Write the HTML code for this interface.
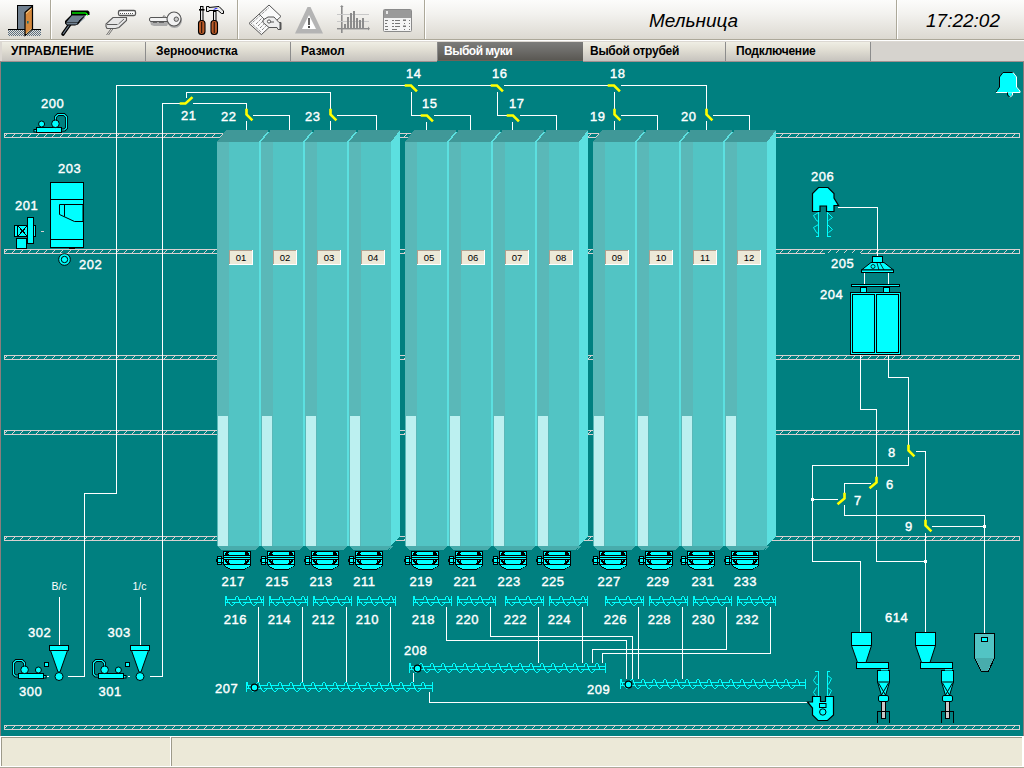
<!DOCTYPE html>
<html><head><meta charset="utf-8"><title>Мельница</title>
<style>
html,body{margin:0;padding:0;width:1024px;height:768px;overflow:hidden;background:#d6d3ce;font-family:"Liberation Sans",sans-serif;}
#hdr{position:absolute;left:0;top:0;width:1024px;height:39px;background:linear-gradient(#fcfcfb 0%,#f3f2ef 35%,#dcd9d1 100%);}
#hdrline1{position:absolute;left:0;top:39px;width:1024px;height:1px;background:#aca899;}
#hdrline2{position:absolute;left:0;top:40px;width:1024px;height:1px;background:#ffffff;}
#tabs{position:absolute;left:0;top:41px;width:1024px;height:21px;background:#dcd8d2;}
.tab{position:absolute;top:1px;height:19px;background:linear-gradient(#efeee4 0%,#e2dfd4 40%,#c6c3be 100%);font:bold 12px "Liberation Sans",sans-serif;color:#000;line-height:19px;box-sizing:border-box;padding-left:9px;white-space:nowrap}
.tab.sep{border-left:1px solid #8c8c8c;}
.tab.act{top:1px;height:19px;background:linear-gradient(#7c7c7a 0%,#6c6b68 50%,#5a5853 100%);color:#fff;border-left:1px solid #8a8a8a;border-bottom:1px solid #6e6258;line-height:18px}
#teal{position:absolute;left:0;top:61px;width:1024px;height:675px;background:#008080;box-sizing:border-box;border-left:1px solid #8c7c7c;border-top:1px solid #a09090;border-right:1px solid #8c7c7c;}
#status{position:absolute;left:0;top:736px;width:1024px;height:32px;background:#ffffff;}
.pan{position:absolute;top:1px;height:29px;background:#ece9d8;box-sizing:border-box;border-top:1px solid #9d9a8a;border-left:1px solid #9d9a8a;}
#scene{position:absolute;left:0;top:0;}
text{font-family:"Liberation Sans",sans-serif;}
text[fill="#fff"]{stroke:#fff;stroke-width:0.4px;letter-spacing:0.5px}
.title{position:absolute;top:10px;font:italic 19px "Liberation Sans",sans-serif;color:#000;white-space:nowrap}
</style></head>
<body>
<div id="hdr"></div><div id="hdrline1"></div><div id="hdrline2"></div>
<div class="title" style="left:649px;">Мельница</div>
<div class="title" style="left:926px;">17:22:02</div>
<div id="tabs">
<div class="tab" style="left:2px;width:143px;letter-spacing:0.1px">УПРАВЛЕНИЕ</div>
<div class="tab sep" style="left:145px;width:145px;padding-left:10px;letter-spacing:-0.1px">Зерноочистка</div>
<div class="tab sep" style="left:290px;width:147px;padding-left:10px">Размол</div>
<div class="tab act" style="left:437px;width:146px;padding-left:6px;letter-spacing:-0.5px">Выбой муки</div>
<div class="tab" style="left:583px;width:142px;padding-left:7px;letter-spacing:-0.27px">Выбой отрубей</div>
<div class="tab sep" style="left:725px;width:145px;padding-left:10px;letter-spacing:-0.22px">Подключение</div>
<div class="tab sep" style="left:870px;width:154px;background:#d6d3ce"></div>
</div>
<div id="teal"></div><div style="position:absolute;left:437px;top:61px;width:146px;height:1px;background:#008080"></div>
<div id="status">
<div class="pan" style="left:1px;width:169px;"></div>
<div class="pan" style="left:171px;width:851px;"></div>
<div style="position:absolute;left:0;top:31px;width:1024px;height:1px;background:#aca899"></div>
</div>
<svg id="scene" width="1024" height="768" viewBox="0 0 1024 768">
<defs><pattern id="hatch133" patternUnits="userSpaceOnUse" x="4" y="134" width="8" height="3"><rect x="2" y="0" width="1" height="1" fill="#d8d0d0"/><rect x="1" y="1" width="1" height="1" fill="#d8d0d0"/><rect x="0" y="2" width="1" height="1" fill="#d8d0d0"/></pattern><pattern id="hatch249" patternUnits="userSpaceOnUse" x="4" y="250" width="8" height="3"><rect x="2" y="0" width="1" height="1" fill="#d8d0d0"/><rect x="1" y="1" width="1" height="1" fill="#d8d0d0"/><rect x="0" y="2" width="1" height="1" fill="#d8d0d0"/></pattern><pattern id="hatch355" patternUnits="userSpaceOnUse" x="4" y="356" width="8" height="3"><rect x="2" y="0" width="1" height="1" fill="#d8d0d0"/><rect x="1" y="1" width="1" height="1" fill="#d8d0d0"/><rect x="0" y="2" width="1" height="1" fill="#d8d0d0"/></pattern><pattern id="hatch430" patternUnits="userSpaceOnUse" x="4" y="431" width="8" height="3"><rect x="2" y="0" width="1" height="1" fill="#d8d0d0"/><rect x="1" y="1" width="1" height="1" fill="#d8d0d0"/><rect x="0" y="2" width="1" height="1" fill="#d8d0d0"/></pattern><pattern id="hatch536" patternUnits="userSpaceOnUse" x="4" y="537" width="8" height="3"><rect x="2" y="0" width="1" height="1" fill="#d8d0d0"/><rect x="1" y="1" width="1" height="1" fill="#d8d0d0"/><rect x="0" y="2" width="1" height="1" fill="#d8d0d0"/></pattern><pattern id="hatch725" patternUnits="userSpaceOnUse" x="4" y="726" width="8" height="3"><rect x="2" y="0" width="1" height="1" fill="#d8d0d0"/><rect x="1" y="1" width="1" height="1" fill="#d8d0d0"/><rect x="0" y="2" width="1" height="1" fill="#d8d0d0"/></pattern>
<pattern id="dots" patternUnits="userSpaceOnUse" x="0" y="0" width="2" height="2"><rect x="0" y="0" width="1" height="1" fill="#5a6e80"/><rect x="1" y="1" width="1" height="1" fill="#5a6e80"/></pattern>
</defs>
<rect x="50" y="0" width="1" height="39" fill="#aca899"/>
<rect x="51" y="0" width="1" height="39" fill="#ffffff"/>
<rect x="237" y="0" width="1" height="39" fill="#aca899"/>
<rect x="238" y="0" width="1" height="39" fill="#ffffff"/>
<rect x="424" y="0" width="1" height="39" fill="#aca899"/>
<rect x="425" y="0" width="1" height="39" fill="#ffffff"/>
<rect x="896" y="0" width="1" height="39" fill="#aca899"/>
<rect x="897" y="0" width="1" height="39" fill="#ffffff"/>
<g>
<rect x="8" y="29" width="33" height="1" fill="#000"/>
<rect x="8" y="30" width="33" height="6" fill="url(#dots)"/>
<rect x="17.5" y="5.5" width="15" height="24" fill="#708090" stroke="#000"/>
<polygon points="25,12.5 32.5,6 32.5,29 25,35.5" fill="#d4883c" stroke="#000" stroke-width="1.2"/>
<line x1="26" y1="13.5" x2="31.5" y2="8.5" stroke="#ffe8b0" stroke-width="0.8"/>
<line x1="26" y1="34" x2="31.5" y2="29" stroke="#ffe8b0" stroke-width="0.8"/>
<rect x="27" y="21" width="1.6" height="2.5" fill="#1c6a78"/>
</g>
<g>
<line x1="70" y1="24" x2="63" y2="34" stroke="#000" stroke-width="3.6" stroke-linecap="round"/>
<line x1="70" y1="24" x2="63" y2="34" stroke="#708090" stroke-width="1.2"/>
<polygon points="71,10.5 88,10.5 89.5,12 89.5,15 86,15 78,24.5 75,25.5 67,25.5 65,23.5 65,21 71,15" fill="#000"/>
<polygon points="72,15.5 86,15.5 78.5,22 66.5,22" fill="#708090"/>
<polygon points="66,22.5 78,22.5 76.5,24.5 67,24.5" fill="#708090"/>
<line x1="72" y1="13" x2="86" y2="13" stroke="#00ff00" stroke-width="1.3"/>
<line x1="86" y1="13" x2="87.8" y2="15.3" stroke="#00ff00" stroke-width="1.3"/>
<line x1="84" y1="16.5" x2="78.5" y2="21.5" stroke="#000" stroke-width="1"/>
<line x1="85" y1="17.5" x2="80" y2="22" stroke="#708090" stroke-width="0.8"/>
</g>
<g>
<rect x="118.5" y="10.5" width="17" height="5" rx="1.5" fill="#fff" stroke="#555" stroke-width="1.3"/>
<g fill="#555"><rect x="120" y="13" width="1" height="1"/><rect x="122" y="13" width="1" height="1"/><rect x="124" y="13" width="1" height="1"/><rect x="126" y="13" width="1" height="1"/><rect x="128" y="13" width="1" height="1"/><rect x="130" y="13" width="1" height="1"/><rect x="132" y="13" width="1" height="1"/></g>
<line x1="111.5" y1="28" x2="106.5" y2="35" stroke="#666" stroke-width="0.9"/>
<line x1="113.5" y1="28" x2="108.5" y2="35" stroke="#666" stroke-width="0.9"/>
<polygon points="113,17.5 126.5,17.5 126.5,20.5 119,27.5 115.5,28.5 107,28.5 106,26.5 106,24 " fill="#e6e6e6" stroke="#5a5a5a" stroke-width="1.1"/>
<line x1="107" y1="24.5" x2="117.5" y2="24.5" stroke="#5a5a5a"/>
<line x1="124" y1="19" x2="118.5" y2="24" stroke="#5a5a5a" stroke-width="0.9"/>
</g>
<g>
<polygon points="150,21 151,25 154,26 167,26 168,24 167,21" fill="#aaa"/>
<circle cx="174.5" cy="20.5" r="7.5" fill="#aaa"/>
<rect x="149.5" y="17.5" width="20" height="4" rx="1.5" fill="#f2f2f2" stroke="#555"/>
<polygon points="162.5,17.5 164,15.5 166,17.5" fill="#f2f2f2" stroke="#555" stroke-width="0.8"/>
<circle cx="174" cy="19" r="7" fill="#f2f2f2" stroke="#555" stroke-width="1.1"/>
<circle cx="176.3" cy="19.2" r="2.2" fill="#ccc" stroke="#555"/>
<line x1="153" y1="22.3" x2="157" y2="22.3" stroke="#555"/>
<line x1="159" y1="22.3" x2="164" y2="22.3" stroke="#555"/>
</g>
<g>
<rect x="200.5" y="6.5" width="2.5" height="14" fill="#e8e8e8" stroke="#000"/>
<rect x="199" y="9" width="5.5" height="1.6" fill="#000"/>
<rect x="198.5" y="20.5" width="6.5" height="14" rx="3" fill="#b85a28" stroke="#000" stroke-width="1.1"/>
<line x1="201.7" y1="22" x2="201.7" y2="33" stroke="#000" stroke-width="0.9"/>
<rect x="213.5" y="11.5" width="2.5" height="9" fill="#e8e8e8" stroke="#000"/>
<rect x="211" y="20.5" width="6.5" height="14" rx="3" fill="#b85a28" stroke="#000" stroke-width="1.1"/>
<line x1="214.2" y1="22" x2="214.2" y2="33" stroke="#000" stroke-width="0.9"/>
<polygon points="206.5,6.5 209,6.5 209,7.5 219,6.5 223.5,11 223.5,13.5 221.5,13.5 218,10.5 209,10.5 209,11.5 206.5,11.5" fill="#e8e8e8" stroke="#000"/>
<polygon points="213,9.5 216,8 218,8 215,9.5" fill="#0000ff"/>
</g>
<g>
<polygon points="249,23.4 269,5 281,16.4 261.4,34.6" fill="#fafafa" stroke="#555" stroke-width="1"/>
<polyline points="251.5,23.4 269,7.5" fill="none" stroke="#666" stroke-width="1" stroke-dasharray="1,1"/>
<polyline points="251.5,23.4 261.4,32.3" fill="none" stroke="#666" stroke-width="1" stroke-dasharray="1,1"/>
<line x1="259" y1="14" x2="272" y2="27" stroke="#555" stroke-width="0.9"/>
<line x1="256" y1="24" x2="262" y2="18" stroke="#555" stroke-dasharray="1,1"/>
<line x1="258" y1="26" x2="263" y2="21" stroke="#555" stroke-dasharray="1,1"/>
<line x1="260" y1="28" x2="265" y2="23" stroke="#555" stroke-dasharray="1,1"/>
<line x1="262" y1="30" x2="266" y2="26" stroke="#555" stroke-dasharray="1,1"/>
<polygon points="263,20 268,17 274,17 279,22.5 281,22.5 281,29.5 278,29.5 277,27.5 269,27.5 263,22.5" fill="#eee" stroke="#555"/>
<circle cx="269" cy="21.5" r="1.6" fill="#fff" stroke="#555"/>
<line x1="270" y1="22" x2="274" y2="22" stroke="#555"/>
<rect x="279.5" y="22" width="1.5" height="7.5" fill="#555"/>
</g>
<g>
<polygon points="307.5,7 310.5,7 323,33.5 295,33.5" fill="#b4b4b4"/>
<polygon points="309,15 316,29 302,29" fill="#fff"/>
<rect x="308" y="18" width="2" height="7" fill="#666"/>
<rect x="308" y="26" width="2" height="2" fill="#444"/>
</g>
<g fill="#8c8c8c">
<rect x="341" y="6" width="1.6" height="27"/>
<polygon points="340,7 341.8,5 343.6,7"/>
<rect x="337" y="28" width="32" height="1.4"/>
<polygon points="368,26.5 370,28.7 368,30.5"/>
<rect x="337" y="14" width="32" height="1" fill="#c8c8c8"/>
<rect x="337" y="21" width="32" height="1" fill="#c8c8c8"/>
<rect x="344" y="24" width="2" height="4"/>
<rect x="347" y="17" width="2" height="11"/>
<rect x="350" y="13" width="2" height="15"/>
<rect x="353" y="11" width="2" height="17"/>
<rect x="356" y="18" width="2" height="10"/>
<rect x="359" y="20" width="2" height="8"/>
<rect x="362" y="18" width="2" height="10"/>
</g>
<g>
<rect x="383.5" y="9.5" width="28" height="22" rx="1" fill="#f4f4f4" stroke="#8a8a8a"/>
<rect x="384" y="10" width="27" height="8" fill="#9a9a9a"/>
<rect x="386" y="11" width="2" height="3" fill="#e8e8e8"/>
<g fill="#777"><rect x="385" y="20" width="3" height="1"/><rect x="392" y="20" width="2" height="1"/><rect x="395" y="20" width="5" height="1"/><rect x="403" y="19.5" width="3" height="1.5"/><rect x="409" y="20" width="1" height="1"/>
<rect x="385" y="23" width="2" height="1"/><rect x="392" y="23" width="2" height="1"/><rect x="395" y="23" width="5" height="1"/><rect x="404" y="23" width="1" height="1"/><rect x="409" y="23" width="1" height="1"/>
<rect x="385" y="26" width="3" height="1"/><rect x="392" y="26" width="2" height="1"/><rect x="395" y="26" width="5" height="1"/><rect x="403" y="25.5" width="3" height="1.5"/><rect x="409" y="26" width="1" height="1"/>
<rect x="385" y="29" width="3" height="1"/><rect x="392" y="29" width="5" height="1"/><rect x="404" y="29" width="1" height="1"/><rect x="409" y="29" width="1" height="1"/></g>
</g>
<g shape-rendering="crispEdges">
<rect x="4" y="133" width="1016" height="1" fill="#d8d0d0"/>
<rect x="4" y="137" width="1016" height="1" fill="#d8d0d0"/>
<rect x="4" y="133" width="1" height="5" fill="#d8d0d0"/>
<rect x="1019" y="133" width="1" height="5" fill="#d8d0d0"/>
<rect x="5" y="134" width="1014" height="3" fill="url(#hatch133)"/>
<rect x="4" y="249" width="1016" height="1" fill="#d8d0d0"/>
<rect x="4" y="253" width="1016" height="1" fill="#d8d0d0"/>
<rect x="4" y="249" width="1" height="5" fill="#d8d0d0"/>
<rect x="1019" y="249" width="1" height="5" fill="#d8d0d0"/>
<rect x="5" y="250" width="1014" height="3" fill="url(#hatch249)"/>
<rect x="4" y="355" width="1016" height="1" fill="#d8d0d0"/>
<rect x="4" y="359" width="1016" height="1" fill="#d8d0d0"/>
<rect x="4" y="355" width="1" height="5" fill="#d8d0d0"/>
<rect x="1019" y="355" width="1" height="5" fill="#d8d0d0"/>
<rect x="5" y="356" width="1014" height="3" fill="url(#hatch355)"/>
<rect x="4" y="430" width="1016" height="1" fill="#d8d0d0"/>
<rect x="4" y="434" width="1016" height="1" fill="#d8d0d0"/>
<rect x="4" y="430" width="1" height="5" fill="#d8d0d0"/>
<rect x="1019" y="430" width="1" height="5" fill="#d8d0d0"/>
<rect x="5" y="431" width="1014" height="3" fill="url(#hatch430)"/>
<rect x="4" y="536" width="1016" height="1" fill="#d8d0d0"/>
<rect x="4" y="540" width="1016" height="1" fill="#d8d0d0"/>
<rect x="4" y="536" width="1" height="5" fill="#d8d0d0"/>
<rect x="1019" y="536" width="1" height="5" fill="#d8d0d0"/>
<rect x="5" y="537" width="1014" height="3" fill="url(#hatch536)"/>
<rect x="4" y="725" width="1016" height="1" fill="#d8d0d0"/>
<rect x="4" y="729" width="1016" height="1" fill="#d8d0d0"/>
<rect x="4" y="725" width="1" height="5" fill="#d8d0d0"/>
<rect x="1019" y="725" width="1" height="5" fill="#d8d0d0"/>
<rect x="5" y="726" width="1014" height="3" fill="url(#hatch725)"/>
<rect x="825" y="253" width="36" height="1" fill="#008080"/>
<rect x="116" y="85" width="1" height="409" fill="#fff"/>
<rect x="116" y="85" width="290" height="1" fill="#fff"/>
<rect x="418" y="85" width="74" height="1" fill="#fff"/>
<rect x="504" y="85" width="105" height="1" fill="#fff"/>
<rect x="621" y="85" width="86" height="1" fill="#fff"/>
<rect x="706" y="85" width="1" height="25" fill="#fff"/>
<rect x="84" y="493" width="33" height="1" fill="#fff"/>
<rect x="84" y="493" width="1" height="184" fill="#fff"/>
<rect x="68" y="676" width="17" height="1" fill="#fff"/>
<rect x="162" y="103" width="1" height="574" fill="#fff"/>
<rect x="162" y="103" width="19" height="1" fill="#fff"/>
<rect x="193" y="103" width="54" height="1" fill="#fff"/>
<rect x="246" y="103" width="1" height="7" fill="#fff"/>
<rect x="246" y="121" width="1" height="9" fill="#fff"/>
<rect x="186" y="92" width="1" height="6" fill="#fff"/>
<rect x="186" y="92" width="145" height="1" fill="#fff"/>
<rect x="330" y="92" width="1" height="18" fill="#fff"/>
<rect x="330" y="121" width="1" height="9" fill="#fff"/>
<rect x="253" y="115" width="37" height="1" fill="#fff"/>
<rect x="289" y="115" width="1" height="15" fill="#fff"/>
<rect x="337" y="115" width="40" height="1" fill="#fff"/>
<rect x="376" y="115" width="1" height="15" fill="#fff"/>
<rect x="411" y="92" width="1" height="24" fill="#fff"/>
<rect x="411" y="115" width="11" height="1" fill="#fff"/>
<rect x="426" y="122" width="1" height="8" fill="#fff"/>
<rect x="434" y="115" width="37" height="1" fill="#fff"/>
<rect x="470" y="115" width="1" height="15" fill="#fff"/>
<rect x="497" y="92" width="1" height="24" fill="#fff"/>
<rect x="497" y="115" width="11" height="1" fill="#fff"/>
<rect x="512" y="122" width="1" height="8" fill="#fff"/>
<rect x="520" y="115" width="37" height="1" fill="#fff"/>
<rect x="556" y="115" width="1" height="15" fill="#fff"/>
<rect x="614" y="92" width="1" height="18" fill="#fff"/>
<rect x="614" y="121" width="1" height="9" fill="#fff"/>
<rect x="621" y="115" width="37" height="1" fill="#fff"/>
<rect x="657" y="115" width="1" height="15" fill="#fff"/>
<rect x="706" y="121" width="1" height="9" fill="#fff"/>
<rect x="713" y="115" width="37" height="1" fill="#fff"/>
<rect x="749" y="115" width="1" height="15" fill="#fff"/>
<rect x="150" y="676" width="13" height="1" fill="#fff"/>
<rect x="59" y="597" width="1" height="49" fill="#fff"/>
<rect x="140" y="597" width="1" height="49" fill="#fff"/>
<rect x="258" y="607" width="1" height="75" fill="#fff"/>
<rect x="302" y="607" width="1" height="75" fill="#fff"/>
<rect x="346" y="607" width="1" height="75" fill="#fff"/>
<rect x="390" y="607" width="1" height="75" fill="#fff"/>
<rect x="446" y="607" width="1" height="34" fill="#fff"/>
<rect x="446" y="640" width="181" height="1" fill="#fff"/>
<rect x="626" y="640" width="1" height="39" fill="#fff"/>
<rect x="490" y="607" width="1" height="30" fill="#fff"/>
<rect x="490" y="636" width="143" height="1" fill="#fff"/>
<rect x="632" y="636" width="1" height="43" fill="#fff"/>
<rect x="538" y="607" width="1" height="56" fill="#fff"/>
<rect x="582" y="607" width="1" height="56" fill="#fff"/>
<rect x="638" y="607" width="1" height="72" fill="#fff"/>
<rect x="682" y="607" width="1" height="72" fill="#fff"/>
<rect x="726" y="607" width="1" height="43" fill="#fff"/>
<rect x="592" y="649" width="135" height="1" fill="#fff"/>
<rect x="592" y="649" width="1" height="14" fill="#fff"/>
<rect x="770" y="607" width="1" height="47" fill="#fff"/>
<rect x="602" y="653" width="169" height="1" fill="#fff"/>
<rect x="602" y="653" width="1" height="10" fill="#fff"/>
<rect x="413" y="673" width="1" height="9" fill="#fff"/>
<rect x="429" y="692" width="1" height="11" fill="#fff"/>
<rect x="429" y="702" width="379" height="1" fill="#fff"/>
<rect x="838" y="207" width="40" height="1" fill="#fff"/>
<rect x="877" y="207" width="1" height="50" fill="#fff"/>
<rect x="864" y="272" width="1" height="13" fill="#fff"/>
<rect x="888" y="272" width="1" height="13" fill="#fff"/>
<rect x="860" y="355" width="1" height="55" fill="#fff"/>
<rect x="860" y="409" width="17" height="1" fill="#fff"/>
<rect x="876" y="409" width="1" height="69" fill="#fff"/>
<rect x="888" y="355" width="1" height="23" fill="#fff"/>
<rect x="888" y="377" width="21" height="1" fill="#fff"/>
<rect x="908" y="377" width="1" height="69" fill="#fff"/>
<rect x="916" y="451" width="10" height="1" fill="#fff"/>
<rect x="925" y="451" width="1" height="70" fill="#fff"/>
<rect x="908" y="457" width="1" height="9" fill="#fff"/>
<rect x="812" y="465" width="97" height="1" fill="#fff"/>
<rect x="812" y="465" width="1" height="97" fill="#fff"/>
<rect x="812" y="561" width="49" height="1" fill="#fff"/>
<rect x="860" y="561" width="1" height="72" fill="#fff"/>
<rect x="844" y="483" width="27" height="1" fill="#fff"/>
<rect x="844" y="483" width="1" height="11" fill="#fff"/>
<rect x="812" y="499" width="26" height="1" fill="#fff"/>
<rect x="876" y="490" width="1" height="72" fill="#fff"/>
<rect x="876" y="561" width="50" height="1" fill="#fff"/>
<rect x="925" y="533" width="1" height="100" fill="#fff"/>
<rect x="844" y="505" width="1" height="11" fill="#fff"/>
<rect x="844" y="515" width="141" height="1" fill="#fff"/>
<rect x="984" y="515" width="1" height="119" fill="#fff"/>
<rect x="932" y="526" width="53" height="1" fill="#fff"/>
<rect x="811" y="498" width="3" height="3" fill="#fff"/>
<rect x="983" y="525" width="3" height="3" fill="#fff"/>
<rect x="924" y="560" width="3" height="3" fill="#fff"/>
</g>
<polyline points="181,103.5 185.5,103.5 191.5,98" fill="none" stroke="#ffff00" stroke-width="2.6" stroke-linecap="square"/>
<polyline points="246.5,110 246.5,114.5 251.5,119.5" fill="none" stroke="#ffff00" stroke-width="2.6" stroke-linecap="square" stroke-linejoin="miter"/>
<polyline points="330.5,110 330.5,114.5 335.5,119.5" fill="none" stroke="#ffff00" stroke-width="2.6" stroke-linecap="square" stroke-linejoin="miter"/>
<polyline points="406,85.5 411,85.5 416,90.5" fill="none" stroke="#ffff00" stroke-width="2.6" stroke-linecap="square" stroke-linejoin="miter"/>
<polyline points="422,115.5 427,115.5 432,120.5" fill="none" stroke="#ffff00" stroke-width="2.6" stroke-linecap="square" stroke-linejoin="miter"/>
<polyline points="492,85.5 497,85.5 502,90.5" fill="none" stroke="#ffff00" stroke-width="2.6" stroke-linecap="square" stroke-linejoin="miter"/>
<polyline points="508,115.5 513,115.5 518,120.5" fill="none" stroke="#ffff00" stroke-width="2.6" stroke-linecap="square" stroke-linejoin="miter"/>
<polyline points="609,85.5 614,85.5 619,90.5" fill="none" stroke="#ffff00" stroke-width="2.6" stroke-linecap="square" stroke-linejoin="miter"/>
<polyline points="614.5,110 614.5,114.5 619.5,119.5" fill="none" stroke="#ffff00" stroke-width="2.6" stroke-linecap="square" stroke-linejoin="miter"/>
<polyline points="706.5,110 706.5,114.5 711.5,119.5" fill="none" stroke="#ffff00" stroke-width="2.6" stroke-linecap="square" stroke-linejoin="miter"/>
<polyline points="908.5,446 908.5,450.5 913.5,455.5" fill="none" stroke="#ffff00" stroke-width="2.6" stroke-linecap="square" stroke-linejoin="miter"/>
<polyline points="925.5,521 925.5,525.5 930.5,530.5" fill="none" stroke="#ffff00" stroke-width="2.6" stroke-linecap="square" stroke-linejoin="miter"/>
<polyline points="876.5,478 876.5,482.5 870.5,487.5" fill="none" stroke="#ffff00" stroke-width="2.6" stroke-linecap="square" stroke-linejoin="miter"/>
<polyline points="844.5,494 844.5,498.5 838.5,503.5" fill="none" stroke="#ffff00" stroke-width="2.6" stroke-linecap="square" stroke-linejoin="miter"/>
<g shape-rendering="crispEdges">
<polygon points="217,142 226,130 400,130 400,142" fill="#409898" />
<rect x="217" y="142" width="174" height="404" fill="#52c4c4"/>
<polygon points="391,142 400,130 400,536 391,546" fill="#5ce0e0" />
<rect x="217" y="142" width="12" height="404" fill="#5ab8b8"/>
<rect x="218" y="416" width="10" height="130" fill="#bcf0f0"/>
<polygon points="217,546 259,546 255,550 221,550" fill="#48acac" />
<rect x="259" y="142" width="2" height="404" fill="#5ce0e0"/>
<polygon points="259,142 268,131 270,131 261,142" fill="#5ce0e0" />
<rect x="268" y="130" width="2" height="2" fill="#00807f"/>
<rect x="261" y="142" width="12" height="404" fill="#5ab8b8"/>
<rect x="262" y="416" width="10" height="130" fill="#bcf0f0"/>
<polygon points="261,546 303,546 299,550 265,550" fill="#48acac" />
<rect x="303" y="142" width="2" height="404" fill="#5ce0e0"/>
<polygon points="303,142 312,131 314,131 305,142" fill="#5ce0e0" />
<rect x="312" y="130" width="2" height="2" fill="#00807f"/>
<rect x="305" y="142" width="12" height="404" fill="#5ab8b8"/>
<rect x="306" y="416" width="10" height="130" fill="#bcf0f0"/>
<polygon points="305,546 347,546 343,550 309,550" fill="#48acac" />
<rect x="347" y="142" width="2" height="404" fill="#5ce0e0"/>
<polygon points="347,142 356,131 358,131 349,142" fill="#5ce0e0" />
<rect x="356" y="130" width="2" height="2" fill="#00807f"/>
<rect x="349" y="142" width="12" height="404" fill="#5ab8b8"/>
<rect x="350" y="416" width="10" height="130" fill="#bcf0f0"/>
<polygon points="349,546 391,546 387,550 353,550" fill="#48acac" />
<polygon points="391,546 393,546 389,550" fill="#48acac" />
<polygon points="405,142 414,130 588,130 588,142" fill="#409898" />
<rect x="405" y="142" width="174" height="404" fill="#52c4c4"/>
<polygon points="579,142 588,130 588,536 579,546" fill="#5ce0e0" />
<rect x="405" y="142" width="12" height="404" fill="#5ab8b8"/>
<rect x="406" y="416" width="10" height="130" fill="#bcf0f0"/>
<polygon points="405,546 447,546 443,550 409,550" fill="#48acac" />
<rect x="447" y="142" width="2" height="404" fill="#5ce0e0"/>
<polygon points="447,142 456,131 458,131 449,142" fill="#5ce0e0" />
<rect x="456" y="130" width="2" height="2" fill="#00807f"/>
<rect x="449" y="142" width="12" height="404" fill="#5ab8b8"/>
<rect x="450" y="416" width="10" height="130" fill="#bcf0f0"/>
<polygon points="449,546 491,546 487,550 453,550" fill="#48acac" />
<rect x="491" y="142" width="2" height="404" fill="#5ce0e0"/>
<polygon points="491,142 500,131 502,131 493,142" fill="#5ce0e0" />
<rect x="500" y="130" width="2" height="2" fill="#00807f"/>
<rect x="493" y="142" width="12" height="404" fill="#5ab8b8"/>
<rect x="494" y="416" width="10" height="130" fill="#bcf0f0"/>
<polygon points="493,546 535,546 531,550 497,550" fill="#48acac" />
<rect x="535" y="142" width="2" height="404" fill="#5ce0e0"/>
<polygon points="535,142 544,131 546,131 537,142" fill="#5ce0e0" />
<rect x="544" y="130" width="2" height="2" fill="#00807f"/>
<rect x="537" y="142" width="12" height="404" fill="#5ab8b8"/>
<rect x="538" y="416" width="10" height="130" fill="#bcf0f0"/>
<polygon points="537,546 579,546 575,550 541,550" fill="#48acac" />
<polygon points="579,546 581,546 577,550" fill="#48acac" />
<polygon points="593,142 602,130 776,130 776,142" fill="#409898" />
<rect x="593" y="142" width="174" height="404" fill="#52c4c4"/>
<polygon points="767,142 776,130 776,536 767,546" fill="#5ce0e0" />
<rect x="593" y="142" width="12" height="404" fill="#5ab8b8"/>
<rect x="594" y="416" width="10" height="130" fill="#bcf0f0"/>
<polygon points="593,546 635,546 631,550 597,550" fill="#48acac" />
<rect x="635" y="142" width="2" height="404" fill="#5ce0e0"/>
<polygon points="635,142 644,131 646,131 637,142" fill="#5ce0e0" />
<rect x="644" y="130" width="2" height="2" fill="#00807f"/>
<rect x="637" y="142" width="12" height="404" fill="#5ab8b8"/>
<rect x="638" y="416" width="10" height="130" fill="#bcf0f0"/>
<polygon points="637,546 679,546 675,550 641,550" fill="#48acac" />
<rect x="679" y="142" width="2" height="404" fill="#5ce0e0"/>
<polygon points="679,142 688,131 690,131 681,142" fill="#5ce0e0" />
<rect x="688" y="130" width="2" height="2" fill="#00807f"/>
<rect x="681" y="142" width="12" height="404" fill="#5ab8b8"/>
<rect x="682" y="416" width="10" height="130" fill="#bcf0f0"/>
<polygon points="681,546 723,546 719,550 685,550" fill="#48acac" />
<rect x="723" y="142" width="2" height="404" fill="#5ce0e0"/>
<polygon points="723,142 732,131 734,131 725,142" fill="#5ce0e0" />
<rect x="732" y="130" width="2" height="2" fill="#00807f"/>
<rect x="725" y="142" width="12" height="404" fill="#5ab8b8"/>
<rect x="726" y="416" width="10" height="130" fill="#bcf0f0"/>
<polygon points="725,546 767,546 763,550 729,550" fill="#48acac" />
<polygon points="767,546 769,546 765,550" fill="#48acac" />
<rect x="229" y="250" width="24" height="15" fill="#ffffff"/>
<rect x="229" y="250" width="23" height="14" fill="#b0a090"/>
<rect x="230" y="251" width="22" height="13" fill="#ece9d8"/>
<rect x="273" y="250" width="24" height="15" fill="#ffffff"/>
<rect x="273" y="250" width="23" height="14" fill="#b0a090"/>
<rect x="274" y="251" width="22" height="13" fill="#ece9d8"/>
<rect x="317" y="250" width="24" height="15" fill="#ffffff"/>
<rect x="317" y="250" width="23" height="14" fill="#b0a090"/>
<rect x="318" y="251" width="22" height="13" fill="#ece9d8"/>
<rect x="361" y="250" width="24" height="15" fill="#ffffff"/>
<rect x="361" y="250" width="23" height="14" fill="#b0a090"/>
<rect x="362" y="251" width="22" height="13" fill="#ece9d8"/>
<rect x="417" y="250" width="24" height="15" fill="#ffffff"/>
<rect x="417" y="250" width="23" height="14" fill="#b0a090"/>
<rect x="418" y="251" width="22" height="13" fill="#ece9d8"/>
<rect x="461" y="250" width="24" height="15" fill="#ffffff"/>
<rect x="461" y="250" width="23" height="14" fill="#b0a090"/>
<rect x="462" y="251" width="22" height="13" fill="#ece9d8"/>
<rect x="505" y="250" width="24" height="15" fill="#ffffff"/>
<rect x="505" y="250" width="23" height="14" fill="#b0a090"/>
<rect x="506" y="251" width="22" height="13" fill="#ece9d8"/>
<rect x="549" y="250" width="24" height="15" fill="#ffffff"/>
<rect x="549" y="250" width="23" height="14" fill="#b0a090"/>
<rect x="550" y="251" width="22" height="13" fill="#ece9d8"/>
<rect x="605" y="250" width="24" height="15" fill="#ffffff"/>
<rect x="605" y="250" width="23" height="14" fill="#b0a090"/>
<rect x="606" y="251" width="22" height="13" fill="#ece9d8"/>
<rect x="649" y="250" width="24" height="15" fill="#ffffff"/>
<rect x="649" y="250" width="23" height="14" fill="#b0a090"/>
<rect x="650" y="251" width="22" height="13" fill="#ece9d8"/>
<rect x="693" y="250" width="24" height="15" fill="#ffffff"/>
<rect x="693" y="250" width="23" height="14" fill="#b0a090"/>
<rect x="694" y="251" width="22" height="13" fill="#ece9d8"/>
<rect x="737" y="250" width="24" height="15" fill="#ffffff"/>
<rect x="737" y="250" width="23" height="14" fill="#b0a090"/>
<rect x="738" y="251" width="22" height="13" fill="#ece9d8"/>
</g>
<text x="241" y="261" font-size="9.5" fill="#000" font-weight="normal" text-anchor="middle" font-style="normal">01</text>
<text x="285" y="261" font-size="9.5" fill="#000" font-weight="normal" text-anchor="middle" font-style="normal">02</text>
<text x="329" y="261" font-size="9.5" fill="#000" font-weight="normal" text-anchor="middle" font-style="normal">03</text>
<text x="373" y="261" font-size="9.5" fill="#000" font-weight="normal" text-anchor="middle" font-style="normal">04</text>
<text x="429" y="261" font-size="9.5" fill="#000" font-weight="normal" text-anchor="middle" font-style="normal">05</text>
<text x="473" y="261" font-size="9.5" fill="#000" font-weight="normal" text-anchor="middle" font-style="normal">06</text>
<text x="517" y="261" font-size="9.5" fill="#000" font-weight="normal" text-anchor="middle" font-style="normal">07</text>
<text x="561" y="261" font-size="9.5" fill="#000" font-weight="normal" text-anchor="middle" font-style="normal">08</text>
<text x="617" y="261" font-size="9.5" fill="#000" font-weight="normal" text-anchor="middle" font-style="normal">09</text>
<text x="661" y="261" font-size="9.5" fill="#000" font-weight="normal" text-anchor="middle" font-style="normal">10</text>
<text x="705" y="261" font-size="9.5" fill="#000" font-weight="normal" text-anchor="middle" font-style="normal">11</text>
<text x="749" y="261" font-size="9.5" fill="#000" font-weight="normal" text-anchor="middle" font-style="normal">12</text>
<g transform="translate(215,549)" shape-rendering="crispEdges">
<polygon points="8,2 36,2 36,16 35,17 34,18 32,19 30,20 29,21 15,21 14,20 12,19 10,18 9,17 8,16" fill="#000"/>
<polygon points="14,3 29,3 30,4 30,5 29,6 14,6 13,5 13,4" fill="#00ffff"/>
<rect x="9" y="3" width="1" height="3" fill="#00ffff"/><rect x="10" y="3" width="1" height="1" fill="#00ffff"/>
<rect x="34" y="3" width="1" height="3" fill="#00ffff"/><rect x="33" y="3" width="1" height="1" fill="#00ffff"/>
<rect x="9" y="7" width="26" height="1" fill="#00ffff"/><rect x="9" y="9" width="26" height="1" fill="#00ffff"/>
<polygon points="14,11 30,11 30,13 29,15 15,15 14,13" fill="#00ffff"/>
<rect x="9" y="11" width="1" height="4" fill="#00ffff"/><rect x="10" y="13" width="1" height="2" fill="#00ffff"/><rect x="11" y="14" width="1" height="1" fill="#00ffff"/>
<rect x="34" y="11" width="1" height="4" fill="#00ffff"/><rect x="33" y="13" width="1" height="2" fill="#00ffff"/><rect x="32" y="14" width="1" height="1" fill="#00ffff"/>
<rect x="12" y="11" width="1" height="1" fill="#00ffff"/><rect x="31" y="11" width="1" height="1" fill="#00ffff"/>
<rect x="10" y="16" width="25" height="1" fill="#00ffff"/><rect x="11" y="17" width="23" height="1" fill="#00ffff"/><rect x="13" y="18" width="19" height="1" fill="#00ffff"/><rect x="15" y="19" width="15" height="1" fill="#00ffff"/>
<rect x="2" y="7" width="5" height="9" fill="#000"/><rect x="1" y="10" width="1" height="3" fill="#000"/>
<rect x="3" y="8" width="3" height="1" fill="#00ffff"/><rect x="3" y="10" width="3" height="3" fill="#00ffff"/><rect x="3" y="14" width="3" height="1" fill="#00ffff"/>
<rect x="7" y="9" width="2" height="5" fill="#000"/><rect x="7" y="10" width="1" height="3" fill="#00ffff"/>
</g>
<text x="221.5" y="586" font-size="13" fill="#fff" font-weight="normal" text-anchor="start" font-style="normal">217</text>
<g transform="translate(259,549)" shape-rendering="crispEdges">
<polygon points="8,2 36,2 36,16 35,17 34,18 32,19 30,20 29,21 15,21 14,20 12,19 10,18 9,17 8,16" fill="#000"/>
<polygon points="14,3 29,3 30,4 30,5 29,6 14,6 13,5 13,4" fill="#00ffff"/>
<rect x="9" y="3" width="1" height="3" fill="#00ffff"/><rect x="10" y="3" width="1" height="1" fill="#00ffff"/>
<rect x="34" y="3" width="1" height="3" fill="#00ffff"/><rect x="33" y="3" width="1" height="1" fill="#00ffff"/>
<rect x="9" y="7" width="26" height="1" fill="#00ffff"/><rect x="9" y="9" width="26" height="1" fill="#00ffff"/>
<polygon points="14,11 30,11 30,13 29,15 15,15 14,13" fill="#00ffff"/>
<rect x="9" y="11" width="1" height="4" fill="#00ffff"/><rect x="10" y="13" width="1" height="2" fill="#00ffff"/><rect x="11" y="14" width="1" height="1" fill="#00ffff"/>
<rect x="34" y="11" width="1" height="4" fill="#00ffff"/><rect x="33" y="13" width="1" height="2" fill="#00ffff"/><rect x="32" y="14" width="1" height="1" fill="#00ffff"/>
<rect x="12" y="11" width="1" height="1" fill="#00ffff"/><rect x="31" y="11" width="1" height="1" fill="#00ffff"/>
<rect x="10" y="16" width="25" height="1" fill="#00ffff"/><rect x="11" y="17" width="23" height="1" fill="#00ffff"/><rect x="13" y="18" width="19" height="1" fill="#00ffff"/><rect x="15" y="19" width="15" height="1" fill="#00ffff"/>
<rect x="2" y="7" width="5" height="9" fill="#000"/><rect x="1" y="10" width="1" height="3" fill="#000"/>
<rect x="3" y="8" width="3" height="1" fill="#00ffff"/><rect x="3" y="10" width="3" height="3" fill="#00ffff"/><rect x="3" y="14" width="3" height="1" fill="#00ffff"/>
<rect x="7" y="9" width="2" height="5" fill="#000"/><rect x="7" y="10" width="1" height="3" fill="#00ffff"/>
</g>
<text x="265.5" y="586" font-size="13" fill="#fff" font-weight="normal" text-anchor="start" font-style="normal">215</text>
<g transform="translate(303,549)" shape-rendering="crispEdges">
<polygon points="8,2 36,2 36,16 35,17 34,18 32,19 30,20 29,21 15,21 14,20 12,19 10,18 9,17 8,16" fill="#000"/>
<polygon points="14,3 29,3 30,4 30,5 29,6 14,6 13,5 13,4" fill="#00ffff"/>
<rect x="9" y="3" width="1" height="3" fill="#00ffff"/><rect x="10" y="3" width="1" height="1" fill="#00ffff"/>
<rect x="34" y="3" width="1" height="3" fill="#00ffff"/><rect x="33" y="3" width="1" height="1" fill="#00ffff"/>
<rect x="9" y="7" width="26" height="1" fill="#00ffff"/><rect x="9" y="9" width="26" height="1" fill="#00ffff"/>
<polygon points="14,11 30,11 30,13 29,15 15,15 14,13" fill="#00ffff"/>
<rect x="9" y="11" width="1" height="4" fill="#00ffff"/><rect x="10" y="13" width="1" height="2" fill="#00ffff"/><rect x="11" y="14" width="1" height="1" fill="#00ffff"/>
<rect x="34" y="11" width="1" height="4" fill="#00ffff"/><rect x="33" y="13" width="1" height="2" fill="#00ffff"/><rect x="32" y="14" width="1" height="1" fill="#00ffff"/>
<rect x="12" y="11" width="1" height="1" fill="#00ffff"/><rect x="31" y="11" width="1" height="1" fill="#00ffff"/>
<rect x="10" y="16" width="25" height="1" fill="#00ffff"/><rect x="11" y="17" width="23" height="1" fill="#00ffff"/><rect x="13" y="18" width="19" height="1" fill="#00ffff"/><rect x="15" y="19" width="15" height="1" fill="#00ffff"/>
<rect x="2" y="7" width="5" height="9" fill="#000"/><rect x="1" y="10" width="1" height="3" fill="#000"/>
<rect x="3" y="8" width="3" height="1" fill="#00ffff"/><rect x="3" y="10" width="3" height="3" fill="#00ffff"/><rect x="3" y="14" width="3" height="1" fill="#00ffff"/>
<rect x="7" y="9" width="2" height="5" fill="#000"/><rect x="7" y="10" width="1" height="3" fill="#00ffff"/>
</g>
<text x="309.4" y="586" font-size="13" fill="#fff" font-weight="normal" text-anchor="start" font-style="normal">213</text>
<g transform="translate(347,549)" shape-rendering="crispEdges">
<polygon points="8,2 36,2 36,16 35,17 34,18 32,19 30,20 29,21 15,21 14,20 12,19 10,18 9,17 8,16" fill="#000"/>
<polygon points="14,3 29,3 30,4 30,5 29,6 14,6 13,5 13,4" fill="#00ffff"/>
<rect x="9" y="3" width="1" height="3" fill="#00ffff"/><rect x="10" y="3" width="1" height="1" fill="#00ffff"/>
<rect x="34" y="3" width="1" height="3" fill="#00ffff"/><rect x="33" y="3" width="1" height="1" fill="#00ffff"/>
<rect x="9" y="7" width="26" height="1" fill="#00ffff"/><rect x="9" y="9" width="26" height="1" fill="#00ffff"/>
<polygon points="14,11 30,11 30,13 29,15 15,15 14,13" fill="#00ffff"/>
<rect x="9" y="11" width="1" height="4" fill="#00ffff"/><rect x="10" y="13" width="1" height="2" fill="#00ffff"/><rect x="11" y="14" width="1" height="1" fill="#00ffff"/>
<rect x="34" y="11" width="1" height="4" fill="#00ffff"/><rect x="33" y="13" width="1" height="2" fill="#00ffff"/><rect x="32" y="14" width="1" height="1" fill="#00ffff"/>
<rect x="12" y="11" width="1" height="1" fill="#00ffff"/><rect x="31" y="11" width="1" height="1" fill="#00ffff"/>
<rect x="10" y="16" width="25" height="1" fill="#00ffff"/><rect x="11" y="17" width="23" height="1" fill="#00ffff"/><rect x="13" y="18" width="19" height="1" fill="#00ffff"/><rect x="15" y="19" width="15" height="1" fill="#00ffff"/>
<rect x="2" y="7" width="5" height="9" fill="#000"/><rect x="1" y="10" width="1" height="3" fill="#000"/>
<rect x="3" y="8" width="3" height="1" fill="#00ffff"/><rect x="3" y="10" width="3" height="3" fill="#00ffff"/><rect x="3" y="14" width="3" height="1" fill="#00ffff"/>
<rect x="7" y="9" width="2" height="5" fill="#000"/><rect x="7" y="10" width="1" height="3" fill="#00ffff"/>
</g>
<text x="353.3" y="586" font-size="13" fill="#fff" font-weight="normal" text-anchor="start" font-style="normal">211</text>
<g transform="translate(403,549)" shape-rendering="crispEdges">
<polygon points="8,2 36,2 36,16 35,17 34,18 32,19 30,20 29,21 15,21 14,20 12,19 10,18 9,17 8,16" fill="#000"/>
<polygon points="14,3 29,3 30,4 30,5 29,6 14,6 13,5 13,4" fill="#00ffff"/>
<rect x="9" y="3" width="1" height="3" fill="#00ffff"/><rect x="10" y="3" width="1" height="1" fill="#00ffff"/>
<rect x="34" y="3" width="1" height="3" fill="#00ffff"/><rect x="33" y="3" width="1" height="1" fill="#00ffff"/>
<rect x="9" y="7" width="26" height="1" fill="#00ffff"/><rect x="9" y="9" width="26" height="1" fill="#00ffff"/>
<polygon points="14,11 30,11 30,13 29,15 15,15 14,13" fill="#00ffff"/>
<rect x="9" y="11" width="1" height="4" fill="#00ffff"/><rect x="10" y="13" width="1" height="2" fill="#00ffff"/><rect x="11" y="14" width="1" height="1" fill="#00ffff"/>
<rect x="34" y="11" width="1" height="4" fill="#00ffff"/><rect x="33" y="13" width="1" height="2" fill="#00ffff"/><rect x="32" y="14" width="1" height="1" fill="#00ffff"/>
<rect x="12" y="11" width="1" height="1" fill="#00ffff"/><rect x="31" y="11" width="1" height="1" fill="#00ffff"/>
<rect x="10" y="16" width="25" height="1" fill="#00ffff"/><rect x="11" y="17" width="23" height="1" fill="#00ffff"/><rect x="13" y="18" width="19" height="1" fill="#00ffff"/><rect x="15" y="19" width="15" height="1" fill="#00ffff"/>
<rect x="2" y="7" width="5" height="9" fill="#000"/><rect x="1" y="10" width="1" height="3" fill="#000"/>
<rect x="3" y="8" width="3" height="1" fill="#00ffff"/><rect x="3" y="10" width="3" height="3" fill="#00ffff"/><rect x="3" y="14" width="3" height="1" fill="#00ffff"/>
<rect x="7" y="9" width="2" height="5" fill="#000"/><rect x="7" y="10" width="1" height="3" fill="#00ffff"/>
</g>
<text x="409.6" y="586" font-size="13" fill="#fff" font-weight="normal" text-anchor="start" font-style="normal">219</text>
<g transform="translate(447,549)" shape-rendering="crispEdges">
<polygon points="8,2 36,2 36,16 35,17 34,18 32,19 30,20 29,21 15,21 14,20 12,19 10,18 9,17 8,16" fill="#000"/>
<polygon points="14,3 29,3 30,4 30,5 29,6 14,6 13,5 13,4" fill="#00ffff"/>
<rect x="9" y="3" width="1" height="3" fill="#00ffff"/><rect x="10" y="3" width="1" height="1" fill="#00ffff"/>
<rect x="34" y="3" width="1" height="3" fill="#00ffff"/><rect x="33" y="3" width="1" height="1" fill="#00ffff"/>
<rect x="9" y="7" width="26" height="1" fill="#00ffff"/><rect x="9" y="9" width="26" height="1" fill="#00ffff"/>
<polygon points="14,11 30,11 30,13 29,15 15,15 14,13" fill="#00ffff"/>
<rect x="9" y="11" width="1" height="4" fill="#00ffff"/><rect x="10" y="13" width="1" height="2" fill="#00ffff"/><rect x="11" y="14" width="1" height="1" fill="#00ffff"/>
<rect x="34" y="11" width="1" height="4" fill="#00ffff"/><rect x="33" y="13" width="1" height="2" fill="#00ffff"/><rect x="32" y="14" width="1" height="1" fill="#00ffff"/>
<rect x="12" y="11" width="1" height="1" fill="#00ffff"/><rect x="31" y="11" width="1" height="1" fill="#00ffff"/>
<rect x="10" y="16" width="25" height="1" fill="#00ffff"/><rect x="11" y="17" width="23" height="1" fill="#00ffff"/><rect x="13" y="18" width="19" height="1" fill="#00ffff"/><rect x="15" y="19" width="15" height="1" fill="#00ffff"/>
<rect x="2" y="7" width="5" height="9" fill="#000"/><rect x="1" y="10" width="1" height="3" fill="#000"/>
<rect x="3" y="8" width="3" height="1" fill="#00ffff"/><rect x="3" y="10" width="3" height="3" fill="#00ffff"/><rect x="3" y="14" width="3" height="1" fill="#00ffff"/>
<rect x="7" y="9" width="2" height="5" fill="#000"/><rect x="7" y="10" width="1" height="3" fill="#00ffff"/>
</g>
<text x="453.5" y="586" font-size="13" fill="#fff" font-weight="normal" text-anchor="start" font-style="normal">221</text>
<g transform="translate(491,549)" shape-rendering="crispEdges">
<polygon points="8,2 36,2 36,16 35,17 34,18 32,19 30,20 29,21 15,21 14,20 12,19 10,18 9,17 8,16" fill="#000"/>
<polygon points="14,3 29,3 30,4 30,5 29,6 14,6 13,5 13,4" fill="#00ffff"/>
<rect x="9" y="3" width="1" height="3" fill="#00ffff"/><rect x="10" y="3" width="1" height="1" fill="#00ffff"/>
<rect x="34" y="3" width="1" height="3" fill="#00ffff"/><rect x="33" y="3" width="1" height="1" fill="#00ffff"/>
<rect x="9" y="7" width="26" height="1" fill="#00ffff"/><rect x="9" y="9" width="26" height="1" fill="#00ffff"/>
<polygon points="14,11 30,11 30,13 29,15 15,15 14,13" fill="#00ffff"/>
<rect x="9" y="11" width="1" height="4" fill="#00ffff"/><rect x="10" y="13" width="1" height="2" fill="#00ffff"/><rect x="11" y="14" width="1" height="1" fill="#00ffff"/>
<rect x="34" y="11" width="1" height="4" fill="#00ffff"/><rect x="33" y="13" width="1" height="2" fill="#00ffff"/><rect x="32" y="14" width="1" height="1" fill="#00ffff"/>
<rect x="12" y="11" width="1" height="1" fill="#00ffff"/><rect x="31" y="11" width="1" height="1" fill="#00ffff"/>
<rect x="10" y="16" width="25" height="1" fill="#00ffff"/><rect x="11" y="17" width="23" height="1" fill="#00ffff"/><rect x="13" y="18" width="19" height="1" fill="#00ffff"/><rect x="15" y="19" width="15" height="1" fill="#00ffff"/>
<rect x="2" y="7" width="5" height="9" fill="#000"/><rect x="1" y="10" width="1" height="3" fill="#000"/>
<rect x="3" y="8" width="3" height="1" fill="#00ffff"/><rect x="3" y="10" width="3" height="3" fill="#00ffff"/><rect x="3" y="14" width="3" height="1" fill="#00ffff"/>
<rect x="7" y="9" width="2" height="5" fill="#000"/><rect x="7" y="10" width="1" height="3" fill="#00ffff"/>
</g>
<text x="497.5" y="586" font-size="13" fill="#fff" font-weight="normal" text-anchor="start" font-style="normal">223</text>
<g transform="translate(535,549)" shape-rendering="crispEdges">
<polygon points="8,2 36,2 36,16 35,17 34,18 32,19 30,20 29,21 15,21 14,20 12,19 10,18 9,17 8,16" fill="#000"/>
<polygon points="14,3 29,3 30,4 30,5 29,6 14,6 13,5 13,4" fill="#00ffff"/>
<rect x="9" y="3" width="1" height="3" fill="#00ffff"/><rect x="10" y="3" width="1" height="1" fill="#00ffff"/>
<rect x="34" y="3" width="1" height="3" fill="#00ffff"/><rect x="33" y="3" width="1" height="1" fill="#00ffff"/>
<rect x="9" y="7" width="26" height="1" fill="#00ffff"/><rect x="9" y="9" width="26" height="1" fill="#00ffff"/>
<polygon points="14,11 30,11 30,13 29,15 15,15 14,13" fill="#00ffff"/>
<rect x="9" y="11" width="1" height="4" fill="#00ffff"/><rect x="10" y="13" width="1" height="2" fill="#00ffff"/><rect x="11" y="14" width="1" height="1" fill="#00ffff"/>
<rect x="34" y="11" width="1" height="4" fill="#00ffff"/><rect x="33" y="13" width="1" height="2" fill="#00ffff"/><rect x="32" y="14" width="1" height="1" fill="#00ffff"/>
<rect x="12" y="11" width="1" height="1" fill="#00ffff"/><rect x="31" y="11" width="1" height="1" fill="#00ffff"/>
<rect x="10" y="16" width="25" height="1" fill="#00ffff"/><rect x="11" y="17" width="23" height="1" fill="#00ffff"/><rect x="13" y="18" width="19" height="1" fill="#00ffff"/><rect x="15" y="19" width="15" height="1" fill="#00ffff"/>
<rect x="2" y="7" width="5" height="9" fill="#000"/><rect x="1" y="10" width="1" height="3" fill="#000"/>
<rect x="3" y="8" width="3" height="1" fill="#00ffff"/><rect x="3" y="10" width="3" height="3" fill="#00ffff"/><rect x="3" y="14" width="3" height="1" fill="#00ffff"/>
<rect x="7" y="9" width="2" height="5" fill="#000"/><rect x="7" y="10" width="1" height="3" fill="#00ffff"/>
</g>
<text x="541.4" y="586" font-size="13" fill="#fff" font-weight="normal" text-anchor="start" font-style="normal">225</text>
<g transform="translate(591,549)" shape-rendering="crispEdges">
<polygon points="8,2 36,2 36,16 35,17 34,18 32,19 30,20 29,21 15,21 14,20 12,19 10,18 9,17 8,16" fill="#000"/>
<polygon points="14,3 29,3 30,4 30,5 29,6 14,6 13,5 13,4" fill="#00ffff"/>
<rect x="9" y="3" width="1" height="3" fill="#00ffff"/><rect x="10" y="3" width="1" height="1" fill="#00ffff"/>
<rect x="34" y="3" width="1" height="3" fill="#00ffff"/><rect x="33" y="3" width="1" height="1" fill="#00ffff"/>
<rect x="9" y="7" width="26" height="1" fill="#00ffff"/><rect x="9" y="9" width="26" height="1" fill="#00ffff"/>
<polygon points="14,11 30,11 30,13 29,15 15,15 14,13" fill="#00ffff"/>
<rect x="9" y="11" width="1" height="4" fill="#00ffff"/><rect x="10" y="13" width="1" height="2" fill="#00ffff"/><rect x="11" y="14" width="1" height="1" fill="#00ffff"/>
<rect x="34" y="11" width="1" height="4" fill="#00ffff"/><rect x="33" y="13" width="1" height="2" fill="#00ffff"/><rect x="32" y="14" width="1" height="1" fill="#00ffff"/>
<rect x="12" y="11" width="1" height="1" fill="#00ffff"/><rect x="31" y="11" width="1" height="1" fill="#00ffff"/>
<rect x="10" y="16" width="25" height="1" fill="#00ffff"/><rect x="11" y="17" width="23" height="1" fill="#00ffff"/><rect x="13" y="18" width="19" height="1" fill="#00ffff"/><rect x="15" y="19" width="15" height="1" fill="#00ffff"/>
<rect x="2" y="7" width="5" height="9" fill="#000"/><rect x="1" y="10" width="1" height="3" fill="#000"/>
<rect x="3" y="8" width="3" height="1" fill="#00ffff"/><rect x="3" y="10" width="3" height="3" fill="#00ffff"/><rect x="3" y="14" width="3" height="1" fill="#00ffff"/>
<rect x="7" y="9" width="2" height="5" fill="#000"/><rect x="7" y="10" width="1" height="3" fill="#00ffff"/>
</g>
<text x="597.6" y="586" font-size="13" fill="#fff" font-weight="normal" text-anchor="start" font-style="normal">227</text>
<g transform="translate(637,549)" shape-rendering="crispEdges">
<polygon points="8,2 36,2 36,16 35,17 34,18 32,19 30,20 29,21 15,21 14,20 12,19 10,18 9,17 8,16" fill="#000"/>
<polygon points="14,3 29,3 30,4 30,5 29,6 14,6 13,5 13,4" fill="#00ffff"/>
<rect x="9" y="3" width="1" height="3" fill="#00ffff"/><rect x="10" y="3" width="1" height="1" fill="#00ffff"/>
<rect x="34" y="3" width="1" height="3" fill="#00ffff"/><rect x="33" y="3" width="1" height="1" fill="#00ffff"/>
<rect x="9" y="7" width="26" height="1" fill="#00ffff"/><rect x="9" y="9" width="26" height="1" fill="#00ffff"/>
<polygon points="14,11 30,11 30,13 29,15 15,15 14,13" fill="#00ffff"/>
<rect x="9" y="11" width="1" height="4" fill="#00ffff"/><rect x="10" y="13" width="1" height="2" fill="#00ffff"/><rect x="11" y="14" width="1" height="1" fill="#00ffff"/>
<rect x="34" y="11" width="1" height="4" fill="#00ffff"/><rect x="33" y="13" width="1" height="2" fill="#00ffff"/><rect x="32" y="14" width="1" height="1" fill="#00ffff"/>
<rect x="12" y="11" width="1" height="1" fill="#00ffff"/><rect x="31" y="11" width="1" height="1" fill="#00ffff"/>
<rect x="10" y="16" width="25" height="1" fill="#00ffff"/><rect x="11" y="17" width="23" height="1" fill="#00ffff"/><rect x="13" y="18" width="19" height="1" fill="#00ffff"/><rect x="15" y="19" width="15" height="1" fill="#00ffff"/>
<rect x="2" y="7" width="5" height="9" fill="#000"/><rect x="1" y="10" width="1" height="3" fill="#000"/>
<rect x="3" y="8" width="3" height="1" fill="#00ffff"/><rect x="3" y="10" width="3" height="3" fill="#00ffff"/><rect x="3" y="14" width="3" height="1" fill="#00ffff"/>
<rect x="7" y="9" width="2" height="5" fill="#000"/><rect x="7" y="10" width="1" height="3" fill="#00ffff"/>
</g>
<text x="646.4" y="586" font-size="13" fill="#fff" font-weight="normal" text-anchor="start" font-style="normal">229</text>
<g transform="translate(679,549)" shape-rendering="crispEdges">
<polygon points="8,2 36,2 36,16 35,17 34,18 32,19 30,20 29,21 15,21 14,20 12,19 10,18 9,17 8,16" fill="#000"/>
<polygon points="14,3 29,3 30,4 30,5 29,6 14,6 13,5 13,4" fill="#00ffff"/>
<rect x="9" y="3" width="1" height="3" fill="#00ffff"/><rect x="10" y="3" width="1" height="1" fill="#00ffff"/>
<rect x="34" y="3" width="1" height="3" fill="#00ffff"/><rect x="33" y="3" width="1" height="1" fill="#00ffff"/>
<rect x="9" y="7" width="26" height="1" fill="#00ffff"/><rect x="9" y="9" width="26" height="1" fill="#00ffff"/>
<polygon points="14,11 30,11 30,13 29,15 15,15 14,13" fill="#00ffff"/>
<rect x="9" y="11" width="1" height="4" fill="#00ffff"/><rect x="10" y="13" width="1" height="2" fill="#00ffff"/><rect x="11" y="14" width="1" height="1" fill="#00ffff"/>
<rect x="34" y="11" width="1" height="4" fill="#00ffff"/><rect x="33" y="13" width="1" height="2" fill="#00ffff"/><rect x="32" y="14" width="1" height="1" fill="#00ffff"/>
<rect x="12" y="11" width="1" height="1" fill="#00ffff"/><rect x="31" y="11" width="1" height="1" fill="#00ffff"/>
<rect x="10" y="16" width="25" height="1" fill="#00ffff"/><rect x="11" y="17" width="23" height="1" fill="#00ffff"/><rect x="13" y="18" width="19" height="1" fill="#00ffff"/><rect x="15" y="19" width="15" height="1" fill="#00ffff"/>
<rect x="2" y="7" width="5" height="9" fill="#000"/><rect x="1" y="10" width="1" height="3" fill="#000"/>
<rect x="3" y="8" width="3" height="1" fill="#00ffff"/><rect x="3" y="10" width="3" height="3" fill="#00ffff"/><rect x="3" y="14" width="3" height="1" fill="#00ffff"/>
<rect x="7" y="9" width="2" height="5" fill="#000"/><rect x="7" y="10" width="1" height="3" fill="#00ffff"/>
</g>
<text x="691.4" y="586" font-size="13" fill="#fff" font-weight="normal" text-anchor="start" font-style="normal">231</text>
<g transform="translate(723,549)" shape-rendering="crispEdges">
<polygon points="8,2 36,2 36,16 35,17 34,18 32,19 30,20 29,21 15,21 14,20 12,19 10,18 9,17 8,16" fill="#000"/>
<polygon points="14,3 29,3 30,4 30,5 29,6 14,6 13,5 13,4" fill="#00ffff"/>
<rect x="9" y="3" width="1" height="3" fill="#00ffff"/><rect x="10" y="3" width="1" height="1" fill="#00ffff"/>
<rect x="34" y="3" width="1" height="3" fill="#00ffff"/><rect x="33" y="3" width="1" height="1" fill="#00ffff"/>
<rect x="9" y="7" width="26" height="1" fill="#00ffff"/><rect x="9" y="9" width="26" height="1" fill="#00ffff"/>
<polygon points="14,11 30,11 30,13 29,15 15,15 14,13" fill="#00ffff"/>
<rect x="9" y="11" width="1" height="4" fill="#00ffff"/><rect x="10" y="13" width="1" height="2" fill="#00ffff"/><rect x="11" y="14" width="1" height="1" fill="#00ffff"/>
<rect x="34" y="11" width="1" height="4" fill="#00ffff"/><rect x="33" y="13" width="1" height="2" fill="#00ffff"/><rect x="32" y="14" width="1" height="1" fill="#00ffff"/>
<rect x="12" y="11" width="1" height="1" fill="#00ffff"/><rect x="31" y="11" width="1" height="1" fill="#00ffff"/>
<rect x="10" y="16" width="25" height="1" fill="#00ffff"/><rect x="11" y="17" width="23" height="1" fill="#00ffff"/><rect x="13" y="18" width="19" height="1" fill="#00ffff"/><rect x="15" y="19" width="15" height="1" fill="#00ffff"/>
<rect x="2" y="7" width="5" height="9" fill="#000"/><rect x="1" y="10" width="1" height="3" fill="#000"/>
<rect x="3" y="8" width="3" height="1" fill="#00ffff"/><rect x="3" y="10" width="3" height="3" fill="#00ffff"/><rect x="3" y="14" width="3" height="1" fill="#00ffff"/>
<rect x="7" y="9" width="2" height="5" fill="#000"/><rect x="7" y="10" width="1" height="3" fill="#00ffff"/>
</g>
<text x="733.8" y="586" font-size="13" fill="#fff" font-weight="normal" text-anchor="start" font-style="normal">233</text>
<g transform="translate(225,596)" shape-rendering="crispEdges" fill="#00ffff"><rect x="0" y="0" width="1" height="1"/><rect x="0" y="1" width="1" height="1"/><rect x="0" y="2" width="1" height="1"/><rect x="0" y="3" width="1" height="1"/><rect x="0" y="4" width="1" height="1"/><rect x="0" y="5" width="1" height="1"/><rect x="0" y="6" width="1" height="1"/><rect x="0" y="7" width="1" height="1"/><rect x="0" y="8" width="1" height="1"/><rect x="0" y="9" width="1" height="1"/><rect x="1" y="0" width="1" height="1"/><rect x="1" y="1" width="1" height="1"/><rect x="1" y="2" width="1" height="1"/><rect x="1" y="3" width="1" height="1"/><rect x="1" y="6" width="1" height="1"/><rect x="2" y="3" width="1" height="1"/><rect x="2" y="4" width="1" height="1"/><rect x="2" y="5" width="1" height="1"/><rect x="2" y="6" width="1" height="1"/><rect x="3" y="3" width="1" height="1"/><rect x="3" y="6" width="1" height="1"/><rect x="4" y="3" width="1" height="1"/><rect x="4" y="6" width="1" height="1"/><rect x="4" y="7" width="1" height="1"/><rect x="5" y="3" width="1" height="1"/><rect x="5" y="8" width="1" height="1"/><rect x="6" y="3" width="1" height="1"/><rect x="6" y="9" width="1" height="1"/><rect x="7" y="3" width="1" height="1"/><rect x="7" y="6" width="1" height="1"/><rect x="7" y="9" width="1" height="1"/><rect x="8" y="3" width="1" height="1"/><rect x="8" y="6" width="1" height="1"/><rect x="8" y="8" width="1" height="1"/><rect x="9" y="3" width="1" height="1"/><rect x="9" y="6" width="1" height="1"/><rect x="9" y="7" width="1" height="1"/><rect x="10" y="1" width="1" height="1"/><rect x="10" y="2" width="1" height="1"/><rect x="10" y="3" width="1" height="1"/><rect x="10" y="6" width="1" height="1"/><rect x="11" y="0" width="1" height="1"/><rect x="11" y="6" width="1" height="1"/><rect x="12" y="0" width="1" height="1"/><rect x="12" y="6" width="1" height="1"/><rect x="13" y="1" width="1" height="1"/><rect x="13" y="2" width="1" height="1"/><rect x="13" y="3" width="1" height="1"/><rect x="13" y="6" width="1" height="1"/><rect x="14" y="3" width="1" height="1"/><rect x="14" y="4" width="1" height="1"/><rect x="14" y="5" width="1" height="1"/><rect x="14" y="6" width="1" height="1"/><rect x="15" y="3" width="1" height="1"/><rect x="15" y="6" width="1" height="1"/><rect x="15" y="7" width="1" height="1"/><rect x="16" y="3" width="1" height="1"/><rect x="16" y="8" width="1" height="1"/><rect x="17" y="3" width="1" height="1"/><rect x="17" y="9" width="1" height="1"/><rect x="18" y="3" width="1" height="1"/><rect x="18" y="6" width="1" height="1"/><rect x="18" y="9" width="1" height="1"/><rect x="19" y="3" width="1" height="1"/><rect x="19" y="6" width="1" height="1"/><rect x="19" y="8" width="1" height="1"/><rect x="20" y="3" width="1" height="1"/><rect x="20" y="6" width="1" height="1"/><rect x="20" y="7" width="1" height="1"/><rect x="21" y="1" width="1" height="1"/><rect x="21" y="2" width="1" height="1"/><rect x="21" y="3" width="1" height="1"/><rect x="21" y="6" width="1" height="1"/><rect x="22" y="0" width="1" height="1"/><rect x="22" y="6" width="1" height="1"/><rect x="23" y="0" width="1" height="1"/><rect x="23" y="6" width="1" height="1"/><rect x="24" y="1" width="1" height="1"/><rect x="24" y="2" width="1" height="1"/><rect x="24" y="3" width="1" height="1"/><rect x="24" y="6" width="1" height="1"/><rect x="25" y="3" width="1" height="1"/><rect x="25" y="4" width="1" height="1"/><rect x="25" y="5" width="1" height="1"/><rect x="25" y="6" width="1" height="1"/><rect x="26" y="3" width="1" height="1"/><rect x="26" y="6" width="1" height="1"/><rect x="26" y="7" width="1" height="1"/><rect x="27" y="3" width="1" height="1"/><rect x="27" y="8" width="1" height="1"/><rect x="28" y="3" width="1" height="1"/><rect x="28" y="9" width="1" height="1"/><rect x="29" y="3" width="1" height="1"/><rect x="29" y="6" width="1" height="1"/><rect x="29" y="9" width="1" height="1"/><rect x="30" y="3" width="1" height="1"/><rect x="30" y="6" width="1" height="1"/><rect x="30" y="8" width="1" height="1"/><rect x="31" y="3" width="1" height="1"/><rect x="31" y="6" width="1" height="1"/><rect x="31" y="7" width="1" height="1"/><rect x="32" y="1" width="1" height="1"/><rect x="32" y="2" width="1" height="1"/><rect x="32" y="3" width="1" height="1"/><rect x="32" y="6" width="1" height="1"/><rect x="33" y="0" width="1" height="1"/><rect x="33" y="6" width="1" height="1"/><rect x="34" y="0" width="1" height="1"/><rect x="34" y="6" width="1" height="1"/><rect x="35" y="1" width="1" height="1"/><rect x="35" y="2" width="1" height="1"/><rect x="35" y="3" width="1" height="1"/><rect x="35" y="6" width="1" height="1"/><rect x="36" y="3" width="1" height="1"/><rect x="36" y="4" width="1" height="1"/><rect x="36" y="5" width="1" height="1"/><rect x="36" y="6" width="1" height="1"/><rect x="37" y="3" width="1" height="1"/><rect x="37" y="6" width="1" height="1"/><rect x="38" y="0" width="1" height="1"/><rect x="38" y="1" width="1" height="1"/><rect x="38" y="2" width="1" height="1"/><rect x="38" y="3" width="1" height="1"/><rect x="38" y="4" width="1" height="1"/><rect x="38" y="5" width="1" height="1"/><rect x="38" y="6" width="1" height="1"/><rect x="38" y="7" width="1" height="1"/><rect x="38" y="8" width="1" height="1"/><rect x="38" y="9" width="1" height="1"/></g>
<text x="223.8" y="624" font-size="13" fill="#fff" font-weight="normal" text-anchor="start" font-style="normal">216</text>
<g transform="translate(269,596)" shape-rendering="crispEdges" fill="#00ffff"><rect x="0" y="0" width="1" height="1"/><rect x="0" y="1" width="1" height="1"/><rect x="0" y="2" width="1" height="1"/><rect x="0" y="3" width="1" height="1"/><rect x="0" y="4" width="1" height="1"/><rect x="0" y="5" width="1" height="1"/><rect x="0" y="6" width="1" height="1"/><rect x="0" y="7" width="1" height="1"/><rect x="0" y="8" width="1" height="1"/><rect x="0" y="9" width="1" height="1"/><rect x="1" y="0" width="1" height="1"/><rect x="1" y="1" width="1" height="1"/><rect x="1" y="2" width="1" height="1"/><rect x="1" y="3" width="1" height="1"/><rect x="1" y="6" width="1" height="1"/><rect x="2" y="3" width="1" height="1"/><rect x="2" y="4" width="1" height="1"/><rect x="2" y="5" width="1" height="1"/><rect x="2" y="6" width="1" height="1"/><rect x="3" y="3" width="1" height="1"/><rect x="3" y="6" width="1" height="1"/><rect x="4" y="3" width="1" height="1"/><rect x="4" y="6" width="1" height="1"/><rect x="4" y="7" width="1" height="1"/><rect x="5" y="3" width="1" height="1"/><rect x="5" y="8" width="1" height="1"/><rect x="6" y="3" width="1" height="1"/><rect x="6" y="9" width="1" height="1"/><rect x="7" y="3" width="1" height="1"/><rect x="7" y="6" width="1" height="1"/><rect x="7" y="9" width="1" height="1"/><rect x="8" y="3" width="1" height="1"/><rect x="8" y="6" width="1" height="1"/><rect x="8" y="8" width="1" height="1"/><rect x="9" y="3" width="1" height="1"/><rect x="9" y="6" width="1" height="1"/><rect x="9" y="7" width="1" height="1"/><rect x="10" y="1" width="1" height="1"/><rect x="10" y="2" width="1" height="1"/><rect x="10" y="3" width="1" height="1"/><rect x="10" y="6" width="1" height="1"/><rect x="11" y="0" width="1" height="1"/><rect x="11" y="6" width="1" height="1"/><rect x="12" y="0" width="1" height="1"/><rect x="12" y="6" width="1" height="1"/><rect x="13" y="1" width="1" height="1"/><rect x="13" y="2" width="1" height="1"/><rect x="13" y="3" width="1" height="1"/><rect x="13" y="6" width="1" height="1"/><rect x="14" y="3" width="1" height="1"/><rect x="14" y="4" width="1" height="1"/><rect x="14" y="5" width="1" height="1"/><rect x="14" y="6" width="1" height="1"/><rect x="15" y="3" width="1" height="1"/><rect x="15" y="6" width="1" height="1"/><rect x="15" y="7" width="1" height="1"/><rect x="16" y="3" width="1" height="1"/><rect x="16" y="8" width="1" height="1"/><rect x="17" y="3" width="1" height="1"/><rect x="17" y="9" width="1" height="1"/><rect x="18" y="3" width="1" height="1"/><rect x="18" y="6" width="1" height="1"/><rect x="18" y="9" width="1" height="1"/><rect x="19" y="3" width="1" height="1"/><rect x="19" y="6" width="1" height="1"/><rect x="19" y="8" width="1" height="1"/><rect x="20" y="3" width="1" height="1"/><rect x="20" y="6" width="1" height="1"/><rect x="20" y="7" width="1" height="1"/><rect x="21" y="1" width="1" height="1"/><rect x="21" y="2" width="1" height="1"/><rect x="21" y="3" width="1" height="1"/><rect x="21" y="6" width="1" height="1"/><rect x="22" y="0" width="1" height="1"/><rect x="22" y="6" width="1" height="1"/><rect x="23" y="0" width="1" height="1"/><rect x="23" y="6" width="1" height="1"/><rect x="24" y="1" width="1" height="1"/><rect x="24" y="2" width="1" height="1"/><rect x="24" y="3" width="1" height="1"/><rect x="24" y="6" width="1" height="1"/><rect x="25" y="3" width="1" height="1"/><rect x="25" y="4" width="1" height="1"/><rect x="25" y="5" width="1" height="1"/><rect x="25" y="6" width="1" height="1"/><rect x="26" y="3" width="1" height="1"/><rect x="26" y="6" width="1" height="1"/><rect x="26" y="7" width="1" height="1"/><rect x="27" y="3" width="1" height="1"/><rect x="27" y="8" width="1" height="1"/><rect x="28" y="3" width="1" height="1"/><rect x="28" y="9" width="1" height="1"/><rect x="29" y="3" width="1" height="1"/><rect x="29" y="6" width="1" height="1"/><rect x="29" y="9" width="1" height="1"/><rect x="30" y="3" width="1" height="1"/><rect x="30" y="6" width="1" height="1"/><rect x="30" y="8" width="1" height="1"/><rect x="31" y="3" width="1" height="1"/><rect x="31" y="6" width="1" height="1"/><rect x="31" y="7" width="1" height="1"/><rect x="32" y="1" width="1" height="1"/><rect x="32" y="2" width="1" height="1"/><rect x="32" y="3" width="1" height="1"/><rect x="32" y="6" width="1" height="1"/><rect x="33" y="0" width="1" height="1"/><rect x="33" y="6" width="1" height="1"/><rect x="34" y="0" width="1" height="1"/><rect x="34" y="6" width="1" height="1"/><rect x="35" y="1" width="1" height="1"/><rect x="35" y="2" width="1" height="1"/><rect x="35" y="3" width="1" height="1"/><rect x="35" y="6" width="1" height="1"/><rect x="36" y="3" width="1" height="1"/><rect x="36" y="4" width="1" height="1"/><rect x="36" y="5" width="1" height="1"/><rect x="36" y="6" width="1" height="1"/><rect x="37" y="3" width="1" height="1"/><rect x="37" y="6" width="1" height="1"/><rect x="38" y="0" width="1" height="1"/><rect x="38" y="1" width="1" height="1"/><rect x="38" y="2" width="1" height="1"/><rect x="38" y="3" width="1" height="1"/><rect x="38" y="4" width="1" height="1"/><rect x="38" y="5" width="1" height="1"/><rect x="38" y="6" width="1" height="1"/><rect x="38" y="7" width="1" height="1"/><rect x="38" y="8" width="1" height="1"/><rect x="38" y="9" width="1" height="1"/></g>
<text x="267.8" y="624" font-size="13" fill="#fff" font-weight="normal" text-anchor="start" font-style="normal">214</text>
<g transform="translate(313,596)" shape-rendering="crispEdges" fill="#00ffff"><rect x="0" y="0" width="1" height="1"/><rect x="0" y="1" width="1" height="1"/><rect x="0" y="2" width="1" height="1"/><rect x="0" y="3" width="1" height="1"/><rect x="0" y="4" width="1" height="1"/><rect x="0" y="5" width="1" height="1"/><rect x="0" y="6" width="1" height="1"/><rect x="0" y="7" width="1" height="1"/><rect x="0" y="8" width="1" height="1"/><rect x="0" y="9" width="1" height="1"/><rect x="1" y="0" width="1" height="1"/><rect x="1" y="1" width="1" height="1"/><rect x="1" y="2" width="1" height="1"/><rect x="1" y="3" width="1" height="1"/><rect x="1" y="6" width="1" height="1"/><rect x="2" y="3" width="1" height="1"/><rect x="2" y="4" width="1" height="1"/><rect x="2" y="5" width="1" height="1"/><rect x="2" y="6" width="1" height="1"/><rect x="3" y="3" width="1" height="1"/><rect x="3" y="6" width="1" height="1"/><rect x="4" y="3" width="1" height="1"/><rect x="4" y="6" width="1" height="1"/><rect x="4" y="7" width="1" height="1"/><rect x="5" y="3" width="1" height="1"/><rect x="5" y="8" width="1" height="1"/><rect x="6" y="3" width="1" height="1"/><rect x="6" y="9" width="1" height="1"/><rect x="7" y="3" width="1" height="1"/><rect x="7" y="6" width="1" height="1"/><rect x="7" y="9" width="1" height="1"/><rect x="8" y="3" width="1" height="1"/><rect x="8" y="6" width="1" height="1"/><rect x="8" y="8" width="1" height="1"/><rect x="9" y="3" width="1" height="1"/><rect x="9" y="6" width="1" height="1"/><rect x="9" y="7" width="1" height="1"/><rect x="10" y="1" width="1" height="1"/><rect x="10" y="2" width="1" height="1"/><rect x="10" y="3" width="1" height="1"/><rect x="10" y="6" width="1" height="1"/><rect x="11" y="0" width="1" height="1"/><rect x="11" y="6" width="1" height="1"/><rect x="12" y="0" width="1" height="1"/><rect x="12" y="6" width="1" height="1"/><rect x="13" y="1" width="1" height="1"/><rect x="13" y="2" width="1" height="1"/><rect x="13" y="3" width="1" height="1"/><rect x="13" y="6" width="1" height="1"/><rect x="14" y="3" width="1" height="1"/><rect x="14" y="4" width="1" height="1"/><rect x="14" y="5" width="1" height="1"/><rect x="14" y="6" width="1" height="1"/><rect x="15" y="3" width="1" height="1"/><rect x="15" y="6" width="1" height="1"/><rect x="15" y="7" width="1" height="1"/><rect x="16" y="3" width="1" height="1"/><rect x="16" y="8" width="1" height="1"/><rect x="17" y="3" width="1" height="1"/><rect x="17" y="9" width="1" height="1"/><rect x="18" y="3" width="1" height="1"/><rect x="18" y="6" width="1" height="1"/><rect x="18" y="9" width="1" height="1"/><rect x="19" y="3" width="1" height="1"/><rect x="19" y="6" width="1" height="1"/><rect x="19" y="8" width="1" height="1"/><rect x="20" y="3" width="1" height="1"/><rect x="20" y="6" width="1" height="1"/><rect x="20" y="7" width="1" height="1"/><rect x="21" y="1" width="1" height="1"/><rect x="21" y="2" width="1" height="1"/><rect x="21" y="3" width="1" height="1"/><rect x="21" y="6" width="1" height="1"/><rect x="22" y="0" width="1" height="1"/><rect x="22" y="6" width="1" height="1"/><rect x="23" y="0" width="1" height="1"/><rect x="23" y="6" width="1" height="1"/><rect x="24" y="1" width="1" height="1"/><rect x="24" y="2" width="1" height="1"/><rect x="24" y="3" width="1" height="1"/><rect x="24" y="6" width="1" height="1"/><rect x="25" y="3" width="1" height="1"/><rect x="25" y="4" width="1" height="1"/><rect x="25" y="5" width="1" height="1"/><rect x="25" y="6" width="1" height="1"/><rect x="26" y="3" width="1" height="1"/><rect x="26" y="6" width="1" height="1"/><rect x="26" y="7" width="1" height="1"/><rect x="27" y="3" width="1" height="1"/><rect x="27" y="8" width="1" height="1"/><rect x="28" y="3" width="1" height="1"/><rect x="28" y="9" width="1" height="1"/><rect x="29" y="3" width="1" height="1"/><rect x="29" y="6" width="1" height="1"/><rect x="29" y="9" width="1" height="1"/><rect x="30" y="3" width="1" height="1"/><rect x="30" y="6" width="1" height="1"/><rect x="30" y="8" width="1" height="1"/><rect x="31" y="3" width="1" height="1"/><rect x="31" y="6" width="1" height="1"/><rect x="31" y="7" width="1" height="1"/><rect x="32" y="1" width="1" height="1"/><rect x="32" y="2" width="1" height="1"/><rect x="32" y="3" width="1" height="1"/><rect x="32" y="6" width="1" height="1"/><rect x="33" y="0" width="1" height="1"/><rect x="33" y="6" width="1" height="1"/><rect x="34" y="0" width="1" height="1"/><rect x="34" y="6" width="1" height="1"/><rect x="35" y="1" width="1" height="1"/><rect x="35" y="2" width="1" height="1"/><rect x="35" y="3" width="1" height="1"/><rect x="35" y="6" width="1" height="1"/><rect x="36" y="3" width="1" height="1"/><rect x="36" y="4" width="1" height="1"/><rect x="36" y="5" width="1" height="1"/><rect x="36" y="6" width="1" height="1"/><rect x="37" y="3" width="1" height="1"/><rect x="37" y="6" width="1" height="1"/><rect x="38" y="0" width="1" height="1"/><rect x="38" y="1" width="1" height="1"/><rect x="38" y="2" width="1" height="1"/><rect x="38" y="3" width="1" height="1"/><rect x="38" y="4" width="1" height="1"/><rect x="38" y="5" width="1" height="1"/><rect x="38" y="6" width="1" height="1"/><rect x="38" y="7" width="1" height="1"/><rect x="38" y="8" width="1" height="1"/><rect x="38" y="9" width="1" height="1"/></g>
<text x="311.8" y="624" font-size="13" fill="#fff" font-weight="normal" text-anchor="start" font-style="normal">212</text>
<g transform="translate(357,596)" shape-rendering="crispEdges" fill="#00ffff"><rect x="0" y="0" width="1" height="1"/><rect x="0" y="1" width="1" height="1"/><rect x="0" y="2" width="1" height="1"/><rect x="0" y="3" width="1" height="1"/><rect x="0" y="4" width="1" height="1"/><rect x="0" y="5" width="1" height="1"/><rect x="0" y="6" width="1" height="1"/><rect x="0" y="7" width="1" height="1"/><rect x="0" y="8" width="1" height="1"/><rect x="0" y="9" width="1" height="1"/><rect x="1" y="0" width="1" height="1"/><rect x="1" y="1" width="1" height="1"/><rect x="1" y="2" width="1" height="1"/><rect x="1" y="3" width="1" height="1"/><rect x="1" y="6" width="1" height="1"/><rect x="2" y="3" width="1" height="1"/><rect x="2" y="4" width="1" height="1"/><rect x="2" y="5" width="1" height="1"/><rect x="2" y="6" width="1" height="1"/><rect x="3" y="3" width="1" height="1"/><rect x="3" y="6" width="1" height="1"/><rect x="4" y="3" width="1" height="1"/><rect x="4" y="6" width="1" height="1"/><rect x="4" y="7" width="1" height="1"/><rect x="5" y="3" width="1" height="1"/><rect x="5" y="8" width="1" height="1"/><rect x="6" y="3" width="1" height="1"/><rect x="6" y="9" width="1" height="1"/><rect x="7" y="3" width="1" height="1"/><rect x="7" y="6" width="1" height="1"/><rect x="7" y="9" width="1" height="1"/><rect x="8" y="3" width="1" height="1"/><rect x="8" y="6" width="1" height="1"/><rect x="8" y="8" width="1" height="1"/><rect x="9" y="3" width="1" height="1"/><rect x="9" y="6" width="1" height="1"/><rect x="9" y="7" width="1" height="1"/><rect x="10" y="1" width="1" height="1"/><rect x="10" y="2" width="1" height="1"/><rect x="10" y="3" width="1" height="1"/><rect x="10" y="6" width="1" height="1"/><rect x="11" y="0" width="1" height="1"/><rect x="11" y="6" width="1" height="1"/><rect x="12" y="0" width="1" height="1"/><rect x="12" y="6" width="1" height="1"/><rect x="13" y="1" width="1" height="1"/><rect x="13" y="2" width="1" height="1"/><rect x="13" y="3" width="1" height="1"/><rect x="13" y="6" width="1" height="1"/><rect x="14" y="3" width="1" height="1"/><rect x="14" y="4" width="1" height="1"/><rect x="14" y="5" width="1" height="1"/><rect x="14" y="6" width="1" height="1"/><rect x="15" y="3" width="1" height="1"/><rect x="15" y="6" width="1" height="1"/><rect x="15" y="7" width="1" height="1"/><rect x="16" y="3" width="1" height="1"/><rect x="16" y="8" width="1" height="1"/><rect x="17" y="3" width="1" height="1"/><rect x="17" y="9" width="1" height="1"/><rect x="18" y="3" width="1" height="1"/><rect x="18" y="6" width="1" height="1"/><rect x="18" y="9" width="1" height="1"/><rect x="19" y="3" width="1" height="1"/><rect x="19" y="6" width="1" height="1"/><rect x="19" y="8" width="1" height="1"/><rect x="20" y="3" width="1" height="1"/><rect x="20" y="6" width="1" height="1"/><rect x="20" y="7" width="1" height="1"/><rect x="21" y="1" width="1" height="1"/><rect x="21" y="2" width="1" height="1"/><rect x="21" y="3" width="1" height="1"/><rect x="21" y="6" width="1" height="1"/><rect x="22" y="0" width="1" height="1"/><rect x="22" y="6" width="1" height="1"/><rect x="23" y="0" width="1" height="1"/><rect x="23" y="6" width="1" height="1"/><rect x="24" y="1" width="1" height="1"/><rect x="24" y="2" width="1" height="1"/><rect x="24" y="3" width="1" height="1"/><rect x="24" y="6" width="1" height="1"/><rect x="25" y="3" width="1" height="1"/><rect x="25" y="4" width="1" height="1"/><rect x="25" y="5" width="1" height="1"/><rect x="25" y="6" width="1" height="1"/><rect x="26" y="3" width="1" height="1"/><rect x="26" y="6" width="1" height="1"/><rect x="26" y="7" width="1" height="1"/><rect x="27" y="3" width="1" height="1"/><rect x="27" y="8" width="1" height="1"/><rect x="28" y="3" width="1" height="1"/><rect x="28" y="9" width="1" height="1"/><rect x="29" y="3" width="1" height="1"/><rect x="29" y="6" width="1" height="1"/><rect x="29" y="9" width="1" height="1"/><rect x="30" y="3" width="1" height="1"/><rect x="30" y="6" width="1" height="1"/><rect x="30" y="8" width="1" height="1"/><rect x="31" y="3" width="1" height="1"/><rect x="31" y="6" width="1" height="1"/><rect x="31" y="7" width="1" height="1"/><rect x="32" y="1" width="1" height="1"/><rect x="32" y="2" width="1" height="1"/><rect x="32" y="3" width="1" height="1"/><rect x="32" y="6" width="1" height="1"/><rect x="33" y="0" width="1" height="1"/><rect x="33" y="6" width="1" height="1"/><rect x="34" y="0" width="1" height="1"/><rect x="34" y="6" width="1" height="1"/><rect x="35" y="1" width="1" height="1"/><rect x="35" y="2" width="1" height="1"/><rect x="35" y="3" width="1" height="1"/><rect x="35" y="6" width="1" height="1"/><rect x="36" y="3" width="1" height="1"/><rect x="36" y="4" width="1" height="1"/><rect x="36" y="5" width="1" height="1"/><rect x="36" y="6" width="1" height="1"/><rect x="37" y="3" width="1" height="1"/><rect x="37" y="6" width="1" height="1"/><rect x="38" y="0" width="1" height="1"/><rect x="38" y="1" width="1" height="1"/><rect x="38" y="2" width="1" height="1"/><rect x="38" y="3" width="1" height="1"/><rect x="38" y="4" width="1" height="1"/><rect x="38" y="5" width="1" height="1"/><rect x="38" y="6" width="1" height="1"/><rect x="38" y="7" width="1" height="1"/><rect x="38" y="8" width="1" height="1"/><rect x="38" y="9" width="1" height="1"/></g>
<text x="355.8" y="624" font-size="13" fill="#fff" font-weight="normal" text-anchor="start" font-style="normal">210</text>
<g transform="translate(413,596)" shape-rendering="crispEdges" fill="#00ffff"><rect x="0" y="0" width="1" height="1"/><rect x="0" y="1" width="1" height="1"/><rect x="0" y="2" width="1" height="1"/><rect x="0" y="3" width="1" height="1"/><rect x="0" y="4" width="1" height="1"/><rect x="0" y="5" width="1" height="1"/><rect x="0" y="6" width="1" height="1"/><rect x="0" y="7" width="1" height="1"/><rect x="0" y="8" width="1" height="1"/><rect x="0" y="9" width="1" height="1"/><rect x="1" y="0" width="1" height="1"/><rect x="1" y="1" width="1" height="1"/><rect x="1" y="2" width="1" height="1"/><rect x="1" y="3" width="1" height="1"/><rect x="1" y="6" width="1" height="1"/><rect x="2" y="3" width="1" height="1"/><rect x="2" y="4" width="1" height="1"/><rect x="2" y="5" width="1" height="1"/><rect x="2" y="6" width="1" height="1"/><rect x="3" y="3" width="1" height="1"/><rect x="3" y="6" width="1" height="1"/><rect x="4" y="3" width="1" height="1"/><rect x="4" y="6" width="1" height="1"/><rect x="4" y="7" width="1" height="1"/><rect x="5" y="3" width="1" height="1"/><rect x="5" y="8" width="1" height="1"/><rect x="6" y="3" width="1" height="1"/><rect x="6" y="9" width="1" height="1"/><rect x="7" y="3" width="1" height="1"/><rect x="7" y="6" width="1" height="1"/><rect x="7" y="9" width="1" height="1"/><rect x="8" y="3" width="1" height="1"/><rect x="8" y="6" width="1" height="1"/><rect x="8" y="8" width="1" height="1"/><rect x="9" y="3" width="1" height="1"/><rect x="9" y="6" width="1" height="1"/><rect x="9" y="7" width="1" height="1"/><rect x="10" y="1" width="1" height="1"/><rect x="10" y="2" width="1" height="1"/><rect x="10" y="3" width="1" height="1"/><rect x="10" y="6" width="1" height="1"/><rect x="11" y="0" width="1" height="1"/><rect x="11" y="6" width="1" height="1"/><rect x="12" y="0" width="1" height="1"/><rect x="12" y="6" width="1" height="1"/><rect x="13" y="1" width="1" height="1"/><rect x="13" y="2" width="1" height="1"/><rect x="13" y="3" width="1" height="1"/><rect x="13" y="6" width="1" height="1"/><rect x="14" y="3" width="1" height="1"/><rect x="14" y="4" width="1" height="1"/><rect x="14" y="5" width="1" height="1"/><rect x="14" y="6" width="1" height="1"/><rect x="15" y="3" width="1" height="1"/><rect x="15" y="6" width="1" height="1"/><rect x="15" y="7" width="1" height="1"/><rect x="16" y="3" width="1" height="1"/><rect x="16" y="8" width="1" height="1"/><rect x="17" y="3" width="1" height="1"/><rect x="17" y="9" width="1" height="1"/><rect x="18" y="3" width="1" height="1"/><rect x="18" y="6" width="1" height="1"/><rect x="18" y="9" width="1" height="1"/><rect x="19" y="3" width="1" height="1"/><rect x="19" y="6" width="1" height="1"/><rect x="19" y="8" width="1" height="1"/><rect x="20" y="3" width="1" height="1"/><rect x="20" y="6" width="1" height="1"/><rect x="20" y="7" width="1" height="1"/><rect x="21" y="1" width="1" height="1"/><rect x="21" y="2" width="1" height="1"/><rect x="21" y="3" width="1" height="1"/><rect x="21" y="6" width="1" height="1"/><rect x="22" y="0" width="1" height="1"/><rect x="22" y="6" width="1" height="1"/><rect x="23" y="0" width="1" height="1"/><rect x="23" y="6" width="1" height="1"/><rect x="24" y="1" width="1" height="1"/><rect x="24" y="2" width="1" height="1"/><rect x="24" y="3" width="1" height="1"/><rect x="24" y="6" width="1" height="1"/><rect x="25" y="3" width="1" height="1"/><rect x="25" y="4" width="1" height="1"/><rect x="25" y="5" width="1" height="1"/><rect x="25" y="6" width="1" height="1"/><rect x="26" y="3" width="1" height="1"/><rect x="26" y="6" width="1" height="1"/><rect x="26" y="7" width="1" height="1"/><rect x="27" y="3" width="1" height="1"/><rect x="27" y="8" width="1" height="1"/><rect x="28" y="3" width="1" height="1"/><rect x="28" y="9" width="1" height="1"/><rect x="29" y="3" width="1" height="1"/><rect x="29" y="6" width="1" height="1"/><rect x="29" y="9" width="1" height="1"/><rect x="30" y="3" width="1" height="1"/><rect x="30" y="6" width="1" height="1"/><rect x="30" y="8" width="1" height="1"/><rect x="31" y="3" width="1" height="1"/><rect x="31" y="6" width="1" height="1"/><rect x="31" y="7" width="1" height="1"/><rect x="32" y="1" width="1" height="1"/><rect x="32" y="2" width="1" height="1"/><rect x="32" y="3" width="1" height="1"/><rect x="32" y="6" width="1" height="1"/><rect x="33" y="0" width="1" height="1"/><rect x="33" y="6" width="1" height="1"/><rect x="34" y="0" width="1" height="1"/><rect x="34" y="6" width="1" height="1"/><rect x="35" y="1" width="1" height="1"/><rect x="35" y="2" width="1" height="1"/><rect x="35" y="3" width="1" height="1"/><rect x="35" y="6" width="1" height="1"/><rect x="36" y="3" width="1" height="1"/><rect x="36" y="4" width="1" height="1"/><rect x="36" y="5" width="1" height="1"/><rect x="36" y="6" width="1" height="1"/><rect x="37" y="3" width="1" height="1"/><rect x="37" y="6" width="1" height="1"/><rect x="38" y="0" width="1" height="1"/><rect x="38" y="1" width="1" height="1"/><rect x="38" y="2" width="1" height="1"/><rect x="38" y="3" width="1" height="1"/><rect x="38" y="4" width="1" height="1"/><rect x="38" y="5" width="1" height="1"/><rect x="38" y="6" width="1" height="1"/><rect x="38" y="7" width="1" height="1"/><rect x="38" y="8" width="1" height="1"/><rect x="38" y="9" width="1" height="1"/></g>
<text x="411.8" y="624" font-size="13" fill="#fff" font-weight="normal" text-anchor="start" font-style="normal">218</text>
<g transform="translate(457,596)" shape-rendering="crispEdges" fill="#00ffff"><rect x="0" y="0" width="1" height="1"/><rect x="0" y="1" width="1" height="1"/><rect x="0" y="2" width="1" height="1"/><rect x="0" y="3" width="1" height="1"/><rect x="0" y="4" width="1" height="1"/><rect x="0" y="5" width="1" height="1"/><rect x="0" y="6" width="1" height="1"/><rect x="0" y="7" width="1" height="1"/><rect x="0" y="8" width="1" height="1"/><rect x="0" y="9" width="1" height="1"/><rect x="1" y="0" width="1" height="1"/><rect x="1" y="1" width="1" height="1"/><rect x="1" y="2" width="1" height="1"/><rect x="1" y="3" width="1" height="1"/><rect x="1" y="6" width="1" height="1"/><rect x="2" y="3" width="1" height="1"/><rect x="2" y="4" width="1" height="1"/><rect x="2" y="5" width="1" height="1"/><rect x="2" y="6" width="1" height="1"/><rect x="3" y="3" width="1" height="1"/><rect x="3" y="6" width="1" height="1"/><rect x="4" y="3" width="1" height="1"/><rect x="4" y="6" width="1" height="1"/><rect x="4" y="7" width="1" height="1"/><rect x="5" y="3" width="1" height="1"/><rect x="5" y="8" width="1" height="1"/><rect x="6" y="3" width="1" height="1"/><rect x="6" y="9" width="1" height="1"/><rect x="7" y="3" width="1" height="1"/><rect x="7" y="6" width="1" height="1"/><rect x="7" y="9" width="1" height="1"/><rect x="8" y="3" width="1" height="1"/><rect x="8" y="6" width="1" height="1"/><rect x="8" y="8" width="1" height="1"/><rect x="9" y="3" width="1" height="1"/><rect x="9" y="6" width="1" height="1"/><rect x="9" y="7" width="1" height="1"/><rect x="10" y="1" width="1" height="1"/><rect x="10" y="2" width="1" height="1"/><rect x="10" y="3" width="1" height="1"/><rect x="10" y="6" width="1" height="1"/><rect x="11" y="0" width="1" height="1"/><rect x="11" y="6" width="1" height="1"/><rect x="12" y="0" width="1" height="1"/><rect x="12" y="6" width="1" height="1"/><rect x="13" y="1" width="1" height="1"/><rect x="13" y="2" width="1" height="1"/><rect x="13" y="3" width="1" height="1"/><rect x="13" y="6" width="1" height="1"/><rect x="14" y="3" width="1" height="1"/><rect x="14" y="4" width="1" height="1"/><rect x="14" y="5" width="1" height="1"/><rect x="14" y="6" width="1" height="1"/><rect x="15" y="3" width="1" height="1"/><rect x="15" y="6" width="1" height="1"/><rect x="15" y="7" width="1" height="1"/><rect x="16" y="3" width="1" height="1"/><rect x="16" y="8" width="1" height="1"/><rect x="17" y="3" width="1" height="1"/><rect x="17" y="9" width="1" height="1"/><rect x="18" y="3" width="1" height="1"/><rect x="18" y="6" width="1" height="1"/><rect x="18" y="9" width="1" height="1"/><rect x="19" y="3" width="1" height="1"/><rect x="19" y="6" width="1" height="1"/><rect x="19" y="8" width="1" height="1"/><rect x="20" y="3" width="1" height="1"/><rect x="20" y="6" width="1" height="1"/><rect x="20" y="7" width="1" height="1"/><rect x="21" y="1" width="1" height="1"/><rect x="21" y="2" width="1" height="1"/><rect x="21" y="3" width="1" height="1"/><rect x="21" y="6" width="1" height="1"/><rect x="22" y="0" width="1" height="1"/><rect x="22" y="6" width="1" height="1"/><rect x="23" y="0" width="1" height="1"/><rect x="23" y="6" width="1" height="1"/><rect x="24" y="1" width="1" height="1"/><rect x="24" y="2" width="1" height="1"/><rect x="24" y="3" width="1" height="1"/><rect x="24" y="6" width="1" height="1"/><rect x="25" y="3" width="1" height="1"/><rect x="25" y="4" width="1" height="1"/><rect x="25" y="5" width="1" height="1"/><rect x="25" y="6" width="1" height="1"/><rect x="26" y="3" width="1" height="1"/><rect x="26" y="6" width="1" height="1"/><rect x="26" y="7" width="1" height="1"/><rect x="27" y="3" width="1" height="1"/><rect x="27" y="8" width="1" height="1"/><rect x="28" y="3" width="1" height="1"/><rect x="28" y="9" width="1" height="1"/><rect x="29" y="3" width="1" height="1"/><rect x="29" y="6" width="1" height="1"/><rect x="29" y="9" width="1" height="1"/><rect x="30" y="3" width="1" height="1"/><rect x="30" y="6" width="1" height="1"/><rect x="30" y="8" width="1" height="1"/><rect x="31" y="3" width="1" height="1"/><rect x="31" y="6" width="1" height="1"/><rect x="31" y="7" width="1" height="1"/><rect x="32" y="1" width="1" height="1"/><rect x="32" y="2" width="1" height="1"/><rect x="32" y="3" width="1" height="1"/><rect x="32" y="6" width="1" height="1"/><rect x="33" y="0" width="1" height="1"/><rect x="33" y="6" width="1" height="1"/><rect x="34" y="0" width="1" height="1"/><rect x="34" y="6" width="1" height="1"/><rect x="35" y="1" width="1" height="1"/><rect x="35" y="2" width="1" height="1"/><rect x="35" y="3" width="1" height="1"/><rect x="35" y="6" width="1" height="1"/><rect x="36" y="3" width="1" height="1"/><rect x="36" y="4" width="1" height="1"/><rect x="36" y="5" width="1" height="1"/><rect x="36" y="6" width="1" height="1"/><rect x="37" y="3" width="1" height="1"/><rect x="37" y="6" width="1" height="1"/><rect x="38" y="0" width="1" height="1"/><rect x="38" y="1" width="1" height="1"/><rect x="38" y="2" width="1" height="1"/><rect x="38" y="3" width="1" height="1"/><rect x="38" y="4" width="1" height="1"/><rect x="38" y="5" width="1" height="1"/><rect x="38" y="6" width="1" height="1"/><rect x="38" y="7" width="1" height="1"/><rect x="38" y="8" width="1" height="1"/><rect x="38" y="9" width="1" height="1"/></g>
<text x="455.8" y="624" font-size="13" fill="#fff" font-weight="normal" text-anchor="start" font-style="normal">220</text>
<g transform="translate(505,596)" shape-rendering="crispEdges" fill="#00ffff"><rect x="0" y="0" width="1" height="1"/><rect x="0" y="1" width="1" height="1"/><rect x="0" y="2" width="1" height="1"/><rect x="0" y="3" width="1" height="1"/><rect x="0" y="4" width="1" height="1"/><rect x="0" y="5" width="1" height="1"/><rect x="0" y="6" width="1" height="1"/><rect x="0" y="7" width="1" height="1"/><rect x="0" y="8" width="1" height="1"/><rect x="0" y="9" width="1" height="1"/><rect x="1" y="0" width="1" height="1"/><rect x="1" y="1" width="1" height="1"/><rect x="1" y="2" width="1" height="1"/><rect x="1" y="3" width="1" height="1"/><rect x="1" y="6" width="1" height="1"/><rect x="2" y="3" width="1" height="1"/><rect x="2" y="4" width="1" height="1"/><rect x="2" y="5" width="1" height="1"/><rect x="2" y="6" width="1" height="1"/><rect x="3" y="3" width="1" height="1"/><rect x="3" y="6" width="1" height="1"/><rect x="4" y="3" width="1" height="1"/><rect x="4" y="6" width="1" height="1"/><rect x="4" y="7" width="1" height="1"/><rect x="5" y="3" width="1" height="1"/><rect x="5" y="8" width="1" height="1"/><rect x="6" y="3" width="1" height="1"/><rect x="6" y="9" width="1" height="1"/><rect x="7" y="3" width="1" height="1"/><rect x="7" y="6" width="1" height="1"/><rect x="7" y="9" width="1" height="1"/><rect x="8" y="3" width="1" height="1"/><rect x="8" y="6" width="1" height="1"/><rect x="8" y="8" width="1" height="1"/><rect x="9" y="3" width="1" height="1"/><rect x="9" y="6" width="1" height="1"/><rect x="9" y="7" width="1" height="1"/><rect x="10" y="1" width="1" height="1"/><rect x="10" y="2" width="1" height="1"/><rect x="10" y="3" width="1" height="1"/><rect x="10" y="6" width="1" height="1"/><rect x="11" y="0" width="1" height="1"/><rect x="11" y="6" width="1" height="1"/><rect x="12" y="0" width="1" height="1"/><rect x="12" y="6" width="1" height="1"/><rect x="13" y="1" width="1" height="1"/><rect x="13" y="2" width="1" height="1"/><rect x="13" y="3" width="1" height="1"/><rect x="13" y="6" width="1" height="1"/><rect x="14" y="3" width="1" height="1"/><rect x="14" y="4" width="1" height="1"/><rect x="14" y="5" width="1" height="1"/><rect x="14" y="6" width="1" height="1"/><rect x="15" y="3" width="1" height="1"/><rect x="15" y="6" width="1" height="1"/><rect x="15" y="7" width="1" height="1"/><rect x="16" y="3" width="1" height="1"/><rect x="16" y="8" width="1" height="1"/><rect x="17" y="3" width="1" height="1"/><rect x="17" y="9" width="1" height="1"/><rect x="18" y="3" width="1" height="1"/><rect x="18" y="6" width="1" height="1"/><rect x="18" y="9" width="1" height="1"/><rect x="19" y="3" width="1" height="1"/><rect x="19" y="6" width="1" height="1"/><rect x="19" y="8" width="1" height="1"/><rect x="20" y="3" width="1" height="1"/><rect x="20" y="6" width="1" height="1"/><rect x="20" y="7" width="1" height="1"/><rect x="21" y="1" width="1" height="1"/><rect x="21" y="2" width="1" height="1"/><rect x="21" y="3" width="1" height="1"/><rect x="21" y="6" width="1" height="1"/><rect x="22" y="0" width="1" height="1"/><rect x="22" y="6" width="1" height="1"/><rect x="23" y="0" width="1" height="1"/><rect x="23" y="6" width="1" height="1"/><rect x="24" y="1" width="1" height="1"/><rect x="24" y="2" width="1" height="1"/><rect x="24" y="3" width="1" height="1"/><rect x="24" y="6" width="1" height="1"/><rect x="25" y="3" width="1" height="1"/><rect x="25" y="4" width="1" height="1"/><rect x="25" y="5" width="1" height="1"/><rect x="25" y="6" width="1" height="1"/><rect x="26" y="3" width="1" height="1"/><rect x="26" y="6" width="1" height="1"/><rect x="26" y="7" width="1" height="1"/><rect x="27" y="3" width="1" height="1"/><rect x="27" y="8" width="1" height="1"/><rect x="28" y="3" width="1" height="1"/><rect x="28" y="9" width="1" height="1"/><rect x="29" y="3" width="1" height="1"/><rect x="29" y="6" width="1" height="1"/><rect x="29" y="9" width="1" height="1"/><rect x="30" y="3" width="1" height="1"/><rect x="30" y="6" width="1" height="1"/><rect x="30" y="8" width="1" height="1"/><rect x="31" y="3" width="1" height="1"/><rect x="31" y="6" width="1" height="1"/><rect x="31" y="7" width="1" height="1"/><rect x="32" y="1" width="1" height="1"/><rect x="32" y="2" width="1" height="1"/><rect x="32" y="3" width="1" height="1"/><rect x="32" y="6" width="1" height="1"/><rect x="33" y="0" width="1" height="1"/><rect x="33" y="6" width="1" height="1"/><rect x="34" y="0" width="1" height="1"/><rect x="34" y="6" width="1" height="1"/><rect x="35" y="1" width="1" height="1"/><rect x="35" y="2" width="1" height="1"/><rect x="35" y="3" width="1" height="1"/><rect x="35" y="6" width="1" height="1"/><rect x="36" y="3" width="1" height="1"/><rect x="36" y="4" width="1" height="1"/><rect x="36" y="5" width="1" height="1"/><rect x="36" y="6" width="1" height="1"/><rect x="37" y="3" width="1" height="1"/><rect x="37" y="6" width="1" height="1"/><rect x="38" y="0" width="1" height="1"/><rect x="38" y="1" width="1" height="1"/><rect x="38" y="2" width="1" height="1"/><rect x="38" y="3" width="1" height="1"/><rect x="38" y="4" width="1" height="1"/><rect x="38" y="5" width="1" height="1"/><rect x="38" y="6" width="1" height="1"/><rect x="38" y="7" width="1" height="1"/><rect x="38" y="8" width="1" height="1"/><rect x="38" y="9" width="1" height="1"/></g>
<text x="503.8" y="624" font-size="13" fill="#fff" font-weight="normal" text-anchor="start" font-style="normal">222</text>
<g transform="translate(549,596)" shape-rendering="crispEdges" fill="#00ffff"><rect x="0" y="0" width="1" height="1"/><rect x="0" y="1" width="1" height="1"/><rect x="0" y="2" width="1" height="1"/><rect x="0" y="3" width="1" height="1"/><rect x="0" y="4" width="1" height="1"/><rect x="0" y="5" width="1" height="1"/><rect x="0" y="6" width="1" height="1"/><rect x="0" y="7" width="1" height="1"/><rect x="0" y="8" width="1" height="1"/><rect x="0" y="9" width="1" height="1"/><rect x="1" y="0" width="1" height="1"/><rect x="1" y="1" width="1" height="1"/><rect x="1" y="2" width="1" height="1"/><rect x="1" y="3" width="1" height="1"/><rect x="1" y="6" width="1" height="1"/><rect x="2" y="3" width="1" height="1"/><rect x="2" y="4" width="1" height="1"/><rect x="2" y="5" width="1" height="1"/><rect x="2" y="6" width="1" height="1"/><rect x="3" y="3" width="1" height="1"/><rect x="3" y="6" width="1" height="1"/><rect x="4" y="3" width="1" height="1"/><rect x="4" y="6" width="1" height="1"/><rect x="4" y="7" width="1" height="1"/><rect x="5" y="3" width="1" height="1"/><rect x="5" y="8" width="1" height="1"/><rect x="6" y="3" width="1" height="1"/><rect x="6" y="9" width="1" height="1"/><rect x="7" y="3" width="1" height="1"/><rect x="7" y="6" width="1" height="1"/><rect x="7" y="9" width="1" height="1"/><rect x="8" y="3" width="1" height="1"/><rect x="8" y="6" width="1" height="1"/><rect x="8" y="8" width="1" height="1"/><rect x="9" y="3" width="1" height="1"/><rect x="9" y="6" width="1" height="1"/><rect x="9" y="7" width="1" height="1"/><rect x="10" y="1" width="1" height="1"/><rect x="10" y="2" width="1" height="1"/><rect x="10" y="3" width="1" height="1"/><rect x="10" y="6" width="1" height="1"/><rect x="11" y="0" width="1" height="1"/><rect x="11" y="6" width="1" height="1"/><rect x="12" y="0" width="1" height="1"/><rect x="12" y="6" width="1" height="1"/><rect x="13" y="1" width="1" height="1"/><rect x="13" y="2" width="1" height="1"/><rect x="13" y="3" width="1" height="1"/><rect x="13" y="6" width="1" height="1"/><rect x="14" y="3" width="1" height="1"/><rect x="14" y="4" width="1" height="1"/><rect x="14" y="5" width="1" height="1"/><rect x="14" y="6" width="1" height="1"/><rect x="15" y="3" width="1" height="1"/><rect x="15" y="6" width="1" height="1"/><rect x="15" y="7" width="1" height="1"/><rect x="16" y="3" width="1" height="1"/><rect x="16" y="8" width="1" height="1"/><rect x="17" y="3" width="1" height="1"/><rect x="17" y="9" width="1" height="1"/><rect x="18" y="3" width="1" height="1"/><rect x="18" y="6" width="1" height="1"/><rect x="18" y="9" width="1" height="1"/><rect x="19" y="3" width="1" height="1"/><rect x="19" y="6" width="1" height="1"/><rect x="19" y="8" width="1" height="1"/><rect x="20" y="3" width="1" height="1"/><rect x="20" y="6" width="1" height="1"/><rect x="20" y="7" width="1" height="1"/><rect x="21" y="1" width="1" height="1"/><rect x="21" y="2" width="1" height="1"/><rect x="21" y="3" width="1" height="1"/><rect x="21" y="6" width="1" height="1"/><rect x="22" y="0" width="1" height="1"/><rect x="22" y="6" width="1" height="1"/><rect x="23" y="0" width="1" height="1"/><rect x="23" y="6" width="1" height="1"/><rect x="24" y="1" width="1" height="1"/><rect x="24" y="2" width="1" height="1"/><rect x="24" y="3" width="1" height="1"/><rect x="24" y="6" width="1" height="1"/><rect x="25" y="3" width="1" height="1"/><rect x="25" y="4" width="1" height="1"/><rect x="25" y="5" width="1" height="1"/><rect x="25" y="6" width="1" height="1"/><rect x="26" y="3" width="1" height="1"/><rect x="26" y="6" width="1" height="1"/><rect x="26" y="7" width="1" height="1"/><rect x="27" y="3" width="1" height="1"/><rect x="27" y="8" width="1" height="1"/><rect x="28" y="3" width="1" height="1"/><rect x="28" y="9" width="1" height="1"/><rect x="29" y="3" width="1" height="1"/><rect x="29" y="6" width="1" height="1"/><rect x="29" y="9" width="1" height="1"/><rect x="30" y="3" width="1" height="1"/><rect x="30" y="6" width="1" height="1"/><rect x="30" y="8" width="1" height="1"/><rect x="31" y="3" width="1" height="1"/><rect x="31" y="6" width="1" height="1"/><rect x="31" y="7" width="1" height="1"/><rect x="32" y="1" width="1" height="1"/><rect x="32" y="2" width="1" height="1"/><rect x="32" y="3" width="1" height="1"/><rect x="32" y="6" width="1" height="1"/><rect x="33" y="0" width="1" height="1"/><rect x="33" y="6" width="1" height="1"/><rect x="34" y="0" width="1" height="1"/><rect x="34" y="6" width="1" height="1"/><rect x="35" y="1" width="1" height="1"/><rect x="35" y="2" width="1" height="1"/><rect x="35" y="3" width="1" height="1"/><rect x="35" y="6" width="1" height="1"/><rect x="36" y="3" width="1" height="1"/><rect x="36" y="4" width="1" height="1"/><rect x="36" y="5" width="1" height="1"/><rect x="36" y="6" width="1" height="1"/><rect x="37" y="3" width="1" height="1"/><rect x="37" y="6" width="1" height="1"/><rect x="38" y="0" width="1" height="1"/><rect x="38" y="1" width="1" height="1"/><rect x="38" y="2" width="1" height="1"/><rect x="38" y="3" width="1" height="1"/><rect x="38" y="4" width="1" height="1"/><rect x="38" y="5" width="1" height="1"/><rect x="38" y="6" width="1" height="1"/><rect x="38" y="7" width="1" height="1"/><rect x="38" y="8" width="1" height="1"/><rect x="38" y="9" width="1" height="1"/></g>
<text x="547.8" y="624" font-size="13" fill="#fff" font-weight="normal" text-anchor="start" font-style="normal">224</text>
<g transform="translate(605,596)" shape-rendering="crispEdges" fill="#00ffff"><rect x="0" y="0" width="1" height="1"/><rect x="0" y="1" width="1" height="1"/><rect x="0" y="2" width="1" height="1"/><rect x="0" y="3" width="1" height="1"/><rect x="0" y="4" width="1" height="1"/><rect x="0" y="5" width="1" height="1"/><rect x="0" y="6" width="1" height="1"/><rect x="0" y="7" width="1" height="1"/><rect x="0" y="8" width="1" height="1"/><rect x="0" y="9" width="1" height="1"/><rect x="1" y="0" width="1" height="1"/><rect x="1" y="1" width="1" height="1"/><rect x="1" y="2" width="1" height="1"/><rect x="1" y="3" width="1" height="1"/><rect x="1" y="6" width="1" height="1"/><rect x="2" y="3" width="1" height="1"/><rect x="2" y="4" width="1" height="1"/><rect x="2" y="5" width="1" height="1"/><rect x="2" y="6" width="1" height="1"/><rect x="3" y="3" width="1" height="1"/><rect x="3" y="6" width="1" height="1"/><rect x="4" y="3" width="1" height="1"/><rect x="4" y="6" width="1" height="1"/><rect x="4" y="7" width="1" height="1"/><rect x="5" y="3" width="1" height="1"/><rect x="5" y="8" width="1" height="1"/><rect x="6" y="3" width="1" height="1"/><rect x="6" y="9" width="1" height="1"/><rect x="7" y="3" width="1" height="1"/><rect x="7" y="6" width="1" height="1"/><rect x="7" y="9" width="1" height="1"/><rect x="8" y="3" width="1" height="1"/><rect x="8" y="6" width="1" height="1"/><rect x="8" y="8" width="1" height="1"/><rect x="9" y="3" width="1" height="1"/><rect x="9" y="6" width="1" height="1"/><rect x="9" y="7" width="1" height="1"/><rect x="10" y="1" width="1" height="1"/><rect x="10" y="2" width="1" height="1"/><rect x="10" y="3" width="1" height="1"/><rect x="10" y="6" width="1" height="1"/><rect x="11" y="0" width="1" height="1"/><rect x="11" y="6" width="1" height="1"/><rect x="12" y="0" width="1" height="1"/><rect x="12" y="6" width="1" height="1"/><rect x="13" y="1" width="1" height="1"/><rect x="13" y="2" width="1" height="1"/><rect x="13" y="3" width="1" height="1"/><rect x="13" y="6" width="1" height="1"/><rect x="14" y="3" width="1" height="1"/><rect x="14" y="4" width="1" height="1"/><rect x="14" y="5" width="1" height="1"/><rect x="14" y="6" width="1" height="1"/><rect x="15" y="3" width="1" height="1"/><rect x="15" y="6" width="1" height="1"/><rect x="15" y="7" width="1" height="1"/><rect x="16" y="3" width="1" height="1"/><rect x="16" y="8" width="1" height="1"/><rect x="17" y="3" width="1" height="1"/><rect x="17" y="9" width="1" height="1"/><rect x="18" y="3" width="1" height="1"/><rect x="18" y="6" width="1" height="1"/><rect x="18" y="9" width="1" height="1"/><rect x="19" y="3" width="1" height="1"/><rect x="19" y="6" width="1" height="1"/><rect x="19" y="8" width="1" height="1"/><rect x="20" y="3" width="1" height="1"/><rect x="20" y="6" width="1" height="1"/><rect x="20" y="7" width="1" height="1"/><rect x="21" y="1" width="1" height="1"/><rect x="21" y="2" width="1" height="1"/><rect x="21" y="3" width="1" height="1"/><rect x="21" y="6" width="1" height="1"/><rect x="22" y="0" width="1" height="1"/><rect x="22" y="6" width="1" height="1"/><rect x="23" y="0" width="1" height="1"/><rect x="23" y="6" width="1" height="1"/><rect x="24" y="1" width="1" height="1"/><rect x="24" y="2" width="1" height="1"/><rect x="24" y="3" width="1" height="1"/><rect x="24" y="6" width="1" height="1"/><rect x="25" y="3" width="1" height="1"/><rect x="25" y="4" width="1" height="1"/><rect x="25" y="5" width="1" height="1"/><rect x="25" y="6" width="1" height="1"/><rect x="26" y="3" width="1" height="1"/><rect x="26" y="6" width="1" height="1"/><rect x="26" y="7" width="1" height="1"/><rect x="27" y="3" width="1" height="1"/><rect x="27" y="8" width="1" height="1"/><rect x="28" y="3" width="1" height="1"/><rect x="28" y="9" width="1" height="1"/><rect x="29" y="3" width="1" height="1"/><rect x="29" y="6" width="1" height="1"/><rect x="29" y="9" width="1" height="1"/><rect x="30" y="3" width="1" height="1"/><rect x="30" y="6" width="1" height="1"/><rect x="30" y="8" width="1" height="1"/><rect x="31" y="3" width="1" height="1"/><rect x="31" y="6" width="1" height="1"/><rect x="31" y="7" width="1" height="1"/><rect x="32" y="1" width="1" height="1"/><rect x="32" y="2" width="1" height="1"/><rect x="32" y="3" width="1" height="1"/><rect x="32" y="6" width="1" height="1"/><rect x="33" y="0" width="1" height="1"/><rect x="33" y="6" width="1" height="1"/><rect x="34" y="0" width="1" height="1"/><rect x="34" y="6" width="1" height="1"/><rect x="35" y="1" width="1" height="1"/><rect x="35" y="2" width="1" height="1"/><rect x="35" y="3" width="1" height="1"/><rect x="35" y="6" width="1" height="1"/><rect x="36" y="3" width="1" height="1"/><rect x="36" y="4" width="1" height="1"/><rect x="36" y="5" width="1" height="1"/><rect x="36" y="6" width="1" height="1"/><rect x="37" y="3" width="1" height="1"/><rect x="37" y="6" width="1" height="1"/><rect x="38" y="0" width="1" height="1"/><rect x="38" y="1" width="1" height="1"/><rect x="38" y="2" width="1" height="1"/><rect x="38" y="3" width="1" height="1"/><rect x="38" y="4" width="1" height="1"/><rect x="38" y="5" width="1" height="1"/><rect x="38" y="6" width="1" height="1"/><rect x="38" y="7" width="1" height="1"/><rect x="38" y="8" width="1" height="1"/><rect x="38" y="9" width="1" height="1"/></g>
<text x="603.8" y="624" font-size="13" fill="#fff" font-weight="normal" text-anchor="start" font-style="normal">226</text>
<g transform="translate(649,596)" shape-rendering="crispEdges" fill="#00ffff"><rect x="0" y="0" width="1" height="1"/><rect x="0" y="1" width="1" height="1"/><rect x="0" y="2" width="1" height="1"/><rect x="0" y="3" width="1" height="1"/><rect x="0" y="4" width="1" height="1"/><rect x="0" y="5" width="1" height="1"/><rect x="0" y="6" width="1" height="1"/><rect x="0" y="7" width="1" height="1"/><rect x="0" y="8" width="1" height="1"/><rect x="0" y="9" width="1" height="1"/><rect x="1" y="0" width="1" height="1"/><rect x="1" y="1" width="1" height="1"/><rect x="1" y="2" width="1" height="1"/><rect x="1" y="3" width="1" height="1"/><rect x="1" y="6" width="1" height="1"/><rect x="2" y="3" width="1" height="1"/><rect x="2" y="4" width="1" height="1"/><rect x="2" y="5" width="1" height="1"/><rect x="2" y="6" width="1" height="1"/><rect x="3" y="3" width="1" height="1"/><rect x="3" y="6" width="1" height="1"/><rect x="4" y="3" width="1" height="1"/><rect x="4" y="6" width="1" height="1"/><rect x="4" y="7" width="1" height="1"/><rect x="5" y="3" width="1" height="1"/><rect x="5" y="8" width="1" height="1"/><rect x="6" y="3" width="1" height="1"/><rect x="6" y="9" width="1" height="1"/><rect x="7" y="3" width="1" height="1"/><rect x="7" y="6" width="1" height="1"/><rect x="7" y="9" width="1" height="1"/><rect x="8" y="3" width="1" height="1"/><rect x="8" y="6" width="1" height="1"/><rect x="8" y="8" width="1" height="1"/><rect x="9" y="3" width="1" height="1"/><rect x="9" y="6" width="1" height="1"/><rect x="9" y="7" width="1" height="1"/><rect x="10" y="1" width="1" height="1"/><rect x="10" y="2" width="1" height="1"/><rect x="10" y="3" width="1" height="1"/><rect x="10" y="6" width="1" height="1"/><rect x="11" y="0" width="1" height="1"/><rect x="11" y="6" width="1" height="1"/><rect x="12" y="0" width="1" height="1"/><rect x="12" y="6" width="1" height="1"/><rect x="13" y="1" width="1" height="1"/><rect x="13" y="2" width="1" height="1"/><rect x="13" y="3" width="1" height="1"/><rect x="13" y="6" width="1" height="1"/><rect x="14" y="3" width="1" height="1"/><rect x="14" y="4" width="1" height="1"/><rect x="14" y="5" width="1" height="1"/><rect x="14" y="6" width="1" height="1"/><rect x="15" y="3" width="1" height="1"/><rect x="15" y="6" width="1" height="1"/><rect x="15" y="7" width="1" height="1"/><rect x="16" y="3" width="1" height="1"/><rect x="16" y="8" width="1" height="1"/><rect x="17" y="3" width="1" height="1"/><rect x="17" y="9" width="1" height="1"/><rect x="18" y="3" width="1" height="1"/><rect x="18" y="6" width="1" height="1"/><rect x="18" y="9" width="1" height="1"/><rect x="19" y="3" width="1" height="1"/><rect x="19" y="6" width="1" height="1"/><rect x="19" y="8" width="1" height="1"/><rect x="20" y="3" width="1" height="1"/><rect x="20" y="6" width="1" height="1"/><rect x="20" y="7" width="1" height="1"/><rect x="21" y="1" width="1" height="1"/><rect x="21" y="2" width="1" height="1"/><rect x="21" y="3" width="1" height="1"/><rect x="21" y="6" width="1" height="1"/><rect x="22" y="0" width="1" height="1"/><rect x="22" y="6" width="1" height="1"/><rect x="23" y="0" width="1" height="1"/><rect x="23" y="6" width="1" height="1"/><rect x="24" y="1" width="1" height="1"/><rect x="24" y="2" width="1" height="1"/><rect x="24" y="3" width="1" height="1"/><rect x="24" y="6" width="1" height="1"/><rect x="25" y="3" width="1" height="1"/><rect x="25" y="4" width="1" height="1"/><rect x="25" y="5" width="1" height="1"/><rect x="25" y="6" width="1" height="1"/><rect x="26" y="3" width="1" height="1"/><rect x="26" y="6" width="1" height="1"/><rect x="26" y="7" width="1" height="1"/><rect x="27" y="3" width="1" height="1"/><rect x="27" y="8" width="1" height="1"/><rect x="28" y="3" width="1" height="1"/><rect x="28" y="9" width="1" height="1"/><rect x="29" y="3" width="1" height="1"/><rect x="29" y="6" width="1" height="1"/><rect x="29" y="9" width="1" height="1"/><rect x="30" y="3" width="1" height="1"/><rect x="30" y="6" width="1" height="1"/><rect x="30" y="8" width="1" height="1"/><rect x="31" y="3" width="1" height="1"/><rect x="31" y="6" width="1" height="1"/><rect x="31" y="7" width="1" height="1"/><rect x="32" y="1" width="1" height="1"/><rect x="32" y="2" width="1" height="1"/><rect x="32" y="3" width="1" height="1"/><rect x="32" y="6" width="1" height="1"/><rect x="33" y="0" width="1" height="1"/><rect x="33" y="6" width="1" height="1"/><rect x="34" y="0" width="1" height="1"/><rect x="34" y="6" width="1" height="1"/><rect x="35" y="1" width="1" height="1"/><rect x="35" y="2" width="1" height="1"/><rect x="35" y="3" width="1" height="1"/><rect x="35" y="6" width="1" height="1"/><rect x="36" y="3" width="1" height="1"/><rect x="36" y="4" width="1" height="1"/><rect x="36" y="5" width="1" height="1"/><rect x="36" y="6" width="1" height="1"/><rect x="37" y="3" width="1" height="1"/><rect x="37" y="6" width="1" height="1"/><rect x="38" y="0" width="1" height="1"/><rect x="38" y="1" width="1" height="1"/><rect x="38" y="2" width="1" height="1"/><rect x="38" y="3" width="1" height="1"/><rect x="38" y="4" width="1" height="1"/><rect x="38" y="5" width="1" height="1"/><rect x="38" y="6" width="1" height="1"/><rect x="38" y="7" width="1" height="1"/><rect x="38" y="8" width="1" height="1"/><rect x="38" y="9" width="1" height="1"/></g>
<text x="647.8" y="624" font-size="13" fill="#fff" font-weight="normal" text-anchor="start" font-style="normal">228</text>
<g transform="translate(693,596)" shape-rendering="crispEdges" fill="#00ffff"><rect x="0" y="0" width="1" height="1"/><rect x="0" y="1" width="1" height="1"/><rect x="0" y="2" width="1" height="1"/><rect x="0" y="3" width="1" height="1"/><rect x="0" y="4" width="1" height="1"/><rect x="0" y="5" width="1" height="1"/><rect x="0" y="6" width="1" height="1"/><rect x="0" y="7" width="1" height="1"/><rect x="0" y="8" width="1" height="1"/><rect x="0" y="9" width="1" height="1"/><rect x="1" y="0" width="1" height="1"/><rect x="1" y="1" width="1" height="1"/><rect x="1" y="2" width="1" height="1"/><rect x="1" y="3" width="1" height="1"/><rect x="1" y="6" width="1" height="1"/><rect x="2" y="3" width="1" height="1"/><rect x="2" y="4" width="1" height="1"/><rect x="2" y="5" width="1" height="1"/><rect x="2" y="6" width="1" height="1"/><rect x="3" y="3" width="1" height="1"/><rect x="3" y="6" width="1" height="1"/><rect x="4" y="3" width="1" height="1"/><rect x="4" y="6" width="1" height="1"/><rect x="4" y="7" width="1" height="1"/><rect x="5" y="3" width="1" height="1"/><rect x="5" y="8" width="1" height="1"/><rect x="6" y="3" width="1" height="1"/><rect x="6" y="9" width="1" height="1"/><rect x="7" y="3" width="1" height="1"/><rect x="7" y="6" width="1" height="1"/><rect x="7" y="9" width="1" height="1"/><rect x="8" y="3" width="1" height="1"/><rect x="8" y="6" width="1" height="1"/><rect x="8" y="8" width="1" height="1"/><rect x="9" y="3" width="1" height="1"/><rect x="9" y="6" width="1" height="1"/><rect x="9" y="7" width="1" height="1"/><rect x="10" y="1" width="1" height="1"/><rect x="10" y="2" width="1" height="1"/><rect x="10" y="3" width="1" height="1"/><rect x="10" y="6" width="1" height="1"/><rect x="11" y="0" width="1" height="1"/><rect x="11" y="6" width="1" height="1"/><rect x="12" y="0" width="1" height="1"/><rect x="12" y="6" width="1" height="1"/><rect x="13" y="1" width="1" height="1"/><rect x="13" y="2" width="1" height="1"/><rect x="13" y="3" width="1" height="1"/><rect x="13" y="6" width="1" height="1"/><rect x="14" y="3" width="1" height="1"/><rect x="14" y="4" width="1" height="1"/><rect x="14" y="5" width="1" height="1"/><rect x="14" y="6" width="1" height="1"/><rect x="15" y="3" width="1" height="1"/><rect x="15" y="6" width="1" height="1"/><rect x="15" y="7" width="1" height="1"/><rect x="16" y="3" width="1" height="1"/><rect x="16" y="8" width="1" height="1"/><rect x="17" y="3" width="1" height="1"/><rect x="17" y="9" width="1" height="1"/><rect x="18" y="3" width="1" height="1"/><rect x="18" y="6" width="1" height="1"/><rect x="18" y="9" width="1" height="1"/><rect x="19" y="3" width="1" height="1"/><rect x="19" y="6" width="1" height="1"/><rect x="19" y="8" width="1" height="1"/><rect x="20" y="3" width="1" height="1"/><rect x="20" y="6" width="1" height="1"/><rect x="20" y="7" width="1" height="1"/><rect x="21" y="1" width="1" height="1"/><rect x="21" y="2" width="1" height="1"/><rect x="21" y="3" width="1" height="1"/><rect x="21" y="6" width="1" height="1"/><rect x="22" y="0" width="1" height="1"/><rect x="22" y="6" width="1" height="1"/><rect x="23" y="0" width="1" height="1"/><rect x="23" y="6" width="1" height="1"/><rect x="24" y="1" width="1" height="1"/><rect x="24" y="2" width="1" height="1"/><rect x="24" y="3" width="1" height="1"/><rect x="24" y="6" width="1" height="1"/><rect x="25" y="3" width="1" height="1"/><rect x="25" y="4" width="1" height="1"/><rect x="25" y="5" width="1" height="1"/><rect x="25" y="6" width="1" height="1"/><rect x="26" y="3" width="1" height="1"/><rect x="26" y="6" width="1" height="1"/><rect x="26" y="7" width="1" height="1"/><rect x="27" y="3" width="1" height="1"/><rect x="27" y="8" width="1" height="1"/><rect x="28" y="3" width="1" height="1"/><rect x="28" y="9" width="1" height="1"/><rect x="29" y="3" width="1" height="1"/><rect x="29" y="6" width="1" height="1"/><rect x="29" y="9" width="1" height="1"/><rect x="30" y="3" width="1" height="1"/><rect x="30" y="6" width="1" height="1"/><rect x="30" y="8" width="1" height="1"/><rect x="31" y="3" width="1" height="1"/><rect x="31" y="6" width="1" height="1"/><rect x="31" y="7" width="1" height="1"/><rect x="32" y="1" width="1" height="1"/><rect x="32" y="2" width="1" height="1"/><rect x="32" y="3" width="1" height="1"/><rect x="32" y="6" width="1" height="1"/><rect x="33" y="0" width="1" height="1"/><rect x="33" y="6" width="1" height="1"/><rect x="34" y="0" width="1" height="1"/><rect x="34" y="6" width="1" height="1"/><rect x="35" y="1" width="1" height="1"/><rect x="35" y="2" width="1" height="1"/><rect x="35" y="3" width="1" height="1"/><rect x="35" y="6" width="1" height="1"/><rect x="36" y="3" width="1" height="1"/><rect x="36" y="4" width="1" height="1"/><rect x="36" y="5" width="1" height="1"/><rect x="36" y="6" width="1" height="1"/><rect x="37" y="3" width="1" height="1"/><rect x="37" y="6" width="1" height="1"/><rect x="38" y="0" width="1" height="1"/><rect x="38" y="1" width="1" height="1"/><rect x="38" y="2" width="1" height="1"/><rect x="38" y="3" width="1" height="1"/><rect x="38" y="4" width="1" height="1"/><rect x="38" y="5" width="1" height="1"/><rect x="38" y="6" width="1" height="1"/><rect x="38" y="7" width="1" height="1"/><rect x="38" y="8" width="1" height="1"/><rect x="38" y="9" width="1" height="1"/></g>
<text x="691.8" y="624" font-size="13" fill="#fff" font-weight="normal" text-anchor="start" font-style="normal">230</text>
<g transform="translate(737,596)" shape-rendering="crispEdges" fill="#00ffff"><rect x="0" y="0" width="1" height="1"/><rect x="0" y="1" width="1" height="1"/><rect x="0" y="2" width="1" height="1"/><rect x="0" y="3" width="1" height="1"/><rect x="0" y="4" width="1" height="1"/><rect x="0" y="5" width="1" height="1"/><rect x="0" y="6" width="1" height="1"/><rect x="0" y="7" width="1" height="1"/><rect x="0" y="8" width="1" height="1"/><rect x="0" y="9" width="1" height="1"/><rect x="1" y="0" width="1" height="1"/><rect x="1" y="1" width="1" height="1"/><rect x="1" y="2" width="1" height="1"/><rect x="1" y="3" width="1" height="1"/><rect x="1" y="6" width="1" height="1"/><rect x="2" y="3" width="1" height="1"/><rect x="2" y="4" width="1" height="1"/><rect x="2" y="5" width="1" height="1"/><rect x="2" y="6" width="1" height="1"/><rect x="3" y="3" width="1" height="1"/><rect x="3" y="6" width="1" height="1"/><rect x="4" y="3" width="1" height="1"/><rect x="4" y="6" width="1" height="1"/><rect x="4" y="7" width="1" height="1"/><rect x="5" y="3" width="1" height="1"/><rect x="5" y="8" width="1" height="1"/><rect x="6" y="3" width="1" height="1"/><rect x="6" y="9" width="1" height="1"/><rect x="7" y="3" width="1" height="1"/><rect x="7" y="6" width="1" height="1"/><rect x="7" y="9" width="1" height="1"/><rect x="8" y="3" width="1" height="1"/><rect x="8" y="6" width="1" height="1"/><rect x="8" y="8" width="1" height="1"/><rect x="9" y="3" width="1" height="1"/><rect x="9" y="6" width="1" height="1"/><rect x="9" y="7" width="1" height="1"/><rect x="10" y="1" width="1" height="1"/><rect x="10" y="2" width="1" height="1"/><rect x="10" y="3" width="1" height="1"/><rect x="10" y="6" width="1" height="1"/><rect x="11" y="0" width="1" height="1"/><rect x="11" y="6" width="1" height="1"/><rect x="12" y="0" width="1" height="1"/><rect x="12" y="6" width="1" height="1"/><rect x="13" y="1" width="1" height="1"/><rect x="13" y="2" width="1" height="1"/><rect x="13" y="3" width="1" height="1"/><rect x="13" y="6" width="1" height="1"/><rect x="14" y="3" width="1" height="1"/><rect x="14" y="4" width="1" height="1"/><rect x="14" y="5" width="1" height="1"/><rect x="14" y="6" width="1" height="1"/><rect x="15" y="3" width="1" height="1"/><rect x="15" y="6" width="1" height="1"/><rect x="15" y="7" width="1" height="1"/><rect x="16" y="3" width="1" height="1"/><rect x="16" y="8" width="1" height="1"/><rect x="17" y="3" width="1" height="1"/><rect x="17" y="9" width="1" height="1"/><rect x="18" y="3" width="1" height="1"/><rect x="18" y="6" width="1" height="1"/><rect x="18" y="9" width="1" height="1"/><rect x="19" y="3" width="1" height="1"/><rect x="19" y="6" width="1" height="1"/><rect x="19" y="8" width="1" height="1"/><rect x="20" y="3" width="1" height="1"/><rect x="20" y="6" width="1" height="1"/><rect x="20" y="7" width="1" height="1"/><rect x="21" y="1" width="1" height="1"/><rect x="21" y="2" width="1" height="1"/><rect x="21" y="3" width="1" height="1"/><rect x="21" y="6" width="1" height="1"/><rect x="22" y="0" width="1" height="1"/><rect x="22" y="6" width="1" height="1"/><rect x="23" y="0" width="1" height="1"/><rect x="23" y="6" width="1" height="1"/><rect x="24" y="1" width="1" height="1"/><rect x="24" y="2" width="1" height="1"/><rect x="24" y="3" width="1" height="1"/><rect x="24" y="6" width="1" height="1"/><rect x="25" y="3" width="1" height="1"/><rect x="25" y="4" width="1" height="1"/><rect x="25" y="5" width="1" height="1"/><rect x="25" y="6" width="1" height="1"/><rect x="26" y="3" width="1" height="1"/><rect x="26" y="6" width="1" height="1"/><rect x="26" y="7" width="1" height="1"/><rect x="27" y="3" width="1" height="1"/><rect x="27" y="8" width="1" height="1"/><rect x="28" y="3" width="1" height="1"/><rect x="28" y="9" width="1" height="1"/><rect x="29" y="3" width="1" height="1"/><rect x="29" y="6" width="1" height="1"/><rect x="29" y="9" width="1" height="1"/><rect x="30" y="3" width="1" height="1"/><rect x="30" y="6" width="1" height="1"/><rect x="30" y="8" width="1" height="1"/><rect x="31" y="3" width="1" height="1"/><rect x="31" y="6" width="1" height="1"/><rect x="31" y="7" width="1" height="1"/><rect x="32" y="1" width="1" height="1"/><rect x="32" y="2" width="1" height="1"/><rect x="32" y="3" width="1" height="1"/><rect x="32" y="6" width="1" height="1"/><rect x="33" y="0" width="1" height="1"/><rect x="33" y="6" width="1" height="1"/><rect x="34" y="0" width="1" height="1"/><rect x="34" y="6" width="1" height="1"/><rect x="35" y="1" width="1" height="1"/><rect x="35" y="2" width="1" height="1"/><rect x="35" y="3" width="1" height="1"/><rect x="35" y="6" width="1" height="1"/><rect x="36" y="3" width="1" height="1"/><rect x="36" y="4" width="1" height="1"/><rect x="36" y="5" width="1" height="1"/><rect x="36" y="6" width="1" height="1"/><rect x="37" y="3" width="1" height="1"/><rect x="37" y="6" width="1" height="1"/><rect x="38" y="0" width="1" height="1"/><rect x="38" y="1" width="1" height="1"/><rect x="38" y="2" width="1" height="1"/><rect x="38" y="3" width="1" height="1"/><rect x="38" y="4" width="1" height="1"/><rect x="38" y="5" width="1" height="1"/><rect x="38" y="6" width="1" height="1"/><rect x="38" y="7" width="1" height="1"/><rect x="38" y="8" width="1" height="1"/><rect x="38" y="9" width="1" height="1"/></g>
<text x="735.8" y="624" font-size="13" fill="#fff" font-weight="normal" text-anchor="start" font-style="normal">232</text>
<g transform="translate(246,682)" shape-rendering="crispEdges" fill="#00ffff"><rect x="0" y="0" width="1" height="1"/><rect x="0" y="1" width="1" height="1"/><rect x="0" y="2" width="1" height="1"/><rect x="0" y="3" width="1" height="1"/><rect x="0" y="4" width="1" height="1"/><rect x="0" y="5" width="1" height="1"/><rect x="0" y="6" width="1" height="1"/><rect x="0" y="7" width="1" height="1"/><rect x="0" y="8" width="1" height="1"/><rect x="0" y="9" width="1" height="1"/><rect x="1" y="0" width="1" height="1"/><rect x="1" y="1" width="1" height="1"/><rect x="1" y="2" width="1" height="1"/><rect x="1" y="3" width="1" height="1"/><rect x="1" y="6" width="1" height="1"/><rect x="2" y="3" width="1" height="1"/><rect x="2" y="4" width="1" height="1"/><rect x="2" y="5" width="1" height="1"/><rect x="2" y="6" width="1" height="1"/><rect x="3" y="3" width="1" height="1"/><rect x="3" y="6" width="1" height="1"/><rect x="4" y="3" width="1" height="1"/><rect x="4" y="6" width="1" height="1"/><rect x="4" y="7" width="1" height="1"/><rect x="5" y="3" width="1" height="1"/><rect x="5" y="8" width="1" height="1"/><rect x="6" y="3" width="1" height="1"/><rect x="6" y="9" width="1" height="1"/><rect x="7" y="3" width="1" height="1"/><rect x="7" y="6" width="1" height="1"/><rect x="7" y="9" width="1" height="1"/><rect x="8" y="3" width="1" height="1"/><rect x="8" y="6" width="1" height="1"/><rect x="8" y="8" width="1" height="1"/><rect x="9" y="3" width="1" height="1"/><rect x="9" y="6" width="1" height="1"/><rect x="9" y="7" width="1" height="1"/><rect x="10" y="1" width="1" height="1"/><rect x="10" y="2" width="1" height="1"/><rect x="10" y="3" width="1" height="1"/><rect x="10" y="6" width="1" height="1"/><rect x="11" y="0" width="1" height="1"/><rect x="11" y="6" width="1" height="1"/><rect x="12" y="0" width="1" height="1"/><rect x="12" y="6" width="1" height="1"/><rect x="13" y="1" width="1" height="1"/><rect x="13" y="2" width="1" height="1"/><rect x="13" y="3" width="1" height="1"/><rect x="13" y="6" width="1" height="1"/><rect x="14" y="3" width="1" height="1"/><rect x="14" y="4" width="1" height="1"/><rect x="14" y="5" width="1" height="1"/><rect x="14" y="6" width="1" height="1"/><rect x="15" y="3" width="1" height="1"/><rect x="15" y="6" width="1" height="1"/><rect x="15" y="7" width="1" height="1"/><rect x="16" y="3" width="1" height="1"/><rect x="16" y="8" width="1" height="1"/><rect x="17" y="3" width="1" height="1"/><rect x="17" y="9" width="1" height="1"/><rect x="18" y="3" width="1" height="1"/><rect x="18" y="6" width="1" height="1"/><rect x="18" y="9" width="1" height="1"/><rect x="19" y="3" width="1" height="1"/><rect x="19" y="6" width="1" height="1"/><rect x="19" y="8" width="1" height="1"/><rect x="20" y="3" width="1" height="1"/><rect x="20" y="6" width="1" height="1"/><rect x="20" y="7" width="1" height="1"/><rect x="21" y="1" width="1" height="1"/><rect x="21" y="2" width="1" height="1"/><rect x="21" y="3" width="1" height="1"/><rect x="21" y="6" width="1" height="1"/><rect x="22" y="0" width="1" height="1"/><rect x="22" y="6" width="1" height="1"/><rect x="23" y="0" width="1" height="1"/><rect x="23" y="6" width="1" height="1"/><rect x="24" y="1" width="1" height="1"/><rect x="24" y="2" width="1" height="1"/><rect x="24" y="3" width="1" height="1"/><rect x="24" y="6" width="1" height="1"/><rect x="25" y="3" width="1" height="1"/><rect x="25" y="4" width="1" height="1"/><rect x="25" y="5" width="1" height="1"/><rect x="25" y="6" width="1" height="1"/><rect x="26" y="3" width="1" height="1"/><rect x="26" y="6" width="1" height="1"/><rect x="26" y="7" width="1" height="1"/><rect x="27" y="3" width="1" height="1"/><rect x="27" y="8" width="1" height="1"/><rect x="28" y="3" width="1" height="1"/><rect x="28" y="9" width="1" height="1"/><rect x="29" y="3" width="1" height="1"/><rect x="29" y="6" width="1" height="1"/><rect x="29" y="9" width="1" height="1"/><rect x="30" y="3" width="1" height="1"/><rect x="30" y="6" width="1" height="1"/><rect x="30" y="8" width="1" height="1"/><rect x="31" y="3" width="1" height="1"/><rect x="31" y="6" width="1" height="1"/><rect x="31" y="7" width="1" height="1"/><rect x="32" y="1" width="1" height="1"/><rect x="32" y="2" width="1" height="1"/><rect x="32" y="3" width="1" height="1"/><rect x="32" y="6" width="1" height="1"/><rect x="33" y="0" width="1" height="1"/><rect x="33" y="6" width="1" height="1"/><rect x="34" y="0" width="1" height="1"/><rect x="34" y="6" width="1" height="1"/><rect x="35" y="1" width="1" height="1"/><rect x="35" y="2" width="1" height="1"/><rect x="35" y="3" width="1" height="1"/><rect x="35" y="6" width="1" height="1"/><rect x="36" y="3" width="1" height="1"/><rect x="36" y="4" width="1" height="1"/><rect x="36" y="5" width="1" height="1"/><rect x="36" y="6" width="1" height="1"/><rect x="37" y="3" width="1" height="1"/><rect x="37" y="6" width="1" height="1"/><rect x="37" y="7" width="1" height="1"/><rect x="38" y="3" width="1" height="1"/><rect x="38" y="8" width="1" height="1"/><rect x="39" y="3" width="1" height="1"/><rect x="39" y="9" width="1" height="1"/><rect x="40" y="3" width="1" height="1"/><rect x="40" y="6" width="1" height="1"/><rect x="40" y="9" width="1" height="1"/><rect x="41" y="3" width="1" height="1"/><rect x="41" y="6" width="1" height="1"/><rect x="41" y="8" width="1" height="1"/><rect x="42" y="3" width="1" height="1"/><rect x="42" y="6" width="1" height="1"/><rect x="42" y="7" width="1" height="1"/><rect x="43" y="1" width="1" height="1"/><rect x="43" y="2" width="1" height="1"/><rect x="43" y="3" width="1" height="1"/><rect x="43" y="6" width="1" height="1"/><rect x="44" y="0" width="1" height="1"/><rect x="44" y="6" width="1" height="1"/><rect x="45" y="0" width="1" height="1"/><rect x="45" y="6" width="1" height="1"/><rect x="46" y="1" width="1" height="1"/><rect x="46" y="2" width="1" height="1"/><rect x="46" y="3" width="1" height="1"/><rect x="46" y="6" width="1" height="1"/><rect x="47" y="3" width="1" height="1"/><rect x="47" y="4" width="1" height="1"/><rect x="47" y="5" width="1" height="1"/><rect x="47" y="6" width="1" height="1"/><rect x="48" y="3" width="1" height="1"/><rect x="48" y="6" width="1" height="1"/><rect x="48" y="7" width="1" height="1"/><rect x="49" y="3" width="1" height="1"/><rect x="49" y="8" width="1" height="1"/><rect x="50" y="3" width="1" height="1"/><rect x="50" y="9" width="1" height="1"/><rect x="51" y="3" width="1" height="1"/><rect x="51" y="6" width="1" height="1"/><rect x="51" y="9" width="1" height="1"/><rect x="52" y="3" width="1" height="1"/><rect x="52" y="6" width="1" height="1"/><rect x="52" y="8" width="1" height="1"/><rect x="53" y="3" width="1" height="1"/><rect x="53" y="6" width="1" height="1"/><rect x="53" y="7" width="1" height="1"/><rect x="54" y="1" width="1" height="1"/><rect x="54" y="2" width="1" height="1"/><rect x="54" y="3" width="1" height="1"/><rect x="54" y="6" width="1" height="1"/><rect x="55" y="0" width="1" height="1"/><rect x="55" y="6" width="1" height="1"/><rect x="56" y="0" width="1" height="1"/><rect x="56" y="6" width="1" height="1"/><rect x="57" y="1" width="1" height="1"/><rect x="57" y="2" width="1" height="1"/><rect x="57" y="3" width="1" height="1"/><rect x="57" y="6" width="1" height="1"/><rect x="58" y="3" width="1" height="1"/><rect x="58" y="4" width="1" height="1"/><rect x="58" y="5" width="1" height="1"/><rect x="58" y="6" width="1" height="1"/><rect x="59" y="3" width="1" height="1"/><rect x="59" y="6" width="1" height="1"/><rect x="59" y="7" width="1" height="1"/><rect x="60" y="3" width="1" height="1"/><rect x="60" y="8" width="1" height="1"/><rect x="61" y="3" width="1" height="1"/><rect x="61" y="9" width="1" height="1"/><rect x="62" y="3" width="1" height="1"/><rect x="62" y="6" width="1" height="1"/><rect x="62" y="9" width="1" height="1"/><rect x="63" y="3" width="1" height="1"/><rect x="63" y="6" width="1" height="1"/><rect x="63" y="8" width="1" height="1"/><rect x="64" y="3" width="1" height="1"/><rect x="64" y="6" width="1" height="1"/><rect x="64" y="7" width="1" height="1"/><rect x="65" y="1" width="1" height="1"/><rect x="65" y="2" width="1" height="1"/><rect x="65" y="3" width="1" height="1"/><rect x="65" y="6" width="1" height="1"/><rect x="66" y="0" width="1" height="1"/><rect x="66" y="6" width="1" height="1"/><rect x="67" y="0" width="1" height="1"/><rect x="67" y="6" width="1" height="1"/><rect x="68" y="1" width="1" height="1"/><rect x="68" y="2" width="1" height="1"/><rect x="68" y="3" width="1" height="1"/><rect x="68" y="6" width="1" height="1"/><rect x="69" y="3" width="1" height="1"/><rect x="69" y="4" width="1" height="1"/><rect x="69" y="5" width="1" height="1"/><rect x="69" y="6" width="1" height="1"/><rect x="70" y="3" width="1" height="1"/><rect x="70" y="6" width="1" height="1"/><rect x="70" y="7" width="1" height="1"/><rect x="71" y="3" width="1" height="1"/><rect x="71" y="8" width="1" height="1"/><rect x="72" y="3" width="1" height="1"/><rect x="72" y="9" width="1" height="1"/><rect x="73" y="3" width="1" height="1"/><rect x="73" y="6" width="1" height="1"/><rect x="73" y="9" width="1" height="1"/><rect x="74" y="3" width="1" height="1"/><rect x="74" y="6" width="1" height="1"/><rect x="74" y="8" width="1" height="1"/><rect x="75" y="3" width="1" height="1"/><rect x="75" y="6" width="1" height="1"/><rect x="75" y="7" width="1" height="1"/><rect x="76" y="1" width="1" height="1"/><rect x="76" y="2" width="1" height="1"/><rect x="76" y="3" width="1" height="1"/><rect x="76" y="6" width="1" height="1"/><rect x="77" y="0" width="1" height="1"/><rect x="77" y="6" width="1" height="1"/><rect x="78" y="0" width="1" height="1"/><rect x="78" y="6" width="1" height="1"/><rect x="79" y="1" width="1" height="1"/><rect x="79" y="2" width="1" height="1"/><rect x="79" y="3" width="1" height="1"/><rect x="79" y="6" width="1" height="1"/><rect x="80" y="3" width="1" height="1"/><rect x="80" y="4" width="1" height="1"/><rect x="80" y="5" width="1" height="1"/><rect x="80" y="6" width="1" height="1"/><rect x="81" y="3" width="1" height="1"/><rect x="81" y="6" width="1" height="1"/><rect x="81" y="7" width="1" height="1"/><rect x="82" y="3" width="1" height="1"/><rect x="82" y="8" width="1" height="1"/><rect x="83" y="3" width="1" height="1"/><rect x="83" y="9" width="1" height="1"/><rect x="84" y="3" width="1" height="1"/><rect x="84" y="6" width="1" height="1"/><rect x="84" y="9" width="1" height="1"/><rect x="85" y="3" width="1" height="1"/><rect x="85" y="6" width="1" height="1"/><rect x="85" y="8" width="1" height="1"/><rect x="86" y="3" width="1" height="1"/><rect x="86" y="6" width="1" height="1"/><rect x="86" y="7" width="1" height="1"/><rect x="87" y="1" width="1" height="1"/><rect x="87" y="2" width="1" height="1"/><rect x="87" y="3" width="1" height="1"/><rect x="87" y="6" width="1" height="1"/><rect x="88" y="0" width="1" height="1"/><rect x="88" y="6" width="1" height="1"/><rect x="89" y="0" width="1" height="1"/><rect x="89" y="6" width="1" height="1"/><rect x="90" y="1" width="1" height="1"/><rect x="90" y="2" width="1" height="1"/><rect x="90" y="3" width="1" height="1"/><rect x="90" y="6" width="1" height="1"/><rect x="91" y="3" width="1" height="1"/><rect x="91" y="4" width="1" height="1"/><rect x="91" y="5" width="1" height="1"/><rect x="91" y="6" width="1" height="1"/><rect x="92" y="3" width="1" height="1"/><rect x="92" y="6" width="1" height="1"/><rect x="92" y="7" width="1" height="1"/><rect x="93" y="3" width="1" height="1"/><rect x="93" y="8" width="1" height="1"/><rect x="94" y="3" width="1" height="1"/><rect x="94" y="9" width="1" height="1"/><rect x="95" y="3" width="1" height="1"/><rect x="95" y="6" width="1" height="1"/><rect x="95" y="9" width="1" height="1"/><rect x="96" y="3" width="1" height="1"/><rect x="96" y="6" width="1" height="1"/><rect x="96" y="8" width="1" height="1"/><rect x="97" y="3" width="1" height="1"/><rect x="97" y="6" width="1" height="1"/><rect x="97" y="7" width="1" height="1"/><rect x="98" y="1" width="1" height="1"/><rect x="98" y="2" width="1" height="1"/><rect x="98" y="3" width="1" height="1"/><rect x="98" y="6" width="1" height="1"/><rect x="99" y="0" width="1" height="1"/><rect x="99" y="6" width="1" height="1"/><rect x="100" y="0" width="1" height="1"/><rect x="100" y="6" width="1" height="1"/><rect x="101" y="1" width="1" height="1"/><rect x="101" y="2" width="1" height="1"/><rect x="101" y="3" width="1" height="1"/><rect x="101" y="6" width="1" height="1"/><rect x="102" y="3" width="1" height="1"/><rect x="102" y="4" width="1" height="1"/><rect x="102" y="5" width="1" height="1"/><rect x="102" y="6" width="1" height="1"/><rect x="103" y="3" width="1" height="1"/><rect x="103" y="6" width="1" height="1"/><rect x="103" y="7" width="1" height="1"/><rect x="104" y="3" width="1" height="1"/><rect x="104" y="8" width="1" height="1"/><rect x="105" y="3" width="1" height="1"/><rect x="105" y="9" width="1" height="1"/><rect x="106" y="3" width="1" height="1"/><rect x="106" y="6" width="1" height="1"/><rect x="106" y="9" width="1" height="1"/><rect x="107" y="3" width="1" height="1"/><rect x="107" y="6" width="1" height="1"/><rect x="107" y="8" width="1" height="1"/><rect x="108" y="3" width="1" height="1"/><rect x="108" y="6" width="1" height="1"/><rect x="108" y="7" width="1" height="1"/><rect x="109" y="1" width="1" height="1"/><rect x="109" y="2" width="1" height="1"/><rect x="109" y="3" width="1" height="1"/><rect x="109" y="6" width="1" height="1"/><rect x="110" y="0" width="1" height="1"/><rect x="110" y="6" width="1" height="1"/><rect x="111" y="0" width="1" height="1"/><rect x="111" y="6" width="1" height="1"/><rect x="112" y="1" width="1" height="1"/><rect x="112" y="2" width="1" height="1"/><rect x="112" y="3" width="1" height="1"/><rect x="112" y="6" width="1" height="1"/><rect x="113" y="3" width="1" height="1"/><rect x="113" y="4" width="1" height="1"/><rect x="113" y="5" width="1" height="1"/><rect x="113" y="6" width="1" height="1"/><rect x="114" y="3" width="1" height="1"/><rect x="114" y="6" width="1" height="1"/><rect x="114" y="7" width="1" height="1"/><rect x="115" y="3" width="1" height="1"/><rect x="115" y="8" width="1" height="1"/><rect x="116" y="3" width="1" height="1"/><rect x="116" y="9" width="1" height="1"/><rect x="117" y="3" width="1" height="1"/><rect x="117" y="6" width="1" height="1"/><rect x="117" y="9" width="1" height="1"/><rect x="118" y="3" width="1" height="1"/><rect x="118" y="6" width="1" height="1"/><rect x="118" y="8" width="1" height="1"/><rect x="119" y="3" width="1" height="1"/><rect x="119" y="6" width="1" height="1"/><rect x="119" y="7" width="1" height="1"/><rect x="120" y="1" width="1" height="1"/><rect x="120" y="2" width="1" height="1"/><rect x="120" y="3" width="1" height="1"/><rect x="120" y="6" width="1" height="1"/><rect x="121" y="0" width="1" height="1"/><rect x="121" y="6" width="1" height="1"/><rect x="122" y="0" width="1" height="1"/><rect x="122" y="6" width="1" height="1"/><rect x="123" y="1" width="1" height="1"/><rect x="123" y="2" width="1" height="1"/><rect x="123" y="3" width="1" height="1"/><rect x="123" y="6" width="1" height="1"/><rect x="124" y="3" width="1" height="1"/><rect x="124" y="4" width="1" height="1"/><rect x="124" y="5" width="1" height="1"/><rect x="124" y="6" width="1" height="1"/><rect x="125" y="3" width="1" height="1"/><rect x="125" y="6" width="1" height="1"/><rect x="125" y="7" width="1" height="1"/><rect x="126" y="3" width="1" height="1"/><rect x="126" y="8" width="1" height="1"/><rect x="127" y="3" width="1" height="1"/><rect x="127" y="9" width="1" height="1"/><rect x="128" y="3" width="1" height="1"/><rect x="128" y="6" width="1" height="1"/><rect x="128" y="9" width="1" height="1"/><rect x="129" y="3" width="1" height="1"/><rect x="129" y="6" width="1" height="1"/><rect x="129" y="8" width="1" height="1"/><rect x="130" y="3" width="1" height="1"/><rect x="130" y="6" width="1" height="1"/><rect x="130" y="7" width="1" height="1"/><rect x="131" y="1" width="1" height="1"/><rect x="131" y="2" width="1" height="1"/><rect x="131" y="3" width="1" height="1"/><rect x="131" y="6" width="1" height="1"/><rect x="132" y="0" width="1" height="1"/><rect x="132" y="6" width="1" height="1"/><rect x="133" y="0" width="1" height="1"/><rect x="133" y="6" width="1" height="1"/><rect x="134" y="1" width="1" height="1"/><rect x="134" y="2" width="1" height="1"/><rect x="134" y="3" width="1" height="1"/><rect x="134" y="6" width="1" height="1"/><rect x="135" y="3" width="1" height="1"/><rect x="135" y="4" width="1" height="1"/><rect x="135" y="5" width="1" height="1"/><rect x="135" y="6" width="1" height="1"/><rect x="136" y="3" width="1" height="1"/><rect x="136" y="6" width="1" height="1"/><rect x="136" y="7" width="1" height="1"/><rect x="137" y="3" width="1" height="1"/><rect x="137" y="8" width="1" height="1"/><rect x="138" y="3" width="1" height="1"/><rect x="138" y="9" width="1" height="1"/><rect x="139" y="3" width="1" height="1"/><rect x="139" y="6" width="1" height="1"/><rect x="139" y="9" width="1" height="1"/><rect x="140" y="3" width="1" height="1"/><rect x="140" y="6" width="1" height="1"/><rect x="140" y="8" width="1" height="1"/><rect x="141" y="3" width="1" height="1"/><rect x="141" y="6" width="1" height="1"/><rect x="141" y="7" width="1" height="1"/><rect x="142" y="1" width="1" height="1"/><rect x="142" y="2" width="1" height="1"/><rect x="142" y="3" width="1" height="1"/><rect x="142" y="6" width="1" height="1"/><rect x="143" y="0" width="1" height="1"/><rect x="143" y="6" width="1" height="1"/><rect x="144" y="0" width="1" height="1"/><rect x="144" y="6" width="1" height="1"/><rect x="145" y="1" width="1" height="1"/><rect x="145" y="2" width="1" height="1"/><rect x="145" y="3" width="1" height="1"/><rect x="145" y="6" width="1" height="1"/><rect x="146" y="3" width="1" height="1"/><rect x="146" y="4" width="1" height="1"/><rect x="146" y="5" width="1" height="1"/><rect x="146" y="6" width="1" height="1"/><rect x="147" y="3" width="1" height="1"/><rect x="147" y="6" width="1" height="1"/><rect x="147" y="7" width="1" height="1"/><rect x="148" y="3" width="1" height="1"/><rect x="148" y="8" width="1" height="1"/><rect x="149" y="3" width="1" height="1"/><rect x="149" y="9" width="1" height="1"/><rect x="150" y="3" width="1" height="1"/><rect x="150" y="6" width="1" height="1"/><rect x="150" y="9" width="1" height="1"/><rect x="151" y="3" width="1" height="1"/><rect x="151" y="6" width="1" height="1"/><rect x="151" y="8" width="1" height="1"/><rect x="152" y="3" width="1" height="1"/><rect x="152" y="6" width="1" height="1"/><rect x="152" y="7" width="1" height="1"/><rect x="153" y="1" width="1" height="1"/><rect x="153" y="2" width="1" height="1"/><rect x="153" y="3" width="1" height="1"/><rect x="153" y="6" width="1" height="1"/><rect x="154" y="0" width="1" height="1"/><rect x="154" y="6" width="1" height="1"/><rect x="155" y="0" width="1" height="1"/><rect x="155" y="6" width="1" height="1"/><rect x="156" y="1" width="1" height="1"/><rect x="156" y="2" width="1" height="1"/><rect x="156" y="3" width="1" height="1"/><rect x="156" y="6" width="1" height="1"/><rect x="157" y="3" width="1" height="1"/><rect x="157" y="4" width="1" height="1"/><rect x="157" y="5" width="1" height="1"/><rect x="157" y="6" width="1" height="1"/><rect x="158" y="3" width="1" height="1"/><rect x="158" y="6" width="1" height="1"/><rect x="158" y="7" width="1" height="1"/><rect x="159" y="3" width="1" height="1"/><rect x="159" y="8" width="1" height="1"/><rect x="160" y="3" width="1" height="1"/><rect x="160" y="9" width="1" height="1"/><rect x="161" y="3" width="1" height="1"/><rect x="161" y="6" width="1" height="1"/><rect x="161" y="9" width="1" height="1"/><rect x="162" y="3" width="1" height="1"/><rect x="162" y="6" width="1" height="1"/><rect x="162" y="8" width="1" height="1"/><rect x="163" y="3" width="1" height="1"/><rect x="163" y="6" width="1" height="1"/><rect x="163" y="7" width="1" height="1"/><rect x="164" y="1" width="1" height="1"/><rect x="164" y="2" width="1" height="1"/><rect x="164" y="3" width="1" height="1"/><rect x="164" y="6" width="1" height="1"/><rect x="165" y="0" width="1" height="1"/><rect x="165" y="6" width="1" height="1"/><rect x="166" y="0" width="1" height="1"/><rect x="166" y="6" width="1" height="1"/><rect x="167" y="1" width="1" height="1"/><rect x="167" y="2" width="1" height="1"/><rect x="167" y="3" width="1" height="1"/><rect x="167" y="6" width="1" height="1"/><rect x="168" y="3" width="1" height="1"/><rect x="168" y="4" width="1" height="1"/><rect x="168" y="5" width="1" height="1"/><rect x="168" y="6" width="1" height="1"/><rect x="169" y="3" width="1" height="1"/><rect x="169" y="6" width="1" height="1"/><rect x="169" y="7" width="1" height="1"/><rect x="170" y="3" width="1" height="1"/><rect x="170" y="8" width="1" height="1"/><rect x="171" y="3" width="1" height="1"/><rect x="171" y="9" width="1" height="1"/><rect x="172" y="3" width="1" height="1"/><rect x="172" y="6" width="1" height="1"/><rect x="172" y="9" width="1" height="1"/><rect x="173" y="3" width="1" height="1"/><rect x="173" y="6" width="1" height="1"/><rect x="173" y="8" width="1" height="1"/><rect x="174" y="3" width="1" height="1"/><rect x="174" y="6" width="1" height="1"/><rect x="174" y="7" width="1" height="1"/><rect x="175" y="1" width="1" height="1"/><rect x="175" y="2" width="1" height="1"/><rect x="175" y="3" width="1" height="1"/><rect x="175" y="6" width="1" height="1"/><rect x="176" y="0" width="1" height="1"/><rect x="176" y="6" width="1" height="1"/><rect x="177" y="0" width="1" height="1"/><rect x="177" y="6" width="1" height="1"/><rect x="178" y="1" width="1" height="1"/><rect x="178" y="2" width="1" height="1"/><rect x="178" y="3" width="1" height="1"/><rect x="178" y="6" width="1" height="1"/><rect x="179" y="3" width="1" height="1"/><rect x="179" y="4" width="1" height="1"/><rect x="179" y="5" width="1" height="1"/><rect x="179" y="6" width="1" height="1"/><rect x="180" y="3" width="1" height="1"/><rect x="180" y="6" width="1" height="1"/><rect x="181" y="3" width="1" height="1"/><rect x="181" y="6" width="1" height="1"/><rect x="182" y="3" width="1" height="1"/><rect x="182" y="6" width="1" height="1"/><rect x="183" y="3" width="1" height="1"/><rect x="183" y="6" width="1" height="1"/><rect x="184" y="3" width="1" height="1"/><rect x="184" y="6" width="1" height="1"/><rect x="185" y="3" width="1" height="1"/><rect x="185" y="6" width="1" height="1"/><rect x="186" y="0" width="1" height="1"/><rect x="186" y="1" width="1" height="1"/><rect x="186" y="2" width="1" height="1"/><rect x="186" y="3" width="1" height="1"/><rect x="186" y="4" width="1" height="1"/><rect x="186" y="5" width="1" height="1"/><rect x="186" y="6" width="1" height="1"/><rect x="186" y="7" width="1" height="1"/><rect x="186" y="8" width="1" height="1"/><rect x="186" y="9" width="1" height="1"/></g><circle cx="254.5" cy="687.5" r="3.3" fill="#00ffff" stroke="#000" stroke-width="1.2"/>
<g transform="translate(409,663)" shape-rendering="crispEdges" fill="#00ffff"><rect x="0" y="0" width="1" height="1"/><rect x="0" y="1" width="1" height="1"/><rect x="0" y="2" width="1" height="1"/><rect x="0" y="3" width="1" height="1"/><rect x="0" y="4" width="1" height="1"/><rect x="0" y="5" width="1" height="1"/><rect x="0" y="6" width="1" height="1"/><rect x="0" y="7" width="1" height="1"/><rect x="0" y="8" width="1" height="1"/><rect x="0" y="9" width="1" height="1"/><rect x="1" y="0" width="1" height="1"/><rect x="1" y="1" width="1" height="1"/><rect x="1" y="2" width="1" height="1"/><rect x="1" y="3" width="1" height="1"/><rect x="1" y="6" width="1" height="1"/><rect x="2" y="3" width="1" height="1"/><rect x="2" y="4" width="1" height="1"/><rect x="2" y="5" width="1" height="1"/><rect x="2" y="6" width="1" height="1"/><rect x="3" y="3" width="1" height="1"/><rect x="3" y="6" width="1" height="1"/><rect x="4" y="3" width="1" height="1"/><rect x="4" y="6" width="1" height="1"/><rect x="4" y="7" width="1" height="1"/><rect x="5" y="3" width="1" height="1"/><rect x="5" y="8" width="1" height="1"/><rect x="6" y="3" width="1" height="1"/><rect x="6" y="9" width="1" height="1"/><rect x="7" y="3" width="1" height="1"/><rect x="7" y="6" width="1" height="1"/><rect x="7" y="9" width="1" height="1"/><rect x="8" y="3" width="1" height="1"/><rect x="8" y="6" width="1" height="1"/><rect x="8" y="8" width="1" height="1"/><rect x="9" y="3" width="1" height="1"/><rect x="9" y="6" width="1" height="1"/><rect x="9" y="7" width="1" height="1"/><rect x="10" y="1" width="1" height="1"/><rect x="10" y="2" width="1" height="1"/><rect x="10" y="3" width="1" height="1"/><rect x="10" y="6" width="1" height="1"/><rect x="11" y="0" width="1" height="1"/><rect x="11" y="6" width="1" height="1"/><rect x="12" y="0" width="1" height="1"/><rect x="12" y="6" width="1" height="1"/><rect x="13" y="1" width="1" height="1"/><rect x="13" y="2" width="1" height="1"/><rect x="13" y="3" width="1" height="1"/><rect x="13" y="6" width="1" height="1"/><rect x="14" y="3" width="1" height="1"/><rect x="14" y="4" width="1" height="1"/><rect x="14" y="5" width="1" height="1"/><rect x="14" y="6" width="1" height="1"/><rect x="15" y="3" width="1" height="1"/><rect x="15" y="6" width="1" height="1"/><rect x="15" y="7" width="1" height="1"/><rect x="16" y="3" width="1" height="1"/><rect x="16" y="8" width="1" height="1"/><rect x="17" y="3" width="1" height="1"/><rect x="17" y="9" width="1" height="1"/><rect x="18" y="3" width="1" height="1"/><rect x="18" y="6" width="1" height="1"/><rect x="18" y="9" width="1" height="1"/><rect x="19" y="3" width="1" height="1"/><rect x="19" y="6" width="1" height="1"/><rect x="19" y="8" width="1" height="1"/><rect x="20" y="3" width="1" height="1"/><rect x="20" y="6" width="1" height="1"/><rect x="20" y="7" width="1" height="1"/><rect x="21" y="1" width="1" height="1"/><rect x="21" y="2" width="1" height="1"/><rect x="21" y="3" width="1" height="1"/><rect x="21" y="6" width="1" height="1"/><rect x="22" y="0" width="1" height="1"/><rect x="22" y="6" width="1" height="1"/><rect x="23" y="0" width="1" height="1"/><rect x="23" y="6" width="1" height="1"/><rect x="24" y="1" width="1" height="1"/><rect x="24" y="2" width="1" height="1"/><rect x="24" y="3" width="1" height="1"/><rect x="24" y="6" width="1" height="1"/><rect x="25" y="3" width="1" height="1"/><rect x="25" y="4" width="1" height="1"/><rect x="25" y="5" width="1" height="1"/><rect x="25" y="6" width="1" height="1"/><rect x="26" y="3" width="1" height="1"/><rect x="26" y="6" width="1" height="1"/><rect x="26" y="7" width="1" height="1"/><rect x="27" y="3" width="1" height="1"/><rect x="27" y="8" width="1" height="1"/><rect x="28" y="3" width="1" height="1"/><rect x="28" y="9" width="1" height="1"/><rect x="29" y="3" width="1" height="1"/><rect x="29" y="6" width="1" height="1"/><rect x="29" y="9" width="1" height="1"/><rect x="30" y="3" width="1" height="1"/><rect x="30" y="6" width="1" height="1"/><rect x="30" y="8" width="1" height="1"/><rect x="31" y="3" width="1" height="1"/><rect x="31" y="6" width="1" height="1"/><rect x="31" y="7" width="1" height="1"/><rect x="32" y="1" width="1" height="1"/><rect x="32" y="2" width="1" height="1"/><rect x="32" y="3" width="1" height="1"/><rect x="32" y="6" width="1" height="1"/><rect x="33" y="0" width="1" height="1"/><rect x="33" y="6" width="1" height="1"/><rect x="34" y="0" width="1" height="1"/><rect x="34" y="6" width="1" height="1"/><rect x="35" y="1" width="1" height="1"/><rect x="35" y="2" width="1" height="1"/><rect x="35" y="3" width="1" height="1"/><rect x="35" y="6" width="1" height="1"/><rect x="36" y="3" width="1" height="1"/><rect x="36" y="4" width="1" height="1"/><rect x="36" y="5" width="1" height="1"/><rect x="36" y="6" width="1" height="1"/><rect x="37" y="3" width="1" height="1"/><rect x="37" y="6" width="1" height="1"/><rect x="37" y="7" width="1" height="1"/><rect x="38" y="3" width="1" height="1"/><rect x="38" y="8" width="1" height="1"/><rect x="39" y="3" width="1" height="1"/><rect x="39" y="9" width="1" height="1"/><rect x="40" y="3" width="1" height="1"/><rect x="40" y="6" width="1" height="1"/><rect x="40" y="9" width="1" height="1"/><rect x="41" y="3" width="1" height="1"/><rect x="41" y="6" width="1" height="1"/><rect x="41" y="8" width="1" height="1"/><rect x="42" y="3" width="1" height="1"/><rect x="42" y="6" width="1" height="1"/><rect x="42" y="7" width="1" height="1"/><rect x="43" y="1" width="1" height="1"/><rect x="43" y="2" width="1" height="1"/><rect x="43" y="3" width="1" height="1"/><rect x="43" y="6" width="1" height="1"/><rect x="44" y="0" width="1" height="1"/><rect x="44" y="6" width="1" height="1"/><rect x="45" y="0" width="1" height="1"/><rect x="45" y="6" width="1" height="1"/><rect x="46" y="1" width="1" height="1"/><rect x="46" y="2" width="1" height="1"/><rect x="46" y="3" width="1" height="1"/><rect x="46" y="6" width="1" height="1"/><rect x="47" y="3" width="1" height="1"/><rect x="47" y="4" width="1" height="1"/><rect x="47" y="5" width="1" height="1"/><rect x="47" y="6" width="1" height="1"/><rect x="48" y="3" width="1" height="1"/><rect x="48" y="6" width="1" height="1"/><rect x="48" y="7" width="1" height="1"/><rect x="49" y="3" width="1" height="1"/><rect x="49" y="8" width="1" height="1"/><rect x="50" y="3" width="1" height="1"/><rect x="50" y="9" width="1" height="1"/><rect x="51" y="3" width="1" height="1"/><rect x="51" y="6" width="1" height="1"/><rect x="51" y="9" width="1" height="1"/><rect x="52" y="3" width="1" height="1"/><rect x="52" y="6" width="1" height="1"/><rect x="52" y="8" width="1" height="1"/><rect x="53" y="3" width="1" height="1"/><rect x="53" y="6" width="1" height="1"/><rect x="53" y="7" width="1" height="1"/><rect x="54" y="1" width="1" height="1"/><rect x="54" y="2" width="1" height="1"/><rect x="54" y="3" width="1" height="1"/><rect x="54" y="6" width="1" height="1"/><rect x="55" y="0" width="1" height="1"/><rect x="55" y="6" width="1" height="1"/><rect x="56" y="0" width="1" height="1"/><rect x="56" y="6" width="1" height="1"/><rect x="57" y="1" width="1" height="1"/><rect x="57" y="2" width="1" height="1"/><rect x="57" y="3" width="1" height="1"/><rect x="57" y="6" width="1" height="1"/><rect x="58" y="3" width="1" height="1"/><rect x="58" y="4" width="1" height="1"/><rect x="58" y="5" width="1" height="1"/><rect x="58" y="6" width="1" height="1"/><rect x="59" y="3" width="1" height="1"/><rect x="59" y="6" width="1" height="1"/><rect x="59" y="7" width="1" height="1"/><rect x="60" y="3" width="1" height="1"/><rect x="60" y="8" width="1" height="1"/><rect x="61" y="3" width="1" height="1"/><rect x="61" y="9" width="1" height="1"/><rect x="62" y="3" width="1" height="1"/><rect x="62" y="6" width="1" height="1"/><rect x="62" y="9" width="1" height="1"/><rect x="63" y="3" width="1" height="1"/><rect x="63" y="6" width="1" height="1"/><rect x="63" y="8" width="1" height="1"/><rect x="64" y="3" width="1" height="1"/><rect x="64" y="6" width="1" height="1"/><rect x="64" y="7" width="1" height="1"/><rect x="65" y="1" width="1" height="1"/><rect x="65" y="2" width="1" height="1"/><rect x="65" y="3" width="1" height="1"/><rect x="65" y="6" width="1" height="1"/><rect x="66" y="0" width="1" height="1"/><rect x="66" y="6" width="1" height="1"/><rect x="67" y="0" width="1" height="1"/><rect x="67" y="6" width="1" height="1"/><rect x="68" y="1" width="1" height="1"/><rect x="68" y="2" width="1" height="1"/><rect x="68" y="3" width="1" height="1"/><rect x="68" y="6" width="1" height="1"/><rect x="69" y="3" width="1" height="1"/><rect x="69" y="4" width="1" height="1"/><rect x="69" y="5" width="1" height="1"/><rect x="69" y="6" width="1" height="1"/><rect x="70" y="3" width="1" height="1"/><rect x="70" y="6" width="1" height="1"/><rect x="70" y="7" width="1" height="1"/><rect x="71" y="3" width="1" height="1"/><rect x="71" y="8" width="1" height="1"/><rect x="72" y="3" width="1" height="1"/><rect x="72" y="9" width="1" height="1"/><rect x="73" y="3" width="1" height="1"/><rect x="73" y="6" width="1" height="1"/><rect x="73" y="9" width="1" height="1"/><rect x="74" y="3" width="1" height="1"/><rect x="74" y="6" width="1" height="1"/><rect x="74" y="8" width="1" height="1"/><rect x="75" y="3" width="1" height="1"/><rect x="75" y="6" width="1" height="1"/><rect x="75" y="7" width="1" height="1"/><rect x="76" y="1" width="1" height="1"/><rect x="76" y="2" width="1" height="1"/><rect x="76" y="3" width="1" height="1"/><rect x="76" y="6" width="1" height="1"/><rect x="77" y="0" width="1" height="1"/><rect x="77" y="6" width="1" height="1"/><rect x="78" y="0" width="1" height="1"/><rect x="78" y="6" width="1" height="1"/><rect x="79" y="1" width="1" height="1"/><rect x="79" y="2" width="1" height="1"/><rect x="79" y="3" width="1" height="1"/><rect x="79" y="6" width="1" height="1"/><rect x="80" y="3" width="1" height="1"/><rect x="80" y="4" width="1" height="1"/><rect x="80" y="5" width="1" height="1"/><rect x="80" y="6" width="1" height="1"/><rect x="81" y="3" width="1" height="1"/><rect x="81" y="6" width="1" height="1"/><rect x="81" y="7" width="1" height="1"/><rect x="82" y="3" width="1" height="1"/><rect x="82" y="8" width="1" height="1"/><rect x="83" y="3" width="1" height="1"/><rect x="83" y="9" width="1" height="1"/><rect x="84" y="3" width="1" height="1"/><rect x="84" y="6" width="1" height="1"/><rect x="84" y="9" width="1" height="1"/><rect x="85" y="3" width="1" height="1"/><rect x="85" y="6" width="1" height="1"/><rect x="85" y="8" width="1" height="1"/><rect x="86" y="3" width="1" height="1"/><rect x="86" y="6" width="1" height="1"/><rect x="86" y="7" width="1" height="1"/><rect x="87" y="1" width="1" height="1"/><rect x="87" y="2" width="1" height="1"/><rect x="87" y="3" width="1" height="1"/><rect x="87" y="6" width="1" height="1"/><rect x="88" y="0" width="1" height="1"/><rect x="88" y="6" width="1" height="1"/><rect x="89" y="0" width="1" height="1"/><rect x="89" y="6" width="1" height="1"/><rect x="90" y="1" width="1" height="1"/><rect x="90" y="2" width="1" height="1"/><rect x="90" y="3" width="1" height="1"/><rect x="90" y="6" width="1" height="1"/><rect x="91" y="3" width="1" height="1"/><rect x="91" y="4" width="1" height="1"/><rect x="91" y="5" width="1" height="1"/><rect x="91" y="6" width="1" height="1"/><rect x="92" y="3" width="1" height="1"/><rect x="92" y="6" width="1" height="1"/><rect x="92" y="7" width="1" height="1"/><rect x="93" y="3" width="1" height="1"/><rect x="93" y="8" width="1" height="1"/><rect x="94" y="3" width="1" height="1"/><rect x="94" y="9" width="1" height="1"/><rect x="95" y="3" width="1" height="1"/><rect x="95" y="6" width="1" height="1"/><rect x="95" y="9" width="1" height="1"/><rect x="96" y="3" width="1" height="1"/><rect x="96" y="6" width="1" height="1"/><rect x="96" y="8" width="1" height="1"/><rect x="97" y="3" width="1" height="1"/><rect x="97" y="6" width="1" height="1"/><rect x="97" y="7" width="1" height="1"/><rect x="98" y="1" width="1" height="1"/><rect x="98" y="2" width="1" height="1"/><rect x="98" y="3" width="1" height="1"/><rect x="98" y="6" width="1" height="1"/><rect x="99" y="0" width="1" height="1"/><rect x="99" y="6" width="1" height="1"/><rect x="100" y="0" width="1" height="1"/><rect x="100" y="6" width="1" height="1"/><rect x="101" y="1" width="1" height="1"/><rect x="101" y="2" width="1" height="1"/><rect x="101" y="3" width="1" height="1"/><rect x="101" y="6" width="1" height="1"/><rect x="102" y="3" width="1" height="1"/><rect x="102" y="4" width="1" height="1"/><rect x="102" y="5" width="1" height="1"/><rect x="102" y="6" width="1" height="1"/><rect x="103" y="3" width="1" height="1"/><rect x="103" y="6" width="1" height="1"/><rect x="103" y="7" width="1" height="1"/><rect x="104" y="3" width="1" height="1"/><rect x="104" y="8" width="1" height="1"/><rect x="105" y="3" width="1" height="1"/><rect x="105" y="9" width="1" height="1"/><rect x="106" y="3" width="1" height="1"/><rect x="106" y="6" width="1" height="1"/><rect x="106" y="9" width="1" height="1"/><rect x="107" y="3" width="1" height="1"/><rect x="107" y="6" width="1" height="1"/><rect x="107" y="8" width="1" height="1"/><rect x="108" y="3" width="1" height="1"/><rect x="108" y="6" width="1" height="1"/><rect x="108" y="7" width="1" height="1"/><rect x="109" y="1" width="1" height="1"/><rect x="109" y="2" width="1" height="1"/><rect x="109" y="3" width="1" height="1"/><rect x="109" y="6" width="1" height="1"/><rect x="110" y="0" width="1" height="1"/><rect x="110" y="6" width="1" height="1"/><rect x="111" y="0" width="1" height="1"/><rect x="111" y="6" width="1" height="1"/><rect x="112" y="1" width="1" height="1"/><rect x="112" y="2" width="1" height="1"/><rect x="112" y="3" width="1" height="1"/><rect x="112" y="6" width="1" height="1"/><rect x="113" y="3" width="1" height="1"/><rect x="113" y="4" width="1" height="1"/><rect x="113" y="5" width="1" height="1"/><rect x="113" y="6" width="1" height="1"/><rect x="114" y="3" width="1" height="1"/><rect x="114" y="6" width="1" height="1"/><rect x="114" y="7" width="1" height="1"/><rect x="115" y="3" width="1" height="1"/><rect x="115" y="8" width="1" height="1"/><rect x="116" y="3" width="1" height="1"/><rect x="116" y="9" width="1" height="1"/><rect x="117" y="3" width="1" height="1"/><rect x="117" y="6" width="1" height="1"/><rect x="117" y="9" width="1" height="1"/><rect x="118" y="3" width="1" height="1"/><rect x="118" y="6" width="1" height="1"/><rect x="118" y="8" width="1" height="1"/><rect x="119" y="3" width="1" height="1"/><rect x="119" y="6" width="1" height="1"/><rect x="119" y="7" width="1" height="1"/><rect x="120" y="1" width="1" height="1"/><rect x="120" y="2" width="1" height="1"/><rect x="120" y="3" width="1" height="1"/><rect x="120" y="6" width="1" height="1"/><rect x="121" y="0" width="1" height="1"/><rect x="121" y="6" width="1" height="1"/><rect x="122" y="0" width="1" height="1"/><rect x="122" y="6" width="1" height="1"/><rect x="123" y="1" width="1" height="1"/><rect x="123" y="2" width="1" height="1"/><rect x="123" y="3" width="1" height="1"/><rect x="123" y="6" width="1" height="1"/><rect x="124" y="3" width="1" height="1"/><rect x="124" y="4" width="1" height="1"/><rect x="124" y="5" width="1" height="1"/><rect x="124" y="6" width="1" height="1"/><rect x="125" y="3" width="1" height="1"/><rect x="125" y="6" width="1" height="1"/><rect x="125" y="7" width="1" height="1"/><rect x="126" y="3" width="1" height="1"/><rect x="126" y="8" width="1" height="1"/><rect x="127" y="3" width="1" height="1"/><rect x="127" y="9" width="1" height="1"/><rect x="128" y="3" width="1" height="1"/><rect x="128" y="6" width="1" height="1"/><rect x="128" y="9" width="1" height="1"/><rect x="129" y="3" width="1" height="1"/><rect x="129" y="6" width="1" height="1"/><rect x="129" y="8" width="1" height="1"/><rect x="130" y="3" width="1" height="1"/><rect x="130" y="6" width="1" height="1"/><rect x="130" y="7" width="1" height="1"/><rect x="131" y="1" width="1" height="1"/><rect x="131" y="2" width="1" height="1"/><rect x="131" y="3" width="1" height="1"/><rect x="131" y="6" width="1" height="1"/><rect x="132" y="0" width="1" height="1"/><rect x="132" y="6" width="1" height="1"/><rect x="133" y="0" width="1" height="1"/><rect x="133" y="6" width="1" height="1"/><rect x="134" y="1" width="1" height="1"/><rect x="134" y="2" width="1" height="1"/><rect x="134" y="3" width="1" height="1"/><rect x="134" y="6" width="1" height="1"/><rect x="135" y="3" width="1" height="1"/><rect x="135" y="4" width="1" height="1"/><rect x="135" y="5" width="1" height="1"/><rect x="135" y="6" width="1" height="1"/><rect x="136" y="3" width="1" height="1"/><rect x="136" y="6" width="1" height="1"/><rect x="136" y="7" width="1" height="1"/><rect x="137" y="3" width="1" height="1"/><rect x="137" y="8" width="1" height="1"/><rect x="138" y="3" width="1" height="1"/><rect x="138" y="9" width="1" height="1"/><rect x="139" y="3" width="1" height="1"/><rect x="139" y="6" width="1" height="1"/><rect x="139" y="9" width="1" height="1"/><rect x="140" y="3" width="1" height="1"/><rect x="140" y="6" width="1" height="1"/><rect x="140" y="8" width="1" height="1"/><rect x="141" y="3" width="1" height="1"/><rect x="141" y="6" width="1" height="1"/><rect x="141" y="7" width="1" height="1"/><rect x="142" y="1" width="1" height="1"/><rect x="142" y="2" width="1" height="1"/><rect x="142" y="3" width="1" height="1"/><rect x="142" y="6" width="1" height="1"/><rect x="143" y="0" width="1" height="1"/><rect x="143" y="6" width="1" height="1"/><rect x="144" y="0" width="1" height="1"/><rect x="144" y="6" width="1" height="1"/><rect x="145" y="1" width="1" height="1"/><rect x="145" y="2" width="1" height="1"/><rect x="145" y="3" width="1" height="1"/><rect x="145" y="6" width="1" height="1"/><rect x="146" y="3" width="1" height="1"/><rect x="146" y="4" width="1" height="1"/><rect x="146" y="5" width="1" height="1"/><rect x="146" y="6" width="1" height="1"/><rect x="147" y="3" width="1" height="1"/><rect x="147" y="6" width="1" height="1"/><rect x="147" y="7" width="1" height="1"/><rect x="148" y="3" width="1" height="1"/><rect x="148" y="8" width="1" height="1"/><rect x="149" y="3" width="1" height="1"/><rect x="149" y="9" width="1" height="1"/><rect x="150" y="3" width="1" height="1"/><rect x="150" y="6" width="1" height="1"/><rect x="150" y="9" width="1" height="1"/><rect x="151" y="3" width="1" height="1"/><rect x="151" y="6" width="1" height="1"/><rect x="151" y="8" width="1" height="1"/><rect x="152" y="3" width="1" height="1"/><rect x="152" y="6" width="1" height="1"/><rect x="152" y="7" width="1" height="1"/><rect x="153" y="1" width="1" height="1"/><rect x="153" y="2" width="1" height="1"/><rect x="153" y="3" width="1" height="1"/><rect x="153" y="6" width="1" height="1"/><rect x="154" y="0" width="1" height="1"/><rect x="154" y="6" width="1" height="1"/><rect x="155" y="0" width="1" height="1"/><rect x="155" y="6" width="1" height="1"/><rect x="156" y="1" width="1" height="1"/><rect x="156" y="2" width="1" height="1"/><rect x="156" y="3" width="1" height="1"/><rect x="156" y="6" width="1" height="1"/><rect x="157" y="3" width="1" height="1"/><rect x="157" y="4" width="1" height="1"/><rect x="157" y="5" width="1" height="1"/><rect x="157" y="6" width="1" height="1"/><rect x="158" y="3" width="1" height="1"/><rect x="158" y="6" width="1" height="1"/><rect x="158" y="7" width="1" height="1"/><rect x="159" y="3" width="1" height="1"/><rect x="159" y="8" width="1" height="1"/><rect x="160" y="3" width="1" height="1"/><rect x="160" y="9" width="1" height="1"/><rect x="161" y="3" width="1" height="1"/><rect x="161" y="6" width="1" height="1"/><rect x="161" y="9" width="1" height="1"/><rect x="162" y="3" width="1" height="1"/><rect x="162" y="6" width="1" height="1"/><rect x="162" y="8" width="1" height="1"/><rect x="163" y="3" width="1" height="1"/><rect x="163" y="6" width="1" height="1"/><rect x="163" y="7" width="1" height="1"/><rect x="164" y="1" width="1" height="1"/><rect x="164" y="2" width="1" height="1"/><rect x="164" y="3" width="1" height="1"/><rect x="164" y="6" width="1" height="1"/><rect x="165" y="0" width="1" height="1"/><rect x="165" y="6" width="1" height="1"/><rect x="166" y="0" width="1" height="1"/><rect x="166" y="6" width="1" height="1"/><rect x="167" y="1" width="1" height="1"/><rect x="167" y="2" width="1" height="1"/><rect x="167" y="3" width="1" height="1"/><rect x="167" y="6" width="1" height="1"/><rect x="168" y="3" width="1" height="1"/><rect x="168" y="4" width="1" height="1"/><rect x="168" y="5" width="1" height="1"/><rect x="168" y="6" width="1" height="1"/><rect x="169" y="3" width="1" height="1"/><rect x="169" y="6" width="1" height="1"/><rect x="169" y="7" width="1" height="1"/><rect x="170" y="3" width="1" height="1"/><rect x="170" y="8" width="1" height="1"/><rect x="171" y="3" width="1" height="1"/><rect x="171" y="9" width="1" height="1"/><rect x="172" y="3" width="1" height="1"/><rect x="172" y="6" width="1" height="1"/><rect x="172" y="9" width="1" height="1"/><rect x="173" y="3" width="1" height="1"/><rect x="173" y="6" width="1" height="1"/><rect x="173" y="8" width="1" height="1"/><rect x="174" y="3" width="1" height="1"/><rect x="174" y="6" width="1" height="1"/><rect x="174" y="7" width="1" height="1"/><rect x="175" y="1" width="1" height="1"/><rect x="175" y="2" width="1" height="1"/><rect x="175" y="3" width="1" height="1"/><rect x="175" y="6" width="1" height="1"/><rect x="176" y="0" width="1" height="1"/><rect x="176" y="6" width="1" height="1"/><rect x="177" y="0" width="1" height="1"/><rect x="177" y="6" width="1" height="1"/><rect x="178" y="1" width="1" height="1"/><rect x="178" y="2" width="1" height="1"/><rect x="178" y="3" width="1" height="1"/><rect x="178" y="6" width="1" height="1"/><rect x="179" y="3" width="1" height="1"/><rect x="179" y="4" width="1" height="1"/><rect x="179" y="5" width="1" height="1"/><rect x="179" y="6" width="1" height="1"/><rect x="180" y="3" width="1" height="1"/><rect x="180" y="6" width="1" height="1"/><rect x="180" y="7" width="1" height="1"/><rect x="181" y="3" width="1" height="1"/><rect x="181" y="8" width="1" height="1"/><rect x="182" y="3" width="1" height="1"/><rect x="182" y="9" width="1" height="1"/><rect x="183" y="3" width="1" height="1"/><rect x="183" y="6" width="1" height="1"/><rect x="183" y="9" width="1" height="1"/><rect x="184" y="3" width="1" height="1"/><rect x="184" y="6" width="1" height="1"/><rect x="184" y="8" width="1" height="1"/><rect x="185" y="3" width="1" height="1"/><rect x="185" y="6" width="1" height="1"/><rect x="185" y="7" width="1" height="1"/><rect x="186" y="1" width="1" height="1"/><rect x="186" y="2" width="1" height="1"/><rect x="186" y="3" width="1" height="1"/><rect x="186" y="6" width="1" height="1"/><rect x="187" y="0" width="1" height="1"/><rect x="187" y="6" width="1" height="1"/><rect x="188" y="0" width="1" height="1"/><rect x="188" y="6" width="1" height="1"/><rect x="189" y="1" width="1" height="1"/><rect x="189" y="2" width="1" height="1"/><rect x="189" y="3" width="1" height="1"/><rect x="189" y="6" width="1" height="1"/><rect x="190" y="3" width="1" height="1"/><rect x="190" y="4" width="1" height="1"/><rect x="190" y="5" width="1" height="1"/><rect x="190" y="6" width="1" height="1"/><rect x="191" y="3" width="1" height="1"/><rect x="191" y="6" width="1" height="1"/><rect x="192" y="3" width="1" height="1"/><rect x="192" y="6" width="1" height="1"/><rect x="193" y="3" width="1" height="1"/><rect x="193" y="6" width="1" height="1"/><rect x="194" y="3" width="1" height="1"/><rect x="194" y="6" width="1" height="1"/><rect x="195" y="3" width="1" height="1"/><rect x="195" y="6" width="1" height="1"/><rect x="196" y="0" width="1" height="1"/><rect x="196" y="1" width="1" height="1"/><rect x="196" y="2" width="1" height="1"/><rect x="196" y="3" width="1" height="1"/><rect x="196" y="4" width="1" height="1"/><rect x="196" y="5" width="1" height="1"/><rect x="196" y="6" width="1" height="1"/><rect x="196" y="7" width="1" height="1"/><rect x="196" y="8" width="1" height="1"/><rect x="196" y="9" width="1" height="1"/></g><circle cx="417.5" cy="668.5" r="3.3" fill="#00ffff" stroke="#000" stroke-width="1.2"/>
<g transform="translate(620,679)" shape-rendering="crispEdges" fill="#00ffff"><rect x="0" y="0" width="1" height="1"/><rect x="0" y="1" width="1" height="1"/><rect x="0" y="2" width="1" height="1"/><rect x="0" y="3" width="1" height="1"/><rect x="0" y="4" width="1" height="1"/><rect x="0" y="5" width="1" height="1"/><rect x="0" y="6" width="1" height="1"/><rect x="0" y="7" width="1" height="1"/><rect x="0" y="8" width="1" height="1"/><rect x="0" y="9" width="1" height="1"/><rect x="1" y="0" width="1" height="1"/><rect x="1" y="1" width="1" height="1"/><rect x="1" y="2" width="1" height="1"/><rect x="1" y="3" width="1" height="1"/><rect x="1" y="6" width="1" height="1"/><rect x="2" y="3" width="1" height="1"/><rect x="2" y="4" width="1" height="1"/><rect x="2" y="5" width="1" height="1"/><rect x="2" y="6" width="1" height="1"/><rect x="3" y="3" width="1" height="1"/><rect x="3" y="6" width="1" height="1"/><rect x="4" y="3" width="1" height="1"/><rect x="4" y="6" width="1" height="1"/><rect x="4" y="7" width="1" height="1"/><rect x="5" y="3" width="1" height="1"/><rect x="5" y="8" width="1" height="1"/><rect x="6" y="3" width="1" height="1"/><rect x="6" y="9" width="1" height="1"/><rect x="7" y="3" width="1" height="1"/><rect x="7" y="6" width="1" height="1"/><rect x="7" y="9" width="1" height="1"/><rect x="8" y="3" width="1" height="1"/><rect x="8" y="6" width="1" height="1"/><rect x="8" y="8" width="1" height="1"/><rect x="9" y="3" width="1" height="1"/><rect x="9" y="6" width="1" height="1"/><rect x="9" y="7" width="1" height="1"/><rect x="10" y="1" width="1" height="1"/><rect x="10" y="2" width="1" height="1"/><rect x="10" y="3" width="1" height="1"/><rect x="10" y="6" width="1" height="1"/><rect x="11" y="0" width="1" height="1"/><rect x="11" y="6" width="1" height="1"/><rect x="12" y="0" width="1" height="1"/><rect x="12" y="6" width="1" height="1"/><rect x="13" y="1" width="1" height="1"/><rect x="13" y="2" width="1" height="1"/><rect x="13" y="3" width="1" height="1"/><rect x="13" y="6" width="1" height="1"/><rect x="14" y="3" width="1" height="1"/><rect x="14" y="4" width="1" height="1"/><rect x="14" y="5" width="1" height="1"/><rect x="14" y="6" width="1" height="1"/><rect x="15" y="3" width="1" height="1"/><rect x="15" y="6" width="1" height="1"/><rect x="15" y="7" width="1" height="1"/><rect x="16" y="3" width="1" height="1"/><rect x="16" y="8" width="1" height="1"/><rect x="17" y="3" width="1" height="1"/><rect x="17" y="9" width="1" height="1"/><rect x="18" y="3" width="1" height="1"/><rect x="18" y="6" width="1" height="1"/><rect x="18" y="9" width="1" height="1"/><rect x="19" y="3" width="1" height="1"/><rect x="19" y="6" width="1" height="1"/><rect x="19" y="8" width="1" height="1"/><rect x="20" y="3" width="1" height="1"/><rect x="20" y="6" width="1" height="1"/><rect x="20" y="7" width="1" height="1"/><rect x="21" y="1" width="1" height="1"/><rect x="21" y="2" width="1" height="1"/><rect x="21" y="3" width="1" height="1"/><rect x="21" y="6" width="1" height="1"/><rect x="22" y="0" width="1" height="1"/><rect x="22" y="6" width="1" height="1"/><rect x="23" y="0" width="1" height="1"/><rect x="23" y="6" width="1" height="1"/><rect x="24" y="1" width="1" height="1"/><rect x="24" y="2" width="1" height="1"/><rect x="24" y="3" width="1" height="1"/><rect x="24" y="6" width="1" height="1"/><rect x="25" y="3" width="1" height="1"/><rect x="25" y="4" width="1" height="1"/><rect x="25" y="5" width="1" height="1"/><rect x="25" y="6" width="1" height="1"/><rect x="26" y="3" width="1" height="1"/><rect x="26" y="6" width="1" height="1"/><rect x="26" y="7" width="1" height="1"/><rect x="27" y="3" width="1" height="1"/><rect x="27" y="8" width="1" height="1"/><rect x="28" y="3" width="1" height="1"/><rect x="28" y="9" width="1" height="1"/><rect x="29" y="3" width="1" height="1"/><rect x="29" y="6" width="1" height="1"/><rect x="29" y="9" width="1" height="1"/><rect x="30" y="3" width="1" height="1"/><rect x="30" y="6" width="1" height="1"/><rect x="30" y="8" width="1" height="1"/><rect x="31" y="3" width="1" height="1"/><rect x="31" y="6" width="1" height="1"/><rect x="31" y="7" width="1" height="1"/><rect x="32" y="1" width="1" height="1"/><rect x="32" y="2" width="1" height="1"/><rect x="32" y="3" width="1" height="1"/><rect x="32" y="6" width="1" height="1"/><rect x="33" y="0" width="1" height="1"/><rect x="33" y="6" width="1" height="1"/><rect x="34" y="0" width="1" height="1"/><rect x="34" y="6" width="1" height="1"/><rect x="35" y="1" width="1" height="1"/><rect x="35" y="2" width="1" height="1"/><rect x="35" y="3" width="1" height="1"/><rect x="35" y="6" width="1" height="1"/><rect x="36" y="3" width="1" height="1"/><rect x="36" y="4" width="1" height="1"/><rect x="36" y="5" width="1" height="1"/><rect x="36" y="6" width="1" height="1"/><rect x="37" y="3" width="1" height="1"/><rect x="37" y="6" width="1" height="1"/><rect x="37" y="7" width="1" height="1"/><rect x="38" y="3" width="1" height="1"/><rect x="38" y="8" width="1" height="1"/><rect x="39" y="3" width="1" height="1"/><rect x="39" y="9" width="1" height="1"/><rect x="40" y="3" width="1" height="1"/><rect x="40" y="6" width="1" height="1"/><rect x="40" y="9" width="1" height="1"/><rect x="41" y="3" width="1" height="1"/><rect x="41" y="6" width="1" height="1"/><rect x="41" y="8" width="1" height="1"/><rect x="42" y="3" width="1" height="1"/><rect x="42" y="6" width="1" height="1"/><rect x="42" y="7" width="1" height="1"/><rect x="43" y="1" width="1" height="1"/><rect x="43" y="2" width="1" height="1"/><rect x="43" y="3" width="1" height="1"/><rect x="43" y="6" width="1" height="1"/><rect x="44" y="0" width="1" height="1"/><rect x="44" y="6" width="1" height="1"/><rect x="45" y="0" width="1" height="1"/><rect x="45" y="6" width="1" height="1"/><rect x="46" y="1" width="1" height="1"/><rect x="46" y="2" width="1" height="1"/><rect x="46" y="3" width="1" height="1"/><rect x="46" y="6" width="1" height="1"/><rect x="47" y="3" width="1" height="1"/><rect x="47" y="4" width="1" height="1"/><rect x="47" y="5" width="1" height="1"/><rect x="47" y="6" width="1" height="1"/><rect x="48" y="3" width="1" height="1"/><rect x="48" y="6" width="1" height="1"/><rect x="48" y="7" width="1" height="1"/><rect x="49" y="3" width="1" height="1"/><rect x="49" y="8" width="1" height="1"/><rect x="50" y="3" width="1" height="1"/><rect x="50" y="9" width="1" height="1"/><rect x="51" y="3" width="1" height="1"/><rect x="51" y="6" width="1" height="1"/><rect x="51" y="9" width="1" height="1"/><rect x="52" y="3" width="1" height="1"/><rect x="52" y="6" width="1" height="1"/><rect x="52" y="8" width="1" height="1"/><rect x="53" y="3" width="1" height="1"/><rect x="53" y="6" width="1" height="1"/><rect x="53" y="7" width="1" height="1"/><rect x="54" y="1" width="1" height="1"/><rect x="54" y="2" width="1" height="1"/><rect x="54" y="3" width="1" height="1"/><rect x="54" y="6" width="1" height="1"/><rect x="55" y="0" width="1" height="1"/><rect x="55" y="6" width="1" height="1"/><rect x="56" y="0" width="1" height="1"/><rect x="56" y="6" width="1" height="1"/><rect x="57" y="1" width="1" height="1"/><rect x="57" y="2" width="1" height="1"/><rect x="57" y="3" width="1" height="1"/><rect x="57" y="6" width="1" height="1"/><rect x="58" y="3" width="1" height="1"/><rect x="58" y="4" width="1" height="1"/><rect x="58" y="5" width="1" height="1"/><rect x="58" y="6" width="1" height="1"/><rect x="59" y="3" width="1" height="1"/><rect x="59" y="6" width="1" height="1"/><rect x="59" y="7" width="1" height="1"/><rect x="60" y="3" width="1" height="1"/><rect x="60" y="8" width="1" height="1"/><rect x="61" y="3" width="1" height="1"/><rect x="61" y="9" width="1" height="1"/><rect x="62" y="3" width="1" height="1"/><rect x="62" y="6" width="1" height="1"/><rect x="62" y="9" width="1" height="1"/><rect x="63" y="3" width="1" height="1"/><rect x="63" y="6" width="1" height="1"/><rect x="63" y="8" width="1" height="1"/><rect x="64" y="3" width="1" height="1"/><rect x="64" y="6" width="1" height="1"/><rect x="64" y="7" width="1" height="1"/><rect x="65" y="1" width="1" height="1"/><rect x="65" y="2" width="1" height="1"/><rect x="65" y="3" width="1" height="1"/><rect x="65" y="6" width="1" height="1"/><rect x="66" y="0" width="1" height="1"/><rect x="66" y="6" width="1" height="1"/><rect x="67" y="0" width="1" height="1"/><rect x="67" y="6" width="1" height="1"/><rect x="68" y="1" width="1" height="1"/><rect x="68" y="2" width="1" height="1"/><rect x="68" y="3" width="1" height="1"/><rect x="68" y="6" width="1" height="1"/><rect x="69" y="3" width="1" height="1"/><rect x="69" y="4" width="1" height="1"/><rect x="69" y="5" width="1" height="1"/><rect x="69" y="6" width="1" height="1"/><rect x="70" y="3" width="1" height="1"/><rect x="70" y="6" width="1" height="1"/><rect x="70" y="7" width="1" height="1"/><rect x="71" y="3" width="1" height="1"/><rect x="71" y="8" width="1" height="1"/><rect x="72" y="3" width="1" height="1"/><rect x="72" y="9" width="1" height="1"/><rect x="73" y="3" width="1" height="1"/><rect x="73" y="6" width="1" height="1"/><rect x="73" y="9" width="1" height="1"/><rect x="74" y="3" width="1" height="1"/><rect x="74" y="6" width="1" height="1"/><rect x="74" y="8" width="1" height="1"/><rect x="75" y="3" width="1" height="1"/><rect x="75" y="6" width="1" height="1"/><rect x="75" y="7" width="1" height="1"/><rect x="76" y="1" width="1" height="1"/><rect x="76" y="2" width="1" height="1"/><rect x="76" y="3" width="1" height="1"/><rect x="76" y="6" width="1" height="1"/><rect x="77" y="0" width="1" height="1"/><rect x="77" y="6" width="1" height="1"/><rect x="78" y="0" width="1" height="1"/><rect x="78" y="6" width="1" height="1"/><rect x="79" y="1" width="1" height="1"/><rect x="79" y="2" width="1" height="1"/><rect x="79" y="3" width="1" height="1"/><rect x="79" y="6" width="1" height="1"/><rect x="80" y="3" width="1" height="1"/><rect x="80" y="4" width="1" height="1"/><rect x="80" y="5" width="1" height="1"/><rect x="80" y="6" width="1" height="1"/><rect x="81" y="3" width="1" height="1"/><rect x="81" y="6" width="1" height="1"/><rect x="81" y="7" width="1" height="1"/><rect x="82" y="3" width="1" height="1"/><rect x="82" y="8" width="1" height="1"/><rect x="83" y="3" width="1" height="1"/><rect x="83" y="9" width="1" height="1"/><rect x="84" y="3" width="1" height="1"/><rect x="84" y="6" width="1" height="1"/><rect x="84" y="9" width="1" height="1"/><rect x="85" y="3" width="1" height="1"/><rect x="85" y="6" width="1" height="1"/><rect x="85" y="8" width="1" height="1"/><rect x="86" y="3" width="1" height="1"/><rect x="86" y="6" width="1" height="1"/><rect x="86" y="7" width="1" height="1"/><rect x="87" y="1" width="1" height="1"/><rect x="87" y="2" width="1" height="1"/><rect x="87" y="3" width="1" height="1"/><rect x="87" y="6" width="1" height="1"/><rect x="88" y="0" width="1" height="1"/><rect x="88" y="6" width="1" height="1"/><rect x="89" y="0" width="1" height="1"/><rect x="89" y="6" width="1" height="1"/><rect x="90" y="1" width="1" height="1"/><rect x="90" y="2" width="1" height="1"/><rect x="90" y="3" width="1" height="1"/><rect x="90" y="6" width="1" height="1"/><rect x="91" y="3" width="1" height="1"/><rect x="91" y="4" width="1" height="1"/><rect x="91" y="5" width="1" height="1"/><rect x="91" y="6" width="1" height="1"/><rect x="92" y="3" width="1" height="1"/><rect x="92" y="6" width="1" height="1"/><rect x="92" y="7" width="1" height="1"/><rect x="93" y="3" width="1" height="1"/><rect x="93" y="8" width="1" height="1"/><rect x="94" y="3" width="1" height="1"/><rect x="94" y="9" width="1" height="1"/><rect x="95" y="3" width="1" height="1"/><rect x="95" y="6" width="1" height="1"/><rect x="95" y="9" width="1" height="1"/><rect x="96" y="3" width="1" height="1"/><rect x="96" y="6" width="1" height="1"/><rect x="96" y="8" width="1" height="1"/><rect x="97" y="3" width="1" height="1"/><rect x="97" y="6" width="1" height="1"/><rect x="97" y="7" width="1" height="1"/><rect x="98" y="1" width="1" height="1"/><rect x="98" y="2" width="1" height="1"/><rect x="98" y="3" width="1" height="1"/><rect x="98" y="6" width="1" height="1"/><rect x="99" y="0" width="1" height="1"/><rect x="99" y="6" width="1" height="1"/><rect x="100" y="0" width="1" height="1"/><rect x="100" y="6" width="1" height="1"/><rect x="101" y="1" width="1" height="1"/><rect x="101" y="2" width="1" height="1"/><rect x="101" y="3" width="1" height="1"/><rect x="101" y="6" width="1" height="1"/><rect x="102" y="3" width="1" height="1"/><rect x="102" y="4" width="1" height="1"/><rect x="102" y="5" width="1" height="1"/><rect x="102" y="6" width="1" height="1"/><rect x="103" y="3" width="1" height="1"/><rect x="103" y="6" width="1" height="1"/><rect x="103" y="7" width="1" height="1"/><rect x="104" y="3" width="1" height="1"/><rect x="104" y="8" width="1" height="1"/><rect x="105" y="3" width="1" height="1"/><rect x="105" y="9" width="1" height="1"/><rect x="106" y="3" width="1" height="1"/><rect x="106" y="6" width="1" height="1"/><rect x="106" y="9" width="1" height="1"/><rect x="107" y="3" width="1" height="1"/><rect x="107" y="6" width="1" height="1"/><rect x="107" y="8" width="1" height="1"/><rect x="108" y="3" width="1" height="1"/><rect x="108" y="6" width="1" height="1"/><rect x="108" y="7" width="1" height="1"/><rect x="109" y="1" width="1" height="1"/><rect x="109" y="2" width="1" height="1"/><rect x="109" y="3" width="1" height="1"/><rect x="109" y="6" width="1" height="1"/><rect x="110" y="0" width="1" height="1"/><rect x="110" y="6" width="1" height="1"/><rect x="111" y="0" width="1" height="1"/><rect x="111" y="6" width="1" height="1"/><rect x="112" y="1" width="1" height="1"/><rect x="112" y="2" width="1" height="1"/><rect x="112" y="3" width="1" height="1"/><rect x="112" y="6" width="1" height="1"/><rect x="113" y="3" width="1" height="1"/><rect x="113" y="4" width="1" height="1"/><rect x="113" y="5" width="1" height="1"/><rect x="113" y="6" width="1" height="1"/><rect x="114" y="3" width="1" height="1"/><rect x="114" y="6" width="1" height="1"/><rect x="114" y="7" width="1" height="1"/><rect x="115" y="3" width="1" height="1"/><rect x="115" y="8" width="1" height="1"/><rect x="116" y="3" width="1" height="1"/><rect x="116" y="9" width="1" height="1"/><rect x="117" y="3" width="1" height="1"/><rect x="117" y="6" width="1" height="1"/><rect x="117" y="9" width="1" height="1"/><rect x="118" y="3" width="1" height="1"/><rect x="118" y="6" width="1" height="1"/><rect x="118" y="8" width="1" height="1"/><rect x="119" y="3" width="1" height="1"/><rect x="119" y="6" width="1" height="1"/><rect x="119" y="7" width="1" height="1"/><rect x="120" y="1" width="1" height="1"/><rect x="120" y="2" width="1" height="1"/><rect x="120" y="3" width="1" height="1"/><rect x="120" y="6" width="1" height="1"/><rect x="121" y="0" width="1" height="1"/><rect x="121" y="6" width="1" height="1"/><rect x="122" y="0" width="1" height="1"/><rect x="122" y="6" width="1" height="1"/><rect x="123" y="1" width="1" height="1"/><rect x="123" y="2" width="1" height="1"/><rect x="123" y="3" width="1" height="1"/><rect x="123" y="6" width="1" height="1"/><rect x="124" y="3" width="1" height="1"/><rect x="124" y="4" width="1" height="1"/><rect x="124" y="5" width="1" height="1"/><rect x="124" y="6" width="1" height="1"/><rect x="125" y="3" width="1" height="1"/><rect x="125" y="6" width="1" height="1"/><rect x="125" y="7" width="1" height="1"/><rect x="126" y="3" width="1" height="1"/><rect x="126" y="8" width="1" height="1"/><rect x="127" y="3" width="1" height="1"/><rect x="127" y="9" width="1" height="1"/><rect x="128" y="3" width="1" height="1"/><rect x="128" y="6" width="1" height="1"/><rect x="128" y="9" width="1" height="1"/><rect x="129" y="3" width="1" height="1"/><rect x="129" y="6" width="1" height="1"/><rect x="129" y="8" width="1" height="1"/><rect x="130" y="3" width="1" height="1"/><rect x="130" y="6" width="1" height="1"/><rect x="130" y="7" width="1" height="1"/><rect x="131" y="1" width="1" height="1"/><rect x="131" y="2" width="1" height="1"/><rect x="131" y="3" width="1" height="1"/><rect x="131" y="6" width="1" height="1"/><rect x="132" y="0" width="1" height="1"/><rect x="132" y="6" width="1" height="1"/><rect x="133" y="0" width="1" height="1"/><rect x="133" y="6" width="1" height="1"/><rect x="134" y="1" width="1" height="1"/><rect x="134" y="2" width="1" height="1"/><rect x="134" y="3" width="1" height="1"/><rect x="134" y="6" width="1" height="1"/><rect x="135" y="3" width="1" height="1"/><rect x="135" y="4" width="1" height="1"/><rect x="135" y="5" width="1" height="1"/><rect x="135" y="6" width="1" height="1"/><rect x="136" y="3" width="1" height="1"/><rect x="136" y="6" width="1" height="1"/><rect x="136" y="7" width="1" height="1"/><rect x="137" y="3" width="1" height="1"/><rect x="137" y="8" width="1" height="1"/><rect x="138" y="3" width="1" height="1"/><rect x="138" y="9" width="1" height="1"/><rect x="139" y="3" width="1" height="1"/><rect x="139" y="6" width="1" height="1"/><rect x="139" y="9" width="1" height="1"/><rect x="140" y="3" width="1" height="1"/><rect x="140" y="6" width="1" height="1"/><rect x="140" y="8" width="1" height="1"/><rect x="141" y="3" width="1" height="1"/><rect x="141" y="6" width="1" height="1"/><rect x="141" y="7" width="1" height="1"/><rect x="142" y="1" width="1" height="1"/><rect x="142" y="2" width="1" height="1"/><rect x="142" y="3" width="1" height="1"/><rect x="142" y="6" width="1" height="1"/><rect x="143" y="0" width="1" height="1"/><rect x="143" y="6" width="1" height="1"/><rect x="144" y="0" width="1" height="1"/><rect x="144" y="6" width="1" height="1"/><rect x="145" y="1" width="1" height="1"/><rect x="145" y="2" width="1" height="1"/><rect x="145" y="3" width="1" height="1"/><rect x="145" y="6" width="1" height="1"/><rect x="146" y="3" width="1" height="1"/><rect x="146" y="4" width="1" height="1"/><rect x="146" y="5" width="1" height="1"/><rect x="146" y="6" width="1" height="1"/><rect x="147" y="3" width="1" height="1"/><rect x="147" y="6" width="1" height="1"/><rect x="147" y="7" width="1" height="1"/><rect x="148" y="3" width="1" height="1"/><rect x="148" y="8" width="1" height="1"/><rect x="149" y="3" width="1" height="1"/><rect x="149" y="9" width="1" height="1"/><rect x="150" y="3" width="1" height="1"/><rect x="150" y="6" width="1" height="1"/><rect x="150" y="9" width="1" height="1"/><rect x="151" y="3" width="1" height="1"/><rect x="151" y="6" width="1" height="1"/><rect x="151" y="8" width="1" height="1"/><rect x="152" y="3" width="1" height="1"/><rect x="152" y="6" width="1" height="1"/><rect x="152" y="7" width="1" height="1"/><rect x="153" y="1" width="1" height="1"/><rect x="153" y="2" width="1" height="1"/><rect x="153" y="3" width="1" height="1"/><rect x="153" y="6" width="1" height="1"/><rect x="154" y="0" width="1" height="1"/><rect x="154" y="6" width="1" height="1"/><rect x="155" y="0" width="1" height="1"/><rect x="155" y="6" width="1" height="1"/><rect x="156" y="1" width="1" height="1"/><rect x="156" y="2" width="1" height="1"/><rect x="156" y="3" width="1" height="1"/><rect x="156" y="6" width="1" height="1"/><rect x="157" y="3" width="1" height="1"/><rect x="157" y="4" width="1" height="1"/><rect x="157" y="5" width="1" height="1"/><rect x="157" y="6" width="1" height="1"/><rect x="158" y="3" width="1" height="1"/><rect x="158" y="6" width="1" height="1"/><rect x="158" y="7" width="1" height="1"/><rect x="159" y="3" width="1" height="1"/><rect x="159" y="8" width="1" height="1"/><rect x="160" y="3" width="1" height="1"/><rect x="160" y="9" width="1" height="1"/><rect x="161" y="3" width="1" height="1"/><rect x="161" y="6" width="1" height="1"/><rect x="161" y="9" width="1" height="1"/><rect x="162" y="3" width="1" height="1"/><rect x="162" y="6" width="1" height="1"/><rect x="162" y="8" width="1" height="1"/><rect x="163" y="3" width="1" height="1"/><rect x="163" y="6" width="1" height="1"/><rect x="163" y="7" width="1" height="1"/><rect x="164" y="1" width="1" height="1"/><rect x="164" y="2" width="1" height="1"/><rect x="164" y="3" width="1" height="1"/><rect x="164" y="6" width="1" height="1"/><rect x="165" y="0" width="1" height="1"/><rect x="165" y="6" width="1" height="1"/><rect x="166" y="0" width="1" height="1"/><rect x="166" y="6" width="1" height="1"/><rect x="167" y="1" width="1" height="1"/><rect x="167" y="2" width="1" height="1"/><rect x="167" y="3" width="1" height="1"/><rect x="167" y="6" width="1" height="1"/><rect x="168" y="3" width="1" height="1"/><rect x="168" y="4" width="1" height="1"/><rect x="168" y="5" width="1" height="1"/><rect x="168" y="6" width="1" height="1"/><rect x="169" y="3" width="1" height="1"/><rect x="169" y="6" width="1" height="1"/><rect x="169" y="7" width="1" height="1"/><rect x="170" y="3" width="1" height="1"/><rect x="170" y="8" width="1" height="1"/><rect x="171" y="3" width="1" height="1"/><rect x="171" y="9" width="1" height="1"/><rect x="172" y="3" width="1" height="1"/><rect x="172" y="6" width="1" height="1"/><rect x="172" y="9" width="1" height="1"/><rect x="173" y="3" width="1" height="1"/><rect x="173" y="6" width="1" height="1"/><rect x="173" y="8" width="1" height="1"/><rect x="174" y="3" width="1" height="1"/><rect x="174" y="6" width="1" height="1"/><rect x="174" y="7" width="1" height="1"/><rect x="175" y="1" width="1" height="1"/><rect x="175" y="2" width="1" height="1"/><rect x="175" y="3" width="1" height="1"/><rect x="175" y="6" width="1" height="1"/><rect x="176" y="0" width="1" height="1"/><rect x="176" y="6" width="1" height="1"/><rect x="177" y="0" width="1" height="1"/><rect x="177" y="6" width="1" height="1"/><rect x="178" y="1" width="1" height="1"/><rect x="178" y="2" width="1" height="1"/><rect x="178" y="3" width="1" height="1"/><rect x="178" y="6" width="1" height="1"/><rect x="179" y="3" width="1" height="1"/><rect x="179" y="4" width="1" height="1"/><rect x="179" y="5" width="1" height="1"/><rect x="179" y="6" width="1" height="1"/><rect x="180" y="3" width="1" height="1"/><rect x="180" y="6" width="1" height="1"/><rect x="181" y="3" width="1" height="1"/><rect x="181" y="6" width="1" height="1"/><rect x="182" y="3" width="1" height="1"/><rect x="182" y="6" width="1" height="1"/><rect x="183" y="3" width="1" height="1"/><rect x="183" y="6" width="1" height="1"/><rect x="184" y="3" width="1" height="1"/><rect x="184" y="6" width="1" height="1"/><rect x="185" y="0" width="1" height="1"/><rect x="185" y="1" width="1" height="1"/><rect x="185" y="2" width="1" height="1"/><rect x="185" y="3" width="1" height="1"/><rect x="185" y="4" width="1" height="1"/><rect x="185" y="5" width="1" height="1"/><rect x="185" y="6" width="1" height="1"/><rect x="185" y="7" width="1" height="1"/><rect x="185" y="8" width="1" height="1"/><rect x="185" y="9" width="1" height="1"/></g><circle cx="628.5" cy="684.5" r="3.3" fill="#00ffff" stroke="#000" stroke-width="1.2"/>
<text x="181" y="120" font-size="13" fill="#fff" font-weight="normal" text-anchor="start" font-style="normal">21</text>
<text x="221" y="121" font-size="13" fill="#fff" font-weight="normal" text-anchor="start" font-style="normal">22</text>
<text x="305" y="121" font-size="13" fill="#fff" font-weight="normal" text-anchor="start" font-style="normal">23</text>
<text x="406" y="78" font-size="13" fill="#fff" font-weight="normal" text-anchor="start" font-style="normal">14</text>
<text x="422" y="108" font-size="13" fill="#fff" font-weight="normal" text-anchor="start" font-style="normal">15</text>
<text x="492" y="78" font-size="13" fill="#fff" font-weight="normal" text-anchor="start" font-style="normal">16</text>
<text x="509" y="108" font-size="13" fill="#fff" font-weight="normal" text-anchor="start" font-style="normal">17</text>
<text x="610" y="78" font-size="13" fill="#fff" font-weight="normal" text-anchor="start" font-style="normal">18</text>
<text x="590" y="121" font-size="13" fill="#fff" font-weight="normal" text-anchor="start" font-style="normal">19</text>
<text x="681" y="121" font-size="13" fill="#fff" font-weight="normal" text-anchor="start" font-style="normal">20</text>
<text x="41" y="108" font-size="13" fill="#fff" font-weight="normal" text-anchor="start" font-style="normal">200</text>
<text x="58" y="172.5" font-size="13" fill="#fff" font-weight="normal" text-anchor="start" font-style="normal">203</text>
<text x="15" y="209.5" font-size="13" fill="#fff" font-weight="normal" text-anchor="start" font-style="normal">201</text>
<text x="79" y="268.5" font-size="13" fill="#fff" font-weight="normal" text-anchor="start" font-style="normal">202</text>
<text x="811" y="180.5" font-size="13" fill="#fff" font-weight="normal" text-anchor="start" font-style="normal">206</text>
<text x="831" y="267.5" font-size="13" fill="#fff" font-weight="normal" text-anchor="start" font-style="normal">205</text>
<text x="820" y="299" font-size="13" fill="#fff" font-weight="normal" text-anchor="start" font-style="normal">204</text>
<text x="888" y="457" font-size="13" fill="#fff" font-weight="normal" text-anchor="start" font-style="normal">8</text>
<text x="886" y="489" font-size="13" fill="#fff" font-weight="normal" text-anchor="start" font-style="normal">6</text>
<text x="854" y="504.5" font-size="13" fill="#fff" font-weight="normal" text-anchor="start" font-style="normal">7</text>
<text x="905" y="531" font-size="13" fill="#fff" font-weight="normal" text-anchor="start" font-style="normal">9</text>
<text x="885" y="622" font-size="13" fill="#fff" font-weight="normal" text-anchor="start" font-style="normal">614</text>
<text x="28" y="637" font-size="13" fill="#fff" font-weight="normal" text-anchor="start" font-style="normal">302</text>
<text x="19" y="695.5" font-size="13" fill="#fff" font-weight="normal" text-anchor="start" font-style="normal">300</text>
<text x="107.5" y="637" font-size="13" fill="#fff" font-weight="normal" text-anchor="start" font-style="normal">303</text>
<text x="98.5" y="695.5" font-size="13" fill="#fff" font-weight="normal" text-anchor="start" font-style="normal">301</text>
<text x="215" y="693" font-size="13" fill="#fff" font-weight="normal" text-anchor="start" font-style="normal">207</text>
<text x="404" y="655" font-size="13" fill="#fff" font-weight="normal" text-anchor="start" font-style="normal">208</text>
<text x="587" y="694" font-size="13" fill="#fff" font-weight="normal" text-anchor="start" font-style="normal">209</text>
<text x="51.5" y="589.5" font-size="10.5" fill="#ffffff" font-weight="normal" text-anchor="start" font-style="normal">B/c</text>
<text x="132.5" y="589.5" font-size="10.5" fill="#ffffff" font-weight="normal" text-anchor="start" font-style="normal">1/c</text>
<g transform="translate(62,127) scale(-1,1)">
<path d="M0.5,3 L-2.5,3 L-4.5,1 L-4.5,-10 L-2,-12.5 L4,-12.5 L6.5,-10 L6.5,-7" fill="none" stroke="#000" stroke-width="3"/>
<path d="M0.5,3 L-2.5,3 L-4.5,1 L-4.5,-10 L-2,-12.5 L4,-12.5 L6.5,-10 L6.5,-7" fill="none" stroke="#00ffff" stroke-width="1.2"/>
<rect x="0.5" y="0.5" width="25" height="5" fill="#00ffff" stroke="#000"/>
<rect x="25.5" y="2.5" width="2.5" height="2.5" fill="#00ffff" stroke="#000"/>
<circle cx="6.6" cy="-3.2" r="3.8" fill="#00ffff" stroke="#000"/>
<circle cx="20.4" cy="-3" r="3" fill="#00ffff" stroke="#000"/>
</g>
<g transform="translate(18,673)">
<path d="M0.5,3 L-2.5,3 L-4.5,1 L-4.5,-10 L-2,-12.5 L4,-12.5 L6.5,-10 L6.5,-7" fill="none" stroke="#000" stroke-width="3"/>
<path d="M0.5,3 L-2.5,3 L-4.5,1 L-4.5,-10 L-2,-12.5 L4,-12.5 L6.5,-10 L6.5,-7" fill="none" stroke="#00ffff" stroke-width="1.2"/>
<rect x="0.5" y="0.5" width="25" height="5" fill="#00ffff" stroke="#000"/>
<rect x="25.5" y="2.5" width="2.5" height="2.5" fill="#00ffff" stroke="#000"/>
<circle cx="6.6" cy="-3.2" r="3.8" fill="#00ffff" stroke="#000"/>
<circle cx="20.4" cy="-3" r="3" fill="#00ffff" stroke="#000"/>
</g>
<g transform="translate(98,673)">
<path d="M0.5,3 L-2.5,3 L-4.5,1 L-4.5,-10 L-2,-12.5 L4,-12.5 L6.5,-10 L6.5,-7" fill="none" stroke="#000" stroke-width="3"/>
<path d="M0.5,3 L-2.5,3 L-4.5,1 L-4.5,-10 L-2,-12.5 L4,-12.5 L6.5,-10 L6.5,-7" fill="none" stroke="#00ffff" stroke-width="1.2"/>
<rect x="0.5" y="0.5" width="25" height="5" fill="#00ffff" stroke="#000"/>
<rect x="25.5" y="2.5" width="2.5" height="2.5" fill="#00ffff" stroke="#000"/>
<circle cx="6.6" cy="-3.2" r="3.8" fill="#00ffff" stroke="#000"/>
<circle cx="20.4" cy="-3" r="3" fill="#00ffff" stroke="#000"/>
</g>
<g shape-rendering="crispEdges">
<rect x="50.5" y="182.5" width="33" height="65" fill="#00ffff" stroke="#000"/>
<line x1="51" y1="199.5" x2="83" y2="199.5" stroke="#000"/>
<line x1="51" y1="239.5" x2="83" y2="239.5" stroke="#000"/>
<rect x="69" y="247" width="6" height="2" fill="#000"/>
</g>
<polygon points="59.5,204.5 83,204.5 83,221.5 74.5,221.5 59.5,214.5" fill="#00ffff" stroke="#000"/>
<line x1="64.5" y1="205" x2="64.5" y2="216.5" stroke="#000"/>

<g shape-rendering="crispEdges">
<rect x="14.5" y="225.5" width="13" height="11" fill="#00ffff" stroke="#000"/>
<rect x="17.5" y="225.5" width="10" height="11" fill="#00ffff" stroke="#000"/>
<line x1="17.5" y1="225.5" x2="27.5" y2="236.5" stroke="#000"/>
<line x1="27.5" y1="225.5" x2="17.5" y2="236.5" stroke="#000"/>
<rect x="27.5" y="217.5" width="6" height="26" fill="#00ffff" stroke="#000"/>
<rect x="33.5" y="225.5" width="2" height="11" fill="#00ffff" stroke="#000"/>
<rect x="16.5" y="238.5" width="10" height="10" fill="#00ffff" stroke="#000"/>
<rect x="41" y="231" width="3" height="1" fill="#d8d0d0"/>
</g>
<circle cx="64.5" cy="259.5" r="5.8" fill="#00ffff" stroke="#000"/>
<circle cx="64.5" cy="259.5" r="3.2" fill="#00ffff" stroke="#000"/>

<g>
<rect x="49.5" y="645.5" width="19" height="5" fill="#00ffff" stroke="#000"/>
<polygon points="50.5,650.5 67.5,650.5 60,672 58,672" fill="#00ffff" stroke="#000"/>
<circle cx="59" cy="676.5" r="4" fill="#00ffff" stroke="#000"/>
<rect x="44.5" y="662.5" width="4" height="4" fill="#00ffff" stroke="#000"/>
<rect x="47" y="676" width="2" height="1" fill="#fff"/>
</g>
<g>
<rect x="130.5" y="645.5" width="19" height="5" fill="#00ffff" stroke="#000"/>
<polygon points="131.5,650.5 148.5,650.5 141,672 139,672" fill="#00ffff" stroke="#000"/>
<circle cx="140" cy="676.5" r="4" fill="#00ffff" stroke="#000"/>
<rect x="125.5" y="662.5" width="4" height="4" fill="#00ffff" stroke="#000"/>
<rect x="128" y="676" width="2" height="1" fill="#fff"/>
</g>
<polygon points="818.5,187.5 828,187.5 834,193.5 834,198 838.5,205.5 834,205.5 834,211.5 826.5,211.5 826.5,206 820,206 820,211.5 812.5,211.5 812.5,193.5" fill="#00ffff" stroke="#000" stroke-width="1.2"/>
<g stroke="#00ffff" fill="none" stroke-width="1"><line x1="818.5" y1="212" x2="818.5" y2="237"/><line x1="816" y1="236.5" x2="819" y2="236.5"/><line x1="827.5" y1="212" x2="827.5" y2="237"/><line x1="827" y1="236.5" x2="831" y2="236.5"/><polyline points="818.5,212.5 813.5,215.5 816.5,220.5 818.5,221.5"/><polyline points="827.5,212.5 832.5,217.5 828.5,220.5"/><polyline points="818.5,224.5 813.5,227.5 816.5,232.5 818.5,233.5"/><polyline points="827.5,224.5 832.5,229.5 828.5,232.5"/></g>
<g stroke="#00ffff" fill="none" stroke-width="1"><line x1="818.5" y1="671" x2="818.5" y2="696"/><line x1="815" y1="671.5" x2="819" y2="671.5"/><line x1="827.5" y1="671" x2="827.5" y2="696"/><line x1="827" y1="671.5" x2="830" y2="671.5"/><polyline points="816.5,675.5 813.5,680.5 816.5,684.5 818.5,684.5"/><polyline points="827.5,675.5 831.5,678.5 828.5,684.5"/><polyline points="816.5,687.5 813.5,692.5 816.5,696.5 818.5,696.5"/><polyline points="827.5,687.5 831.5,690.5 828.5,696.5"/></g>
<g>
<rect x="872.5" y="256.5" width="10" height="6" fill="#00ffff" stroke="#000"/>
<polygon points="871,262.5 884,262.5 893.5,270 861.5,270" fill="#00ffff" stroke="#000"/>
<rect x="861.5" y="270" width="32" height="2.5" fill="#00ffff" stroke="#000"/>
<circle cx="873" cy="266.5" r="2" fill="#00ffff" stroke="#000" stroke-width="0.8"/>
<line x1="877" y1="263" x2="879" y2="270" stroke="#000" stroke-width="0.8"/>
<line x1="880" y1="263" x2="884" y2="270" stroke="#000" stroke-width="0.8"/>
</g>
<g shape-rendering="crispEdges">
<rect x="851.5" y="284.5" width="48" height="2" fill="#00ffff" stroke="#000"/>
<rect x="860.5" y="287.5" width="6" height="5" fill="#00ffff" stroke="#000"/>
<rect x="883.5" y="287.5" width="6" height="5" fill="#00ffff" stroke="#000"/>
<rect x="850.5" y="292.5" width="50" height="62" fill="#00ffff" stroke="#000"/>
<rect x="852.5" y="294.5" width="22" height="58" fill="#00ffff" stroke="#000"/>
<rect x="876.5" y="294.5" width="22" height="58" fill="#00ffff" stroke="#000"/>
</g>
<g transform="translate(0,0)">
<g shape-rendering="crispEdges">
<rect x="851.5" y="632.5" width="20" height="13" fill="#00ffff" stroke="#000"/>
<rect x="856.5" y="662.5" width="32" height="6" fill="#00ffff" stroke="#000"/>
<rect x="877.5" y="670.5" width="12" height="11.5" fill="#00ffff" stroke="#000"/>
<rect x="881.5" y="701.5" width="4" height="17" fill="#c8c8c8" stroke="#000"/>
<path d="M877.5,723 V711.5 H889.5 V723" fill="none" stroke="#000"/>
</g>
<polygon points="851.5,645.5 871.5,645.5 866,662.5 857.5,662.5" fill="#00ffff" stroke="#000"/>
<polygon points="877.5,682 889.5,682 885.5,695.5 881.5,695.5" fill="#00ffff" stroke="#000"/>
<line x1="878.5" y1="683" x2="885.5" y2="695" stroke="#000"/>
<line x1="888.5" y1="683" x2="881.5" y2="695" stroke="#000"/>
<rect x="878.5" y="695.5" width="10" height="6" rx="1.5" fill="#00ffff" stroke="#000"/>
<rect x="881" y="669" width="7" height="1.5" fill="#00ffff"/>
</g>
<g transform="translate(64,0)">
<g shape-rendering="crispEdges">
<rect x="851.5" y="632.5" width="20" height="13" fill="#00ffff" stroke="#000"/>
<rect x="856.5" y="662.5" width="32" height="6" fill="#00ffff" stroke="#000"/>
<rect x="877.5" y="670.5" width="12" height="11.5" fill="#00ffff" stroke="#000"/>
<rect x="881.5" y="701.5" width="4" height="17" fill="#c8c8c8" stroke="#000"/>
<path d="M877.5,723 V711.5 H889.5 V723" fill="none" stroke="#000"/>
</g>
<polygon points="851.5,645.5 871.5,645.5 866,662.5 857.5,662.5" fill="#00ffff" stroke="#000"/>
<polygon points="877.5,682 889.5,682 885.5,695.5 881.5,695.5" fill="#00ffff" stroke="#000"/>
<line x1="878.5" y1="683" x2="885.5" y2="695" stroke="#000"/>
<line x1="888.5" y1="683" x2="881.5" y2="695" stroke="#000"/>
<rect x="878.5" y="695.5" width="10" height="6" rx="1.5" fill="#00ffff" stroke="#000"/>
<rect x="881" y="669" width="7" height="1.5" fill="#00ffff"/>
</g>
<g shape-rendering="crispEdges">
<polygon points="974.5,633.5 994.5,633.5 994.5,658 988.5,671 981,671 974.5,658" fill="#52c4c4" stroke="#000"/>
<polygon points="975,658 994,658 988,670.5 981.5,670.5" fill="#48acac"/>
<rect x="981.5" y="637.5" width="6" height="4" fill="#00ffff" stroke="#000"/>
</g>
<polygon points="812.5,696.5 820.5,696.5 820.5,701.5 825.5,701.5 825.5,696.5 833.5,696.5 833.5,715 827.5,720.5 818,720.5 812.5,715 812.5,708 807.5,702 812.5,702" fill="#00ffff" stroke="#000" stroke-width="1.2"/>
<rect x="819.5" y="703.5" width="6.5" height="4" fill="#00ffff" stroke="#000"/>
<circle cx="822.8" cy="712" r="3.2" fill="#00ffff" stroke="#000"/>
<g>
<polygon points="1003,72.5 1013,72.5 1016.5,77 1016.5,87 1020,91 1020,92.5 996,92.5 996,91 999.5,87 999.5,77" fill="#00ffff"/>
<polyline points="996,92 999.5,87 999.5,77 1003,72.5 1013,72.5" fill="none" stroke="#000"/>
<polyline points="1013,72.5 1016.5,77 1016.5,87 1020,91 1020,92.5 996,92.5" fill="none" stroke="#fff"/>
<polygon points="1007,92.5 1013,92.5 1010,97" fill="#00ffff"/>
<polyline points="1007.5,92.5 1007.5,95 1010,97.5" fill="none" stroke="#000"/>
<polyline points="1010,97.5 1012.5,95 1012.5,92.5" fill="none" stroke="#fff"/>
</g>
</svg>
</body></html>
